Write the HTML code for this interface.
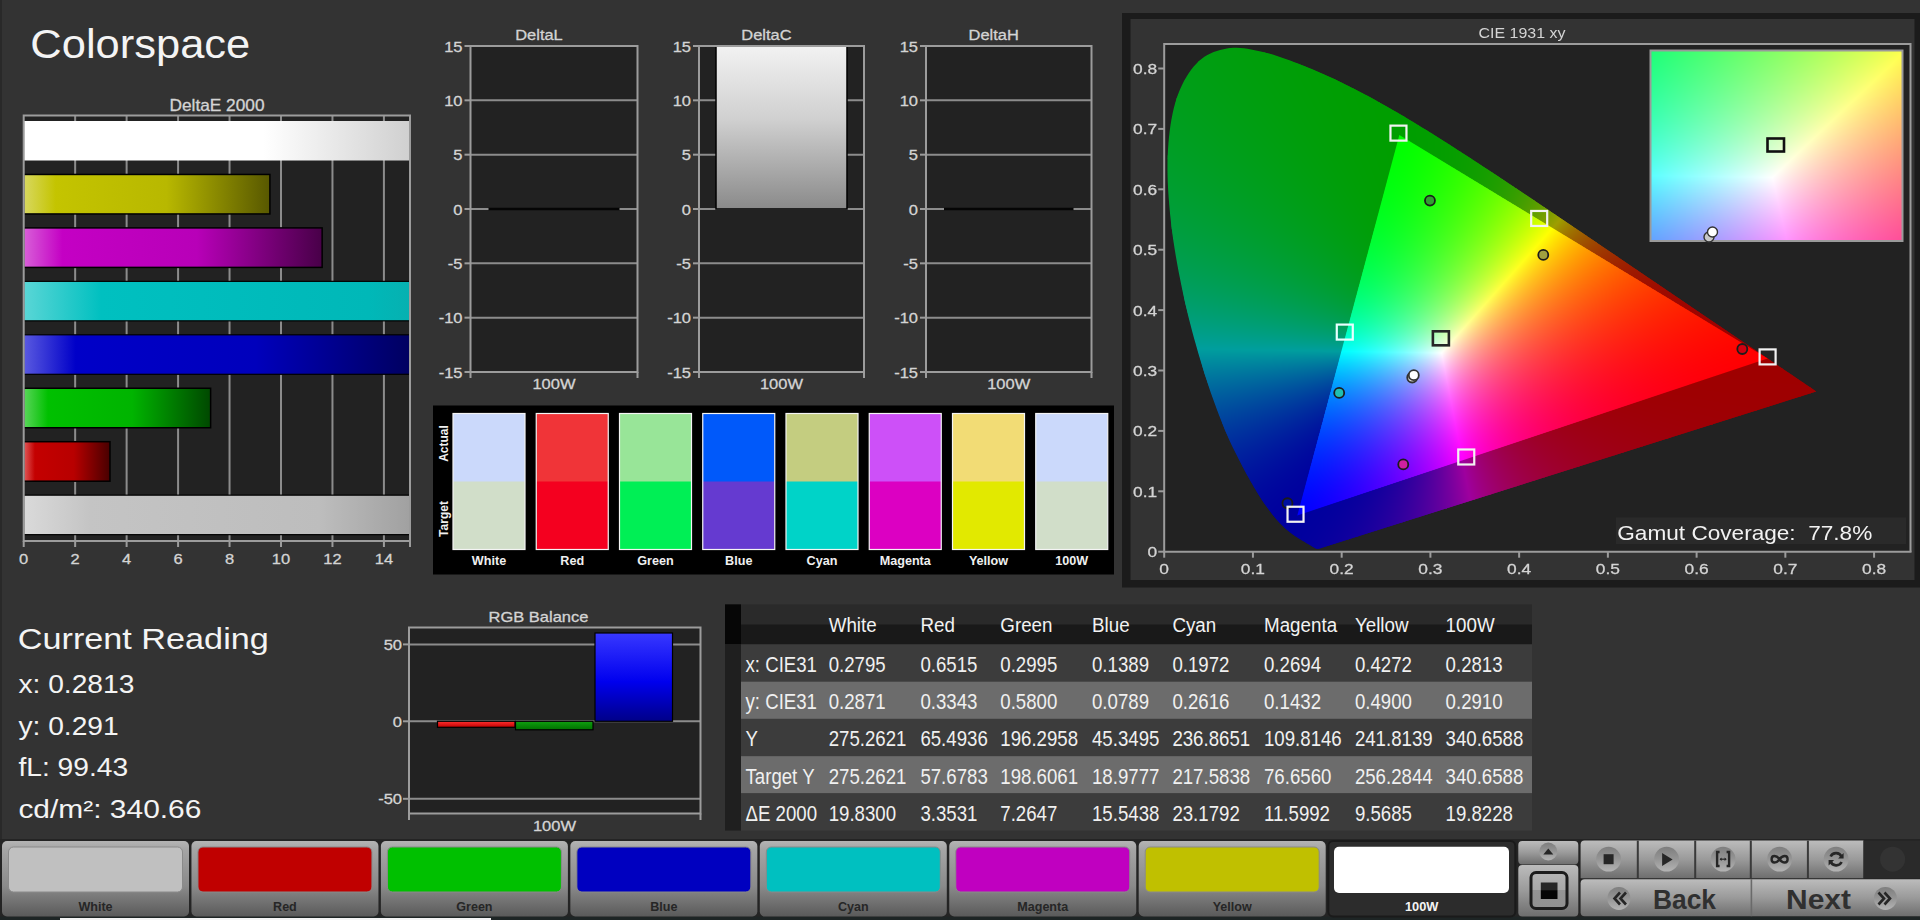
<!DOCTYPE html>
<html><head><meta charset="utf-8"><title>Colorspace</title>
<style>
html,body{margin:0;padding:0;background:#333333;width:1920px;height:920px;overflow:hidden;}
body{position:relative;font-family:"Liberation Sans", sans-serif;}
svg{position:absolute;left:0;top:0;}
svg text{font-family:"Liberation Sans", sans-serif;}
canvas{position:absolute;}
#edge{position:absolute;left:0;top:0;width:2px;height:840px;background:#292929;}
</style></head><body>
<div id="edge"></div>
<svg width="1920" height="920" viewBox="0 0 1920 920">
<defs><linearGradient id="de0" gradientUnits="userSpaceOnUse" x1="23.7" y1="0" x2="533.93" y2="0"><stop offset="0" stop-color="#ffffff"/><stop offset="0.13" stop-color="#ffffff"/><stop offset="0.47" stop-color="#ffffff"/><stop offset="1" stop-color="#a8a8a8"/></linearGradient><linearGradient id="de1" gradientUnits="userSpaceOnUse" x1="23.7" y1="0" x2="269.9" y2="0"><stop offset="0" stop-color="#d8d860"/><stop offset="0.13" stop-color="#c4c400"/><stop offset="0.58" stop-color="#b8b800"/><stop offset="1" stop-color="#585800"/></linearGradient><linearGradient id="de2" gradientUnits="userSpaceOnUse" x1="23.7" y1="0" x2="322.15" y2="0"><stop offset="0" stop-color="#d860d8"/><stop offset="0.13" stop-color="#c400c4"/><stop offset="0.58" stop-color="#b800b8"/><stop offset="1" stop-color="#480048"/></linearGradient><linearGradient id="de3" gradientUnits="userSpaceOnUse" x1="23.7" y1="0" x2="620.1" y2="0"><stop offset="0" stop-color="#5ad6d6"/><stop offset="0.13" stop-color="#00c0c0"/><stop offset="0.58" stop-color="#00b8b8"/><stop offset="1" stop-color="#2a8a8a"/></linearGradient><linearGradient id="de4" gradientUnits="userSpaceOnUse" x1="23.7" y1="0" x2="423.64" y2="0"><stop offset="0" stop-color="#5a5ae0"/><stop offset="0.13" stop-color="#0000c8"/><stop offset="0.58" stop-color="#0000bc"/><stop offset="1" stop-color="#000058"/></linearGradient><linearGradient id="de5" gradientUnits="userSpaceOnUse" x1="23.7" y1="0" x2="210.62" y2="0"><stop offset="0" stop-color="#5ad65a"/><stop offset="0.13" stop-color="#00c000"/><stop offset="0.58" stop-color="#00b400"/><stop offset="1" stop-color="#004800"/></linearGradient><linearGradient id="de6" gradientUnits="userSpaceOnUse" x1="23.7" y1="0" x2="109.98" y2="0"><stop offset="0" stop-color="#e05a5a"/><stop offset="0.13" stop-color="#c40000"/><stop offset="0.58" stop-color="#b80000"/><stop offset="1" stop-color="#480000"/></linearGradient><linearGradient id="de7" gradientUnits="userSpaceOnUse" x1="23.7" y1="0" x2="533.74" y2="0"><stop offset="0" stop-color="#dadada"/><stop offset="0.13" stop-color="#c4c4c4"/><stop offset="0.58" stop-color="#bdbdbd"/><stop offset="1" stop-color="#7a7a7a"/></linearGradient><linearGradient id="dc" x1="0" y1="0" x2="0" y2="1"><stop offset="0" stop-color="#f2f2f2"/><stop offset="0.45" stop-color="#d0d0d0"/><stop offset="1" stop-color="#8a8a8a"/></linearGradient><linearGradient id="rbR" x1="0" y1="0" x2="0" y2="1"><stop offset="0" stop-color="#ff3030"/><stop offset="1" stop-color="#c00000"/></linearGradient><linearGradient id="rbG" x1="0" y1="0" x2="0" y2="1"><stop offset="0" stop-color="#10a010"/><stop offset="1" stop-color="#007000"/></linearGradient><linearGradient id="rbB" x1="0" y1="0" x2="0" y2="1"><stop offset="0" stop-color="#3838ff"/><stop offset="0.55" stop-color="#0000ee"/><stop offset="1" stop-color="#000088"/></linearGradient><linearGradient id="btn" x1="0" y1="0" x2="0" y2="1"><stop offset="0" stop-color="#b4b4b4"/><stop offset="0.12" stop-color="#a4a4a4"/><stop offset="0.6" stop-color="#8a8a8a"/><stop offset="1" stop-color="#5a5a5a"/></linearGradient><linearGradient id="btn2" x1="0" y1="0" x2="0" y2="1"><stop offset="0" stop-color="#bcbcbc"/><stop offset="0.5" stop-color="#9a9a9a"/><stop offset="1" stop-color="#6e6e6e"/></linearGradient><linearGradient id="knob" x1="0" y1="0" x2="0" y2="1"><stop offset="0" stop-color="#7e7e7e"/><stop offset="0.5" stop-color="#959595"/><stop offset="1" stop-color="#b4b4b4"/></linearGradient><linearGradient id="stp" x1="0" y1="0" x2="0" y2="1"><stop offset="0" stop-color="#b4b4b4"/><stop offset="0.5" stop-color="#a8a8a8"/><stop offset="0.5" stop-color="#949494"/><stop offset="1" stop-color="#909090"/></linearGradient><linearGradient id="stp2" x1="0" y1="0" x2="0" y2="1"><stop offset="0" stop-color="#262626"/><stop offset="0.45" stop-color="#262626"/><stop offset="0.5" stop-color="#050505"/><stop offset="1" stop-color="#050505"/></linearGradient><clipPath id="clLoc"><path d="M1318.7 548.7 L1318.6 548.7 L1318.4 548.7 L1318.2 548.7 L1318.0 548.8 L1317.7 548.8 L1317.4 548.8 L1316.9 548.8 L1316.3 548.6 L1315.3 548.2 L1314.1 547.5 L1312.3 546.5 L1310.1 545.1 L1307.2 543.4 L1303.2 541.0 L1298.2 538.0 L1292.0 533.8 L1284.4 527.6 L1274.3 516.8 L1261.5 499.3 L1245.2 471.5 L1225.2 430.5 L1204.5 373.5 L1185.1 302.4 L1171.5 226.5 L1167.7 156.2 L1176.5 98.6 L1198.7 61.3 L1230.1 48.1 L1265.5 52.7 L1301.5 64.9 L1335.4 79.6 L1367.9 96.1 L1400.1 114.2 L1431.8 133.6 L1463.5 153.7 L1495.3 174.5 L1526.9 195.6 L1558.3 216.7 L1589.1 237.5 L1619.0 257.8 L1647.6 277.2 L1674.6 295.5 L1699.2 312.2 L1720.6 326.7 L1739.4 339.5 L1755.0 350.0 L1767.7 358.6 L1777.8 365.5 L1785.9 370.9 L1792.4 375.3 L1797.8 379.0 L1802.2 382.0 L1805.8 384.4 L1808.4 386.2 L1810.5 387.6 L1812.0 388.6 L1812.9 389.3 L1813.7 389.8 L1814.4 390.3 L1815.0 390.7 L1815.5 391.0 L1815.9 391.3 L1816.0 391.4 L1816.1 391.5 Z"/></clipPath><clipPath id="clTri"><path d="M1767.6 358.4 L1399.3 134.9 L1297.3 515.5 Z"/></clipPath></defs>
<rect x="1122" y="13" width="798" height="574.5" fill="#1b1b1b"/><rect x="1130.5" y="19" width="784" height="561" fill="#333333"/><rect x="1164.2" y="44" width="746.3" height="507.7" fill="#222222"/>
<g clip-path="url(#clLoc)"><path d="M1194 46h15v15h-15z" fill="#009e11"/><path d="M1208 46h15v15h-15z" fill="#009e0f"/><path d="M1222 46h15v15h-15z" fill="#009e0e"/><path d="M1236 46h15v15h-15z" fill="#009e0c"/><path d="M1250 46h15v15h-15z" fill="#009e0a"/><path d="M1264 46h15v15h-15z" fill="#009e08"/><path d="M1278 46h15v15h-15z" fill="#009e07"/><path d="M1180 60h15v15h-15z" fill="#009e15"/><path d="M1194 60h15v15h-15z" fill="#009e13"/><path d="M1208 60h15v15h-15z" fill="#009e11"/><path d="M1222 60h15v15h-15z" fill="#009e0f"/><path d="M1236 60h15v15h-15z" fill="#009e0d"/><path d="M1250 60h15v15h-15z" fill="#009e0b"/><path d="M1264 60h15v15h-15z" fill="#009e09"/><path d="M1278 60h15v15h-15z" fill="#009e08"/><path d="M1292 60h15v15h-15z" fill="#009e06"/><path d="M1306 60h15v15h-15z" fill="#009e04"/><path d="M1320 60h15v15h-15z" fill="#009e03"/><path d="M1180 74h15v15h-15z" fill="#009e17"/><path d="M1194 74h15v15h-15z" fill="#009e15"/><path d="M1208 74h15v15h-15z" fill="#009e13"/><path d="M1222 74h15v15h-15z" fill="#009e11"/><path d="M1236 74h15v15h-15z" fill="#009e0e"/><path d="M1250 74h15v15h-15z" fill="#009e0c"/><path d="M1264 74h15v15h-15z" fill="#009e0a"/><path d="M1278 74h15v15h-15z" fill="#009e09"/><path d="M1292 74h15v15h-15z" fill="#009e07"/><path d="M1306 74h15v15h-15z" fill="#009e05"/><path d="M1320 74h15v15h-15z" fill="#009e03"/><path d="M1334 74h15v15h-15z" fill="#009e02"/><path d="M1348 74h15v15h-15z" fill="#009e01"/><path d="M1166 88h15v15h-15z" fill="#009e1b"/><path d="M1180 88h15v15h-15z" fill="#009e19"/><path d="M1194 88h15v15h-15z" fill="#009e17"/><path d="M1208 88h15v15h-15z" fill="#009e14"/><path d="M1222 88h15v15h-15z" fill="#009e12"/><path d="M1236 88h15v15h-15z" fill="#009e10"/><path d="M1250 88h15v15h-15z" fill="#009e0e"/><path d="M1264 88h15v15h-15z" fill="#009e0c"/><path d="M1278 88h15v15h-15z" fill="#009e0a"/><path d="M1292 88h15v15h-15z" fill="#009e08"/><path d="M1306 88h15v15h-15z" fill="#009e06"/><path d="M1320 88h15v15h-15z" fill="#009e04"/><path d="M1334 88h15v15h-15z" fill="#009e03"/><path d="M1348 88h15v15h-15z" fill="#009e01"/><path d="M1362 88h15v15h-15z" fill="#009e01"/><path d="M1376 88h15v15h-15z" fill="#009e00"/><path d="M1166 102h15v15h-15z" fill="#009e1d"/><path d="M1180 102h15v15h-15z" fill="#009e1b"/><path d="M1194 102h15v15h-15z" fill="#009e19"/><path d="M1208 102h15v15h-15z" fill="#009e16"/><path d="M1222 102h15v15h-15z" fill="#009e14"/><path d="M1236 102h15v15h-15z" fill="#009e12"/><path d="M1250 102h15v15h-15z" fill="#009e10"/><path d="M1264 102h15v15h-15z" fill="#009e0d"/><path d="M1278 102h15v15h-15z" fill="#009e0b"/><path d="M1292 102h15v15h-15z" fill="#009e09"/><path d="M1306 102h15v15h-15z" fill="#009e07"/><path d="M1320 102h15v15h-15z" fill="#009e05"/><path d="M1334 102h15v15h-15z" fill="#009e03"/><path d="M1348 102h15v15h-15z" fill="#009e02"/><path d="M1362 102h15v15h-15z" fill="#009e01"/><path d="M1376 102h15v15h-15z" fill="#009e00"/><path d="M1390 102h15v15h-15z" fill="#009e00"/><path d="M1166 116h15v15h-15z" fill="#009e20"/><path d="M1180 116h15v15h-15z" fill="#009e1d"/><path d="M1194 116h15v15h-15z" fill="#009e1b"/><path d="M1208 116h15v15h-15z" fill="#009e19"/><path d="M1222 116h15v15h-15z" fill="#009e16"/><path d="M1236 116h15v15h-15z" fill="#009e14"/><path d="M1250 116h15v15h-15z" fill="#009e11"/><path d="M1264 116h15v15h-15z" fill="#009e0f"/><path d="M1278 116h15v15h-15z" fill="#009e0d"/><path d="M1292 116h15v15h-15z" fill="#009e0a"/><path d="M1306 116h15v15h-15z" fill="#009e08"/><path d="M1320 116h15v15h-15z" fill="#009e06"/><path d="M1334 116h15v15h-15z" fill="#009e04"/><path d="M1348 116h15v15h-15z" fill="#009e02"/><path d="M1362 116h15v15h-15z" fill="#009e01"/><path d="M1376 116h15v15h-15z" fill="#009e00"/><path d="M1390 116h15v15h-15z" fill="#009e00"/><path d="M1404 116h15v15h-15z" fill="#009e00"/><path d="M1418 116h15v15h-15z" fill="#019e00"/><path d="M1166 130h15v15h-15z" fill="#009e23"/><path d="M1180 130h15v15h-15z" fill="#009e20"/><path d="M1194 130h15v15h-15z" fill="#009e1e"/><path d="M1208 130h15v15h-15z" fill="#009e1b"/><path d="M1222 130h15v15h-15z" fill="#009e19"/><path d="M1236 130h15v15h-15z" fill="#009e16"/><path d="M1250 130h15v15h-15z" fill="#009e13"/><path d="M1264 130h15v15h-15z" fill="#009e11"/><path d="M1278 130h15v15h-15z" fill="#009e0e"/><path d="M1292 130h15v15h-15z" fill="#009e0c"/><path d="M1306 130h15v15h-15z" fill="#009e09"/><path d="M1320 130h15v15h-15z" fill="#009e07"/><path d="M1334 130h15v15h-15z" fill="#009e05"/><path d="M1348 130h15v15h-15z" fill="#009e03"/><path d="M1362 130h15v15h-15z" fill="#009e01"/><path d="M1376 130h15v15h-15z" fill="#009e00"/><path d="M1390 130h15v15h-15z" fill="#009e00"/><path d="M1404 130h15v15h-15z" fill="#009e00"/><path d="M1418 130h15v15h-15z" fill="#019e00"/><path d="M1432 130h15v15h-15z" fill="#039e00"/><path d="M1446 130h15v15h-15z" fill="#069e00"/><path d="M1166 144h15v15h-15z" fill="#009e26"/><path d="M1180 144h15v15h-15z" fill="#009e23"/><path d="M1194 144h15v15h-15z" fill="#009e21"/><path d="M1208 144h15v15h-15z" fill="#009e1e"/><path d="M1222 144h15v15h-15z" fill="#009e1b"/><path d="M1236 144h15v15h-15z" fill="#009e19"/><path d="M1250 144h15v15h-15z" fill="#009e16"/><path d="M1264 144h15v15h-15z" fill="#009e13"/><path d="M1278 144h15v15h-15z" fill="#009e10"/><path d="M1292 144h15v15h-15z" fill="#009e0e"/><path d="M1306 144h15v15h-15z" fill="#009e0b"/><path d="M1320 144h15v15h-15z" fill="#009e08"/><path d="M1334 144h15v15h-15z" fill="#009e06"/><path d="M1348 144h15v15h-15z" fill="#009e04"/><path d="M1362 144h15v15h-15z" fill="#009e02"/><path d="M1376 144h15v15h-15z" fill="#009e01"/><path d="M1390 144h15v15h-15z" fill="#009e02"/><path d="M1404 144h15v15h-15z" fill="#049e01"/><path d="M1418 144h15v15h-15z" fill="#089e00"/><path d="M1432 144h15v15h-15z" fill="#039e00"/><path d="M1446 144h15v15h-15z" fill="#069e00"/><path d="M1460 144h15v15h-15z" fill="#0b9e00"/><path d="M1166 158h15v15h-15z" fill="#009e29"/><path d="M1180 158h15v15h-15z" fill="#009e27"/><path d="M1194 158h15v15h-15z" fill="#009e24"/><path d="M1208 158h15v15h-15z" fill="#009e21"/><path d="M1222 158h15v15h-15z" fill="#009e1e"/><path d="M1236 158h15v15h-15z" fill="#009e1b"/><path d="M1250 158h15v15h-15z" fill="#009e19"/><path d="M1264 158h15v15h-15z" fill="#009e16"/><path d="M1278 158h15v15h-15z" fill="#009e13"/><path d="M1292 158h15v15h-15z" fill="#009e10"/><path d="M1306 158h15v15h-15z" fill="#009e0d"/><path d="M1320 158h15v15h-15z" fill="#009e0a"/><path d="M1334 158h15v15h-15z" fill="#009e07"/><path d="M1348 158h15v15h-15z" fill="#009e05"/><path d="M1362 158h15v15h-15z" fill="#009e03"/><path d="M1376 158h15v15h-15z" fill="#009e01"/><path d="M1390 158h15v15h-15z" fill="#019e04"/><path d="M1404 158h15v15h-15z" fill="#059e03"/><path d="M1418 158h15v15h-15z" fill="#0a9e02"/><path d="M1432 158h15v15h-15z" fill="#119e00"/><path d="M1446 158h15v15h-15z" fill="#079e00"/><path d="M1460 158h15v15h-15z" fill="#0c9e00"/><path d="M1474 158h15v15h-15z" fill="#129e00"/><path d="M1488 158h15v15h-15z" fill="#1b9e00"/><path d="M1166 172h15v15h-15z" fill="#009e2d"/><path d="M1180 172h15v15h-15z" fill="#009e2a"/><path d="M1194 172h15v15h-15z" fill="#009e28"/><path d="M1208 172h15v15h-15z" fill="#009e25"/><path d="M1222 172h15v15h-15z" fill="#009e22"/><path d="M1236 172h15v15h-15z" fill="#009e1f"/><path d="M1250 172h15v15h-15z" fill="#009e1c"/><path d="M1264 172h15v15h-15z" fill="#009e19"/><path d="M1278 172h15v15h-15z" fill="#009e15"/><path d="M1292 172h15v15h-15z" fill="#009e12"/><path d="M1306 172h15v15h-15z" fill="#009e0f"/><path d="M1320 172h15v15h-15z" fill="#009e0c"/><path d="M1334 172h15v15h-15z" fill="#009e09"/><path d="M1348 172h15v15h-15z" fill="#009e06"/><path d="M1362 172h15v15h-15z" fill="#009e03"/><path d="M1376 172h15v15h-15z" fill="#009e01"/><path d="M1390 172h15v15h-15z" fill="#029e07"/><path d="M1404 172h15v15h-15z" fill="#079e05"/><path d="M1418 172h15v15h-15z" fill="#0d9e04"/><path d="M1432 172h15v15h-15z" fill="#149e02"/><path d="M1446 172h15v15h-15z" fill="#1c9e01"/><path d="M1460 172h15v15h-15z" fill="#249e00"/><path d="M1474 172h15v15h-15z" fill="#149e00"/><path d="M1488 172h15v15h-15z" fill="#1e9e00"/><path d="M1502 172h15v15h-15z" fill="#299e00"/><path d="M1166 186h15v15h-15z" fill="#009e31"/><path d="M1180 186h15v15h-15z" fill="#009e2f"/><path d="M1194 186h15v15h-15z" fill="#009e2c"/><path d="M1208 186h15v15h-15z" fill="#009e29"/><path d="M1222 186h15v15h-15z" fill="#009e26"/><path d="M1236 186h15v15h-15z" fill="#009e23"/><path d="M1250 186h15v15h-15z" fill="#009e1f"/><path d="M1264 186h15v15h-15z" fill="#009e1c"/><path d="M1278 186h15v15h-15z" fill="#009e18"/><path d="M1292 186h15v15h-15z" fill="#009e15"/><path d="M1306 186h15v15h-15z" fill="#009e11"/><path d="M1320 186h15v15h-15z" fill="#009e0e"/><path d="M1334 186h15v15h-15z" fill="#009e0b"/><path d="M1348 186h15v15h-15z" fill="#009e07"/><path d="M1362 186h15v15h-15z" fill="#009e04"/><path d="M1376 186h15v15h-15z" fill="#009e02"/><path d="M1390 186h15v15h-15z" fill="#039e0a"/><path d="M1404 186h15v15h-15z" fill="#099e09"/><path d="M1418 186h15v15h-15z" fill="#0f9e07"/><path d="M1432 186h15v15h-15z" fill="#179e05"/><path d="M1446 186h15v15h-15z" fill="#209e04"/><path d="M1460 186h15v15h-15z" fill="#299e02"/><path d="M1474 186h15v15h-15z" fill="#349e01"/><path d="M1488 186h15v15h-15z" fill="#3f9e00"/><path d="M1502 186h15v15h-15z" fill="#2e9e00"/><path d="M1516 186h15v15h-15z" fill="#3e9e00"/><path d="M1530 186h15v15h-15z" fill="#509e00"/><path d="M1166 200h15v15h-15z" fill="#009e36"/><path d="M1180 200h15v15h-15z" fill="#009e33"/><path d="M1194 200h15v15h-15z" fill="#009e30"/><path d="M1208 200h15v15h-15z" fill="#009e2d"/><path d="M1222 200h15v15h-15z" fill="#009e2a"/><path d="M1236 200h15v15h-15z" fill="#009e27"/><path d="M1250 200h15v15h-15z" fill="#009e23"/><path d="M1264 200h15v15h-15z" fill="#009e20"/><path d="M1278 200h15v15h-15z" fill="#009e1c"/><path d="M1292 200h15v15h-15z" fill="#009e18"/><path d="M1306 200h15v15h-15z" fill="#009e15"/><path d="M1320 200h15v15h-15z" fill="#009e11"/><path d="M1334 200h15v15h-15z" fill="#009e0d"/><path d="M1348 200h15v15h-15z" fill="#009e09"/><path d="M1362 200h15v15h-15z" fill="#009e06"/><path d="M1376 200h15v15h-15z" fill="#019e10"/><path d="M1390 200h15v15h-15z" fill="#059e0e"/><path d="M1404 200h15v15h-15z" fill="#0b9e0d"/><path d="M1418 200h15v15h-15z" fill="#129e0b"/><path d="M1432 200h15v15h-15z" fill="#1b9e09"/><path d="M1446 200h15v15h-15z" fill="#249e07"/><path d="M1460 200h15v15h-15z" fill="#2f9e05"/><path d="M1474 200h15v15h-15z" fill="#3a9e04"/><path d="M1488 200h15v15h-15z" fill="#479e02"/><path d="M1502 200h15v15h-15z" fill="#549e01"/><path d="M1516 200h15v15h-15z" fill="#489e00"/><path d="M1530 200h15v15h-15z" fill="#5d9e00"/><path d="M1544 200h15v15h-15z" fill="#759e00"/><path d="M1166 214h15v15h-15z" fill="#009e3b"/><path d="M1180 214h15v15h-15z" fill="#009e39"/><path d="M1194 214h15v15h-15z" fill="#009e36"/><path d="M1208 214h15v15h-15z" fill="#009e32"/><path d="M1222 214h15v15h-15z" fill="#009e2f"/><path d="M1236 214h15v15h-15z" fill="#009e2c"/><path d="M1250 214h15v15h-15z" fill="#009e28"/><path d="M1264 214h15v15h-15z" fill="#009e24"/><path d="M1278 214h15v15h-15z" fill="#009e20"/><path d="M1292 214h15v15h-15z" fill="#009e1c"/><path d="M1306 214h15v15h-15z" fill="#009e18"/><path d="M1320 214h15v15h-15z" fill="#009e14"/><path d="M1334 214h15v15h-15z" fill="#009e10"/><path d="M1348 214h15v15h-15z" fill="#009e0c"/><path d="M1362 214h15v15h-15z" fill="#009e08"/><path d="M1376 214h15v15h-15z" fill="#029e15"/><path d="M1390 214h15v15h-15z" fill="#079e13"/><path d="M1404 214h15v15h-15z" fill="#0e9e11"/><path d="M1418 214h15v15h-15z" fill="#169e0f"/><path d="M1432 214h15v15h-15z" fill="#1f9e0d"/><path d="M1446 214h15v15h-15z" fill="#2a9e0b"/><path d="M1460 214h15v15h-15z" fill="#359e09"/><path d="M1474 214h15v15h-15z" fill="#429e07"/><path d="M1488 214h15v15h-15z" fill="#4f9e05"/><path d="M1502 214h15v15h-15z" fill="#5e9e03"/><path d="M1516 214h15v15h-15z" fill="#6f9e02"/><path d="M1530 214h15v15h-15z" fill="#809e00"/><path d="M1544 214h15v15h-15z" fill="#8c9e00"/><path d="M1558 214h15v15h-15z" fill="#9e9100"/><path d="M1572 214h15v15h-15z" fill="#9e7700"/><path d="M1166 228h15v15h-15z" fill="#009e41"/><path d="M1180 228h15v15h-15z" fill="#009e3f"/><path d="M1194 228h15v15h-15z" fill="#009e3c"/><path d="M1208 228h15v15h-15z" fill="#009e38"/><path d="M1222 228h15v15h-15z" fill="#009e35"/><path d="M1236 228h15v15h-15z" fill="#009e31"/><path d="M1250 228h15v15h-15z" fill="#009e2e"/><path d="M1264 228h15v15h-15z" fill="#009e2a"/><path d="M1278 228h15v15h-15z" fill="#009e26"/><path d="M1292 228h15v15h-15z" fill="#009e21"/><path d="M1306 228h15v15h-15z" fill="#009e1d"/><path d="M1320 228h15v15h-15z" fill="#009e18"/><path d="M1334 228h15v15h-15z" fill="#009e13"/><path d="M1348 228h15v15h-15z" fill="#009e0f"/><path d="M1362 228h15v15h-15z" fill="#009e0a"/><path d="M1376 228h15v15h-15z" fill="#039e1b"/><path d="M1390 228h15v15h-15z" fill="#099e19"/><path d="M1404 228h15v15h-15z" fill="#119e17"/><path d="M1418 228h15v15h-15z" fill="#1a9e15"/><path d="M1432 228h15v15h-15z" fill="#249e13"/><path d="M1446 228h15v15h-15z" fill="#309e10"/><path d="M1460 228h15v15h-15z" fill="#3d9e0e"/><path d="M1474 228h15v15h-15z" fill="#4b9e0c"/><path d="M1488 228h15v15h-15z" fill="#5a9e0a"/><path d="M1502 228h15v15h-15z" fill="#6a9e07"/><path d="M1516 228h15v15h-15z" fill="#7c9e05"/><path d="M1530 228h15v15h-15z" fill="#909e03"/><path d="M1544 228h15v15h-15z" fill="#9e9701"/><path d="M1558 228h15v15h-15z" fill="#9e7600"/><path d="M1572 228h15v15h-15z" fill="#9e6100"/><path d="M1586 228h15v15h-15z" fill="#9e5100"/><path d="M1166 242h15v15h-15z" fill="#009e48"/><path d="M1180 242h15v15h-15z" fill="#009e45"/><path d="M1194 242h15v15h-15z" fill="#009e42"/><path d="M1208 242h15v15h-15z" fill="#009e3f"/><path d="M1222 242h15v15h-15z" fill="#009e3c"/><path d="M1236 242h15v15h-15z" fill="#009e38"/><path d="M1250 242h15v15h-15z" fill="#009e34"/><path d="M1264 242h15v15h-15z" fill="#009e30"/><path d="M1278 242h15v15h-15z" fill="#009e2c"/><path d="M1292 242h15v15h-15z" fill="#009e27"/><path d="M1306 242h15v15h-15z" fill="#009e22"/><path d="M1320 242h15v15h-15z" fill="#009e1d"/><path d="M1334 242h15v15h-15z" fill="#009e18"/><path d="M1348 242h15v15h-15z" fill="#009e13"/><path d="M1362 242h15v15h-15z" fill="#009e25"/><path d="M1376 242h15v15h-15z" fill="#059e22"/><path d="M1390 242h15v15h-15z" fill="#0c9e20"/><path d="M1404 242h15v15h-15z" fill="#159e1e"/><path d="M1418 242h15v15h-15z" fill="#1f9e1c"/><path d="M1432 242h15v15h-15z" fill="#2a9e19"/><path d="M1446 242h15v15h-15z" fill="#379e17"/><path d="M1460 242h15v15h-15z" fill="#459e14"/><path d="M1474 242h15v15h-15z" fill="#559e12"/><path d="M1488 242h15v15h-15z" fill="#669e0f"/><path d="M1502 242h15v15h-15z" fill="#799e0d"/><path d="M1516 242h15v15h-15z" fill="#8d9e0a"/><path d="M1530 242h15v15h-15z" fill="#9e9907"/><path d="M1544 242h15v15h-15z" fill="#9e8604"/><path d="M1558 242h15v15h-15z" fill="#9e7602"/><path d="M1572 242h15v15h-15z" fill="#9e6801"/><path d="M1586 242h15v15h-15z" fill="#9e4000"/><path d="M1600 242h15v15h-15z" fill="#9e3600"/><path d="M1614 242h15v15h-15z" fill="#9e2e00"/><path d="M1166 256h15v15h-15z" fill="#009e50"/><path d="M1180 256h15v15h-15z" fill="#009e4d"/><path d="M1194 256h15v15h-15z" fill="#009e4a"/><path d="M1208 256h15v15h-15z" fill="#009e47"/><path d="M1222 256h15v15h-15z" fill="#009e43"/><path d="M1236 256h15v15h-15z" fill="#009e40"/><path d="M1250 256h15v15h-15z" fill="#009e3c"/><path d="M1264 256h15v15h-15z" fill="#009e38"/><path d="M1278 256h15v15h-15z" fill="#009e33"/><path d="M1292 256h15v15h-15z" fill="#009e2e"/><path d="M1306 256h15v15h-15z" fill="#009e29"/><path d="M1320 256h15v15h-15z" fill="#009e24"/><path d="M1334 256h15v15h-15z" fill="#009e1e"/><path d="M1348 256h15v15h-15z" fill="#009e18"/><path d="M1362 256h15v15h-15z" fill="#019e2d"/><path d="M1376 256h15v15h-15z" fill="#079e2b"/><path d="M1390 256h15v15h-15z" fill="#0f9e29"/><path d="M1404 256h15v15h-15z" fill="#199e26"/><path d="M1418 256h15v15h-15z" fill="#259e24"/><path d="M1432 256h15v15h-15z" fill="#319e21"/><path d="M1446 256h15v15h-15z" fill="#409e1f"/><path d="M1460 256h15v15h-15z" fill="#509e1c"/><path d="M1474 256h15v15h-15z" fill="#619e19"/><path d="M1488 256h15v15h-15z" fill="#749e16"/><path d="M1502 256h15v15h-15z" fill="#899e14"/><path d="M1516 256h15v15h-15z" fill="#9e9c11"/><path d="M1530 256h15v15h-15z" fill="#9e870c"/><path d="M1544 256h15v15h-15z" fill="#9e7508"/><path d="M1558 256h15v15h-15z" fill="#9e6705"/><path d="M1572 256h15v15h-15z" fill="#9e5b03"/><path d="M1586 256h15v15h-15z" fill="#9e5001"/><path d="M1600 256h15v15h-15z" fill="#9e4800"/><path d="M1614 256h15v15h-15z" fill="#9e2300"/><path d="M1628 256h15v15h-15z" fill="#9e1e00"/><path d="M1166 270h15v15h-15z" fill="#009e59"/><path d="M1180 270h15v15h-15z" fill="#009e56"/><path d="M1194 270h15v15h-15z" fill="#009e53"/><path d="M1208 270h15v15h-15z" fill="#009e50"/><path d="M1222 270h15v15h-15z" fill="#009e4d"/><path d="M1236 270h15v15h-15z" fill="#009e49"/><path d="M1250 270h15v15h-15z" fill="#009e45"/><path d="M1264 270h15v15h-15z" fill="#009e41"/><path d="M1278 270h15v15h-15z" fill="#009e3c"/><path d="M1292 270h15v15h-15z" fill="#009e37"/><path d="M1306 270h15v15h-15z" fill="#009e32"/><path d="M1320 270h15v15h-15z" fill="#009e2c"/><path d="M1334 270h15v15h-15z" fill="#009e26"/><path d="M1348 270h15v15h-15z" fill="#009e1f"/><path d="M1362 270h15v15h-15z" fill="#029e37"/><path d="M1376 270h15v15h-15z" fill="#0a9e35"/><path d="M1390 270h15v15h-15z" fill="#139e32"/><path d="M1404 270h15v15h-15z" fill="#1e9e30"/><path d="M1418 270h15v15h-15z" fill="#2b9e2e"/><path d="M1432 270h15v15h-15z" fill="#3a9e2b"/><path d="M1446 270h15v15h-15z" fill="#4a9e28"/><path d="M1460 270h15v15h-15z" fill="#5c9e25"/><path d="M1474 270h15v15h-15z" fill="#709e23"/><path d="M1488 270h15v15h-15z" fill="#869e20"/><path d="M1502 270h15v15h-15z" fill="#9e9e1c"/><path d="M1516 270h15v15h-15z" fill="#9e8816"/><path d="M1530 270h15v15h-15z" fill="#9e7510"/><path d="M1544 270h15v15h-15z" fill="#9e660c"/><path d="M1558 270h15v15h-15z" fill="#9e5909"/><path d="M1572 270h15v15h-15z" fill="#9e4f06"/><path d="M1586 270h15v15h-15z" fill="#9e4604"/><path d="M1600 270h15v15h-15z" fill="#9e3e02"/><path d="M1614 270h15v15h-15z" fill="#9e3701"/><path d="M1628 270h15v15h-15z" fill="#9e1600"/><path d="M1642 270h15v15h-15z" fill="#9e1300"/><path d="M1656 270h15v15h-15z" fill="#9e1100"/><path d="M1180 284h15v15h-15z" fill="#009e60"/><path d="M1194 284h15v15h-15z" fill="#009e5d"/><path d="M1208 284h15v15h-15z" fill="#009e5a"/><path d="M1222 284h15v15h-15z" fill="#009e57"/><path d="M1236 284h15v15h-15z" fill="#009e54"/><path d="M1250 284h15v15h-15z" fill="#009e50"/><path d="M1264 284h15v15h-15z" fill="#009e4c"/><path d="M1278 284h15v15h-15z" fill="#009e47"/><path d="M1292 284h15v15h-15z" fill="#009e42"/><path d="M1306 284h15v15h-15z" fill="#009e3d"/><path d="M1320 284h15v15h-15z" fill="#009e36"/><path d="M1334 284h15v15h-15z" fill="#009e30"/><path d="M1348 284h15v15h-15z" fill="#009e28"/><path d="M1362 284h15v15h-15z" fill="#059e43"/><path d="M1376 284h15v15h-15z" fill="#0d9e41"/><path d="M1390 284h15v15h-15z" fill="#189e3e"/><path d="M1404 284h15v15h-15z" fill="#259e3c"/><path d="M1418 284h15v15h-15z" fill="#339e39"/><path d="M1432 284h15v15h-15z" fill="#449e37"/><path d="M1446 284h15v15h-15z" fill="#569e34"/><path d="M1460 284h15v15h-15z" fill="#6b9e31"/><path d="M1474 284h15v15h-15z" fill="#829e2e"/><path d="M1488 284h15v15h-15z" fill="#9b9e2b"/><path d="M1502 284h15v15h-15z" fill="#9e8922"/><path d="M1516 284h15v15h-15z" fill="#9e751b"/><path d="M1530 284h15v15h-15z" fill="#9e6515"/><path d="M1544 284h15v15h-15z" fill="#9e5810"/><path d="M1558 284h15v15h-15z" fill="#9e4d0c"/><path d="M1572 284h15v15h-15z" fill="#9e4309"/><path d="M1586 284h15v15h-15z" fill="#9e3b06"/><path d="M1600 284h15v15h-15z" fill="#9e3404"/><path d="M1614 284h15v15h-15z" fill="#9e2e03"/><path d="M1628 284h15v15h-15z" fill="#9e2901"/><path d="M1642 284h15v15h-15z" fill="#9e2500"/><path d="M1656 284h15v15h-15z" fill="#9e0b00"/><path d="M1670 284h15v15h-15z" fill="#9e0a00"/><path d="M1180 298h15v15h-15z" fill="#009e6c"/><path d="M1194 298h15v15h-15z" fill="#009e69"/><path d="M1208 298h15v15h-15z" fill="#009e67"/><path d="M1222 298h15v15h-15z" fill="#009e64"/><path d="M1236 298h15v15h-15z" fill="#009e60"/><path d="M1250 298h15v15h-15z" fill="#009e5d"/><path d="M1264 298h15v15h-15z" fill="#009e59"/><path d="M1278 298h15v15h-15z" fill="#009e55"/><path d="M1292 298h15v15h-15z" fill="#009e50"/><path d="M1306 298h15v15h-15z" fill="#009e4a"/><path d="M1320 298h15v15h-15z" fill="#009e44"/><path d="M1334 298h15v15h-15z" fill="#009e3d"/><path d="M1348 298h15v15h-15z" fill="#009e54"/><path d="M1362 298h15v15h-15z" fill="#079e51"/><path d="M1376 298h15v15h-15z" fill="#119e4f"/><path d="M1390 298h15v15h-15z" fill="#1e9e4d"/><path d="M1404 298h15v15h-15z" fill="#2c9e4b"/><path d="M1418 298h15v15h-15z" fill="#3d9e48"/><path d="M1432 298h15v15h-15z" fill="#509e46"/><path d="M1446 298h15v15h-15z" fill="#659e43"/><path d="M1460 298h15v15h-15z" fill="#7d9e40"/><path d="M1474 298h15v15h-15z" fill="#979e3d"/><path d="M1488 298h15v15h-15z" fill="#9e8a32"/><path d="M1502 298h15v15h-15z" fill="#9e7528"/><path d="M1516 298h15v15h-15z" fill="#9e6420"/><path d="M1530 298h15v15h-15z" fill="#9e561a"/><path d="M1544 298h15v15h-15z" fill="#9e4b14"/><path d="M1558 298h15v15h-15z" fill="#9e4110"/><path d="M1572 298h15v15h-15z" fill="#9e390c"/><path d="M1586 298h15v15h-15z" fill="#9e320a"/><path d="M1600 298h15v15h-15z" fill="#9e2c07"/><path d="M1614 298h15v15h-15z" fill="#9e2705"/><path d="M1628 298h15v15h-15z" fill="#9e2203"/><path d="M1642 298h15v15h-15z" fill="#9e1e02"/><path d="M1656 298h15v15h-15z" fill="#9e1a01"/><path d="M1670 298h15v15h-15z" fill="#9e1700"/><path d="M1684 298h15v15h-15z" fill="#9e0500"/><path d="M1698 298h15v15h-15z" fill="#9e0500"/><path d="M1180 312h15v15h-15z" fill="#009e79"/><path d="M1194 312h15v15h-15z" fill="#009e77"/><path d="M1208 312h15v15h-15z" fill="#009e75"/><path d="M1222 312h15v15h-15z" fill="#009e73"/><path d="M1236 312h15v15h-15z" fill="#009e70"/><path d="M1250 312h15v15h-15z" fill="#009e6d"/><path d="M1264 312h15v15h-15z" fill="#009e69"/><path d="M1278 312h15v15h-15z" fill="#009e66"/><path d="M1292 312h15v15h-15z" fill="#009e61"/><path d="M1306 312h15v15h-15z" fill="#009e5c"/><path d="M1320 312h15v15h-15z" fill="#009e56"/><path d="M1334 312h15v15h-15z" fill="#009e50"/><path d="M1348 312h15v15h-15z" fill="#029e65"/><path d="M1362 312h15v15h-15z" fill="#0b9e63"/><path d="M1376 312h15v15h-15z" fill="#169e61"/><path d="M1390 312h15v15h-15z" fill="#259e5f"/><path d="M1404 312h15v15h-15z" fill="#369e5d"/><path d="M1418 312h15v15h-15z" fill="#499e5a"/><path d="M1432 312h15v15h-15z" fill="#5f9e58"/><path d="M1446 312h15v15h-15z" fill="#789e55"/><path d="M1460 312h15v15h-15z" fill="#949e53"/><path d="M1474 312h15v15h-15z" fill="#9e8c47"/><path d="M1488 312h15v15h-15z" fill="#9e7539"/><path d="M1502 312h15v15h-15z" fill="#9e632e"/><path d="M1516 312h15v15h-15z" fill="#9e5425"/><path d="M1530 312h15v15h-15z" fill="#9e491e"/><path d="M1544 312h15v15h-15z" fill="#9e3f19"/><path d="M1558 312h15v15h-15z" fill="#9e3614"/><path d="M1572 312h15v15h-15z" fill="#9e2f10"/><path d="M1586 312h15v15h-15z" fill="#9e290d"/><path d="M1600 312h15v15h-15z" fill="#9e240a"/><path d="M1614 312h15v15h-15z" fill="#9e1f07"/><path d="M1628 312h15v15h-15z" fill="#9e1b05"/><path d="M1642 312h15v15h-15z" fill="#9e1804"/><path d="M1656 312h15v15h-15z" fill="#9e1502"/><path d="M1670 312h15v15h-15z" fill="#9e1201"/><path d="M1684 312h15v15h-15z" fill="#9e1000"/><path d="M1698 312h15v15h-15z" fill="#9e0200"/><path d="M1712 312h15v15h-15z" fill="#9e0200"/><path d="M1180 326h15v15h-15z" fill="#009e89"/><path d="M1194 326h15v15h-15z" fill="#009e88"/><path d="M1208 326h15v15h-15z" fill="#009e86"/><path d="M1222 326h15v15h-15z" fill="#009e84"/><path d="M1236 326h15v15h-15z" fill="#009e82"/><path d="M1250 326h15v15h-15z" fill="#009e80"/><path d="M1264 326h15v15h-15z" fill="#009e7e"/><path d="M1278 326h15v15h-15z" fill="#009e7b"/><path d="M1292 326h15v15h-15z" fill="#009e78"/><path d="M1306 326h15v15h-15z" fill="#009e74"/><path d="M1320 326h15v15h-15z" fill="#009e6f"/><path d="M1334 326h15v15h-15z" fill="#009e6a"/><path d="M1348 326h15v15h-15z" fill="#049e7a"/><path d="M1362 326h15v15h-15z" fill="#0f9e78"/><path d="M1376 326h15v15h-15z" fill="#1d9e77"/><path d="M1390 326h15v15h-15z" fill="#2e9e75"/><path d="M1404 326h15v15h-15z" fill="#429e73"/><path d="M1418 326h15v15h-15z" fill="#589e72"/><path d="M1432 326h15v15h-15z" fill="#729e70"/><path d="M1446 326h15v15h-15z" fill="#8f9e6d"/><path d="M1460 326h15v15h-15z" fill="#9e8e60"/><path d="M1474 326h15v15h-15z" fill="#9e754d"/><path d="M1488 326h15v15h-15z" fill="#9e623f"/><path d="M1502 326h15v15h-15z" fill="#9e5234"/><path d="M1516 326h15v15h-15z" fill="#9e462b"/><path d="M1530 326h15v15h-15z" fill="#9e3c23"/><path d="M1544 326h15v15h-15z" fill="#9e331d"/><path d="M1558 326h15v15h-15z" fill="#9e2c18"/><path d="M1572 326h15v15h-15z" fill="#9e2614"/><path d="M1586 326h15v15h-15z" fill="#9e2110"/><path d="M1600 326h15v15h-15z" fill="#9e1c0d"/><path d="M1614 326h15v15h-15z" fill="#9e190a"/><path d="M1628 326h15v15h-15z" fill="#9e1508"/><path d="M1642 326h15v15h-15z" fill="#9e1206"/><path d="M1656 326h15v15h-15z" fill="#9e1004"/><path d="M1670 326h15v15h-15z" fill="#9e0d03"/><path d="M1684 326h15v15h-15z" fill="#9e0b02"/><path d="M1698 326h15v15h-15z" fill="#9e0901"/><path d="M1712 326h15v15h-15z" fill="#9e0800"/><path d="M1726 326h15v15h-15z" fill="#9e0100"/><path d="M1740 326h15v15h-15z" fill="#9e0100"/><path d="M1194 340h15v15h-15z" fill="#009e9b"/><path d="M1208 340h15v15h-15z" fill="#009e9b"/><path d="M1222 340h15v15h-15z" fill="#009e9a"/><path d="M1236 340h15v15h-15z" fill="#009e99"/><path d="M1250 340h15v15h-15z" fill="#009e98"/><path d="M1264 340h15v15h-15z" fill="#009e97"/><path d="M1278 340h15v15h-15z" fill="#009e96"/><path d="M1292 340h15v15h-15z" fill="#009e95"/><path d="M1306 340h15v15h-15z" fill="#009e93"/><path d="M1320 340h15v15h-15z" fill="#009e92"/><path d="M1334 340h15v15h-15z" fill="#009e8f"/><path d="M1348 340h15v15h-15z" fill="#079e94"/><path d="M1362 340h15v15h-15z" fill="#159e93"/><path d="M1376 340h15v15h-15z" fill="#259e92"/><path d="M1390 340h15v15h-15z" fill="#399e92"/><path d="M1404 340h15v15h-15z" fill="#519e91"/><path d="M1418 340h15v15h-15z" fill="#6c9e8f"/><path d="M1432 340h15v15h-15z" fill="#8a9e8e"/><path d="M1446 340h15v15h-15z" fill="#9e9080"/><path d="M1460 340h15v15h-15z" fill="#9e7567"/><path d="M1474 340h15v15h-15z" fill="#9e6054"/><path d="M1488 340h15v15h-15z" fill="#9e5045"/><path d="M1502 340h15v15h-15z" fill="#9e4339"/><path d="M1516 340h15v15h-15z" fill="#9e3930"/><path d="M1530 340h15v15h-15z" fill="#9e3028"/><path d="M1544 340h15v15h-15z" fill="#9e2921"/><path d="M1558 340h15v15h-15z" fill="#9e231c"/><path d="M1572 340h15v15h-15z" fill="#9e1e17"/><path d="M1586 340h15v15h-15z" fill="#9e1913"/><path d="M1600 340h15v15h-15z" fill="#9e1610"/><path d="M1614 340h15v15h-15z" fill="#9e120d"/><path d="M1628 340h15v15h-15z" fill="#9e100a"/><path d="M1642 340h15v15h-15z" fill="#9e0d08"/><path d="M1656 340h15v15h-15z" fill="#9e0b06"/><path d="M1670 340h15v15h-15z" fill="#9e0905"/><path d="M1684 340h15v15h-15z" fill="#9e0703"/><path d="M1698 340h15v15h-15z" fill="#9e0602"/><path d="M1712 340h15v15h-15z" fill="#9e0501"/><path d="M1726 340h15v15h-15z" fill="#9e0301"/><path d="M1740 340h15v15h-15z" fill="#9e0200"/><path d="M1754 340h15v15h-15z" fill="#9e0000"/><path d="M1194 354h15v15h-15z" fill="#008c9e"/><path d="M1208 354h15v15h-15z" fill="#008c9e"/><path d="M1222 354h15v15h-15z" fill="#008b9e"/><path d="M1236 354h15v15h-15z" fill="#008a9e"/><path d="M1250 354h15v15h-15z" fill="#00899e"/><path d="M1264 354h15v15h-15z" fill="#00889e"/><path d="M1278 354h15v15h-15z" fill="#00869e"/><path d="M1292 354h15v15h-15z" fill="#00859e"/><path d="M1306 354h15v15h-15z" fill="#00839e"/><path d="M1320 354h15v15h-15z" fill="#00809e"/><path d="M1334 354h15v15h-15z" fill="#018a9e"/><path d="M1348 354h15v15h-15z" fill="#0a8a9e"/><path d="M1362 354h15v15h-15z" fill="#188a9e"/><path d="M1376 354h15v15h-15z" fill="#2a899e"/><path d="M1390 354h15v15h-15z" fill="#3e899e"/><path d="M1404 354h15v15h-15z" fill="#57899e"/><path d="M1418 354h15v15h-15z" fill="#73899e"/><path d="M1432 354h15v15h-15z" fill="#93889e"/><path d="M1446 354h15v15h-15z" fill="#9e7587"/><path d="M1460 354h15v15h-15z" fill="#9e5e6e"/><path d="M1474 354h15v15h-15z" fill="#9e4d5a"/><path d="M1488 354h15v15h-15z" fill="#9e404b"/><path d="M1502 354h15v15h-15z" fill="#9e353f"/><path d="M1516 354h15v15h-15z" fill="#9e2d35"/><path d="M1530 354h15v15h-15z" fill="#9e262c"/><path d="M1544 354h15v15h-15z" fill="#9e2026"/><path d="M1558 354h15v15h-15z" fill="#9e1b20"/><path d="M1572 354h15v15h-15z" fill="#9e161b"/><path d="M1586 354h15v15h-15z" fill="#9e1317"/><path d="M1600 354h15v15h-15z" fill="#9e1013"/><path d="M1614 354h15v15h-15z" fill="#9e0d10"/><path d="M1628 354h15v15h-15z" fill="#9e0a0d"/><path d="M1642 354h15v15h-15z" fill="#9e080b"/><path d="M1656 354h15v15h-15z" fill="#9e0709"/><path d="M1670 354h15v15h-15z" fill="#9e0507"/><path d="M1684 354h15v15h-15z" fill="#9e0405"/><path d="M1698 354h15v15h-15z" fill="#9e0304"/><path d="M1712 354h15v15h-15z" fill="#9e0203"/><path d="M1726 354h15v15h-15z" fill="#9e0102"/><path d="M1740 354h15v15h-15z" fill="#9e0001"/><path d="M1754 354h15v15h-15z" fill="#9e0000"/><path d="M1768 354h15v15h-15z" fill="#9e0000"/><path d="M1194 368h15v15h-15z" fill="#00799e"/><path d="M1208 368h15v15h-15z" fill="#00789e"/><path d="M1222 368h15v15h-15z" fill="#00769e"/><path d="M1236 368h15v15h-15z" fill="#00739e"/><path d="M1250 368h15v15h-15z" fill="#00719e"/><path d="M1264 368h15v15h-15z" fill="#006e9e"/><path d="M1278 368h15v15h-15z" fill="#006b9e"/><path d="M1292 368h15v15h-15z" fill="#00679e"/><path d="M1306 368h15v15h-15z" fill="#00629e"/><path d="M1320 368h15v15h-15z" fill="#005d9e"/><path d="M1334 368h15v15h-15z" fill="#03709e"/><path d="M1348 368h15v15h-15z" fill="#0d6f9e"/><path d="M1362 368h15v15h-15z" fill="#1a6e9e"/><path d="M1376 368h15v15h-15z" fill="#2b6d9e"/><path d="M1390 368h15v15h-15z" fill="#3f6c9e"/><path d="M1404 368h15v15h-15z" fill="#556b9e"/><path d="M1418 368h15v15h-15z" fill="#706a9e"/><path d="M1432 368h15v15h-15z" fill="#8e689e"/><path d="M1446 368h15v15h-15z" fill="#9e5c8e"/><path d="M1460 368h15v15h-15z" fill="#9e4a74"/><path d="M1474 368h15v15h-15z" fill="#9e3d60"/><path d="M1488 368h15v15h-15z" fill="#9e3251"/><path d="M1502 368h15v15h-15z" fill="#9e2944"/><path d="M1516 368h15v15h-15z" fill="#9e223a"/><path d="M1530 368h15v15h-15z" fill="#9e1c31"/><path d="M1544 368h15v15h-15z" fill="#9e172a"/><path d="M1558 368h15v15h-15z" fill="#9e1324"/><path d="M1572 368h15v15h-15z" fill="#9e101e"/><path d="M1586 368h15v15h-15z" fill="#9e0d1a"/><path d="M1600 368h15v15h-15z" fill="#9e0a16"/><path d="M1614 368h15v15h-15z" fill="#9e0813"/><path d="M1628 368h15v15h-15z" fill="#9e0610"/><path d="M1642 368h15v15h-15z" fill="#9e040d"/><path d="M1656 368h15v15h-15z" fill="#9e030b"/><path d="M1670 368h15v15h-15z" fill="#9e0209"/><path d="M1684 368h15v15h-15z" fill="#9e0107"/><path d="M1698 368h15v15h-15z" fill="#9e0006"/><path d="M1712 368h15v15h-15z" fill="#9e0000"/><path d="M1726 368h15v15h-15z" fill="#9e0000"/><path d="M1740 368h15v15h-15z" fill="#9e0000"/><path d="M1754 368h15v15h-15z" fill="#9e0000"/><path d="M1768 368h15v15h-15z" fill="#9e0000"/><path d="M1782 368h15v15h-15z" fill="#9e0000"/><path d="M1796 368h15v15h-15z" fill="#9e0000"/><path d="M1194 382h15v15h-15z" fill="#00689e"/><path d="M1208 382h15v15h-15z" fill="#00669e"/><path d="M1222 382h15v15h-15z" fill="#00639e"/><path d="M1236 382h15v15h-15z" fill="#00609e"/><path d="M1250 382h15v15h-15z" fill="#005c9e"/><path d="M1264 382h15v15h-15z" fill="#00589e"/><path d="M1278 382h15v15h-15z" fill="#00549e"/><path d="M1292 382h15v15h-15z" fill="#004e9e"/><path d="M1306 382h15v15h-15z" fill="#00489e"/><path d="M1320 382h15v15h-15z" fill="#00419e"/><path d="M1334 382h15v15h-15z" fill="#045a9e"/><path d="M1348 382h15v15h-15z" fill="#0f599e"/><path d="M1362 382h15v15h-15z" fill="#1c579e"/><path d="M1376 382h15v15h-15z" fill="#2c569e"/><path d="M1390 382h15v15h-15z" fill="#3f549e"/><path d="M1404 382h15v15h-15z" fill="#54529e"/><path d="M1418 382h15v15h-15z" fill="#6d509e"/><path d="M1432 382h15v15h-15z" fill="#894e9e"/><path d="M1446 382h15v15h-15z" fill="#9e4795"/><path d="M1460 382h15v15h-15z" fill="#9e397b"/><path d="M1474 382h15v15h-15z" fill="#9e2d66"/><path d="M1488 382h15v15h-15z" fill="#9e2556"/><path d="M1502 382h15v15h-15z" fill="#9e1e49"/><path d="M1516 382h15v15h-15z" fill="#9e183e"/><path d="M1530 382h15v15h-15z" fill="#9e1335"/><path d="M1544 382h15v15h-15z" fill="#9e102e"/><path d="M1558 382h15v15h-15z" fill="#9e0c28"/><path d="M1572 382h15v15h-15z" fill="#9e0a22"/><path d="M1586 382h15v15h-15z" fill="#9e071d"/><path d="M1600 382h15v15h-15z" fill="#9e0519"/><path d="M1614 382h15v15h-15z" fill="#9e0416"/><path d="M1628 382h15v15h-15z" fill="#9e0212"/><path d="M1642 382h15v15h-15z" fill="#9e0110"/><path d="M1656 382h15v15h-15z" fill="#9e000d"/><path d="M1670 382h15v15h-15z" fill="#9e0002"/><path d="M1684 382h15v15h-15z" fill="#9e0002"/><path d="M1698 382h15v15h-15z" fill="#9e0001"/><path d="M1712 382h15v15h-15z" fill="#9e0001"/><path d="M1726 382h15v15h-15z" fill="#9e0001"/><path d="M1740 382h15v15h-15z" fill="#9e0001"/><path d="M1754 382h15v15h-15z" fill="#9e0001"/><path d="M1768 382h15v15h-15z" fill="#9e0001"/><path d="M1782 382h15v15h-15z" fill="#9e0001"/><path d="M1796 382h15v15h-15z" fill="#9e0001"/><path d="M1810 382h15v15h-15z" fill="#9e0001"/><path d="M1208 396h15v15h-15z" fill="#00569e"/><path d="M1222 396h15v15h-15z" fill="#00529e"/><path d="M1236 396h15v15h-15z" fill="#004e9e"/><path d="M1250 396h15v15h-15z" fill="#004a9e"/><path d="M1264 396h15v15h-15z" fill="#00459e"/><path d="M1278 396h15v15h-15z" fill="#00409e"/><path d="M1292 396h15v15h-15z" fill="#003a9e"/><path d="M1306 396h15v15h-15z" fill="#00339e"/><path d="M1320 396h15v15h-15z" fill="#002b9e"/><path d="M1334 396h15v15h-15z" fill="#06479e"/><path d="M1348 396h15v15h-15z" fill="#11469e"/><path d="M1362 396h15v15h-15z" fill="#1e449e"/><path d="M1376 396h15v15h-15z" fill="#2d429e"/><path d="M1390 396h15v15h-15z" fill="#3f3f9e"/><path d="M1404 396h15v15h-15z" fill="#533d9e"/><path d="M1418 396h15v15h-15z" fill="#6a3b9e"/><path d="M1432 396h15v15h-15z" fill="#84389e"/><path d="M1446 396h15v15h-15z" fill="#9e349b"/><path d="M1460 396h15v15h-15z" fill="#9e2980"/><path d="M1474 396h15v15h-15z" fill="#9e206c"/><path d="M1488 396h15v15h-15z" fill="#9e195c"/><path d="M1502 396h15v15h-15z" fill="#9e144e"/><path d="M1516 396h15v15h-15z" fill="#9e0f43"/><path d="M1530 396h15v15h-15z" fill="#9e0c3a"/><path d="M1544 396h15v15h-15z" fill="#9e0932"/><path d="M1558 396h15v15h-15z" fill="#9e062b"/><path d="M1572 396h15v15h-15z" fill="#9e0426"/><path d="M1586 396h15v15h-15z" fill="#9e0321"/><path d="M1600 396h15v15h-15z" fill="#9e021c"/><path d="M1614 396h15v15h-15z" fill="#9e0119"/><path d="M1628 396h15v15h-15z" fill="#9e0005"/><path d="M1642 396h15v15h-15z" fill="#9e0005"/><path d="M1656 396h15v15h-15z" fill="#9e0004"/><path d="M1670 396h15v15h-15z" fill="#9e0004"/><path d="M1684 396h15v15h-15z" fill="#9e0003"/><path d="M1698 396h15v15h-15z" fill="#9e0003"/><path d="M1712 396h15v15h-15z" fill="#9e0003"/><path d="M1726 396h15v15h-15z" fill="#9e0002"/><path d="M1740 396h15v15h-15z" fill="#9e0002"/><path d="M1754 396h15v15h-15z" fill="#9e0002"/><path d="M1768 396h15v15h-15z" fill="#9e0002"/><path d="M1782 396h15v15h-15z" fill="#9e0002"/><path d="M1796 396h15v15h-15z" fill="#9e0001"/><path d="M1208 410h15v15h-15z" fill="#00489e"/><path d="M1222 410h15v15h-15z" fill="#00449e"/><path d="M1236 410h15v15h-15z" fill="#003f9e"/><path d="M1250 410h15v15h-15z" fill="#003b9e"/><path d="M1264 410h15v15h-15z" fill="#00359e"/><path d="M1278 410h15v15h-15z" fill="#00309e"/><path d="M1292 410h15v15h-15z" fill="#00299e"/><path d="M1306 410h15v15h-15z" fill="#00229e"/><path d="M1320 410h15v15h-15z" fill="#01399e"/><path d="M1334 410h15v15h-15z" fill="#08379e"/><path d="M1348 410h15v15h-15z" fill="#13359e"/><path d="M1362 410h15v15h-15z" fill="#1f339e"/><path d="M1376 410h15v15h-15z" fill="#2e309e"/><path d="M1390 410h15v15h-15z" fill="#3f2e9e"/><path d="M1404 410h15v15h-15z" fill="#522b9e"/><path d="M1418 410h15v15h-15z" fill="#68299e"/><path d="M1432 410h15v15h-15z" fill="#81269e"/><path d="M1446 410h15v15h-15z" fill="#9c239e"/><path d="M1460 410h15v15h-15z" fill="#9e1b86"/><path d="M1474 410h15v15h-15z" fill="#9e1571"/><path d="M1488 410h15v15h-15z" fill="#9e0f61"/><path d="M1502 410h15v15h-15z" fill="#9e0b53"/><path d="M1516 410h15v15h-15z" fill="#9e0848"/><path d="M1530 410h15v15h-15z" fill="#9e063e"/><path d="M1544 410h15v15h-15z" fill="#9e0436"/><path d="M1558 410h15v15h-15z" fill="#9e022f"/><path d="M1572 410h15v15h-15z" fill="#9e0129"/><path d="M1586 410h15v15h-15z" fill="#9e000d"/><path d="M1600 410h15v15h-15z" fill="#9e000b"/><path d="M1614 410h15v15h-15z" fill="#9e000a"/><path d="M1628 410h15v15h-15z" fill="#9e0008"/><path d="M1642 410h15v15h-15z" fill="#9e0007"/><path d="M1656 410h15v15h-15z" fill="#9e0007"/><path d="M1670 410h15v15h-15z" fill="#9e0006"/><path d="M1684 410h15v15h-15z" fill="#9e0005"/><path d="M1698 410h15v15h-15z" fill="#9e0005"/><path d="M1712 410h15v15h-15z" fill="#9e0004"/><path d="M1726 410h15v15h-15z" fill="#9e0004"/><path d="M1740 410h15v15h-15z" fill="#9e0003"/><path d="M1754 410h15v15h-15z" fill="#9e0003"/><path d="M1222 424h15v15h-15z" fill="#00379e"/><path d="M1236 424h15v15h-15z" fill="#00329e"/><path d="M1250 424h15v15h-15z" fill="#002d9e"/><path d="M1264 424h15v15h-15z" fill="#00289e"/><path d="M1278 424h15v15h-15z" fill="#00229e"/><path d="M1292 424h15v15h-15z" fill="#001c9e"/><path d="M1306 424h15v15h-15z" fill="#00169e"/><path d="M1320 424h15v15h-15z" fill="#022b9e"/><path d="M1334 424h15v15h-15z" fill="#0a299e"/><path d="M1348 424h15v15h-15z" fill="#14279e"/><path d="M1362 424h15v15h-15z" fill="#21259e"/><path d="M1376 424h15v15h-15z" fill="#2f229e"/><path d="M1390 424h15v15h-15z" fill="#3f209e"/><path d="M1404 424h15v15h-15z" fill="#521d9e"/><path d="M1418 424h15v15h-15z" fill="#661a9e"/><path d="M1432 424h15v15h-15z" fill="#7d179e"/><path d="M1446 424h15v15h-15z" fill="#97149e"/><path d="M1460 424h15v15h-15z" fill="#9e0f8c"/><path d="M1474 424h15v15h-15z" fill="#9e0b77"/><path d="M1488 424h15v15h-15z" fill="#9e0766"/><path d="M1502 424h15v15h-15z" fill="#9e0458"/><path d="M1516 424h15v15h-15z" fill="#9e024c"/><path d="M1530 424h15v15h-15z" fill="#9e0142"/><path d="M1544 424h15v15h-15z" fill="#9e001d"/><path d="M1558 424h15v15h-15z" fill="#9e0018"/><path d="M1572 424h15v15h-15z" fill="#9e0015"/><path d="M1586 424h15v15h-15z" fill="#9e0012"/><path d="M1600 424h15v15h-15z" fill="#9e0010"/><path d="M1614 424h15v15h-15z" fill="#9e000e"/><path d="M1628 424h15v15h-15z" fill="#9e000c"/><path d="M1642 424h15v15h-15z" fill="#9e000b"/><path d="M1656 424h15v15h-15z" fill="#9e0009"/><path d="M1670 424h15v15h-15z" fill="#9e0008"/><path d="M1684 424h15v15h-15z" fill="#9e0008"/><path d="M1698 424h15v15h-15z" fill="#9e0007"/><path d="M1712 424h15v15h-15z" fill="#9e0006"/><path d="M1222 438h15v15h-15z" fill="#002c9e"/><path d="M1236 438h15v15h-15z" fill="#00279e"/><path d="M1250 438h15v15h-15z" fill="#00229e"/><path d="M1264 438h15v15h-15z" fill="#001d9e"/><path d="M1278 438h15v15h-15z" fill="#00189e"/><path d="M1292 438h15v15h-15z" fill="#00129e"/><path d="M1306 438h15v15h-15z" fill="#000c9e"/><path d="M1320 438h15v15h-15z" fill="#041f9e"/><path d="M1334 438h15v15h-15z" fill="#0c1d9e"/><path d="M1348 438h15v15h-15z" fill="#161b9e"/><path d="M1362 438h15v15h-15z" fill="#22199e"/><path d="M1376 438h15v15h-15z" fill="#30169e"/><path d="M1390 438h15v15h-15z" fill="#3f149e"/><path d="M1404 438h15v15h-15z" fill="#51119e"/><path d="M1418 438h15v15h-15z" fill="#640e9e"/><path d="M1432 438h15v15h-15z" fill="#7a0c9e"/><path d="M1446 438h15v15h-15z" fill="#92099e"/><path d="M1460 438h15v15h-15z" fill="#9e0691"/><path d="M1474 438h15v15h-15z" fill="#9e037c"/><path d="M1488 438h15v15h-15z" fill="#9e016b"/><path d="M1502 438h15v15h-15z" fill="#9e0040"/><path d="M1516 438h15v15h-15z" fill="#9e0034"/><path d="M1530 438h15v15h-15z" fill="#9e002b"/><path d="M1544 438h15v15h-15z" fill="#9e0024"/><path d="M1558 438h15v15h-15z" fill="#9e001f"/><path d="M1572 438h15v15h-15z" fill="#9e001b"/><path d="M1586 438h15v15h-15z" fill="#9e0017"/><path d="M1600 438h15v15h-15z" fill="#9e0014"/><path d="M1614 438h15v15h-15z" fill="#9e0012"/><path d="M1628 438h15v15h-15z" fill="#9e0010"/><path d="M1642 438h15v15h-15z" fill="#9e000e"/><path d="M1656 438h15v15h-15z" fill="#9e000d"/><path d="M1222 452h15v15h-15z" fill="#00229e"/><path d="M1236 452h15v15h-15z" fill="#001e9e"/><path d="M1250 452h15v15h-15z" fill="#00199e"/><path d="M1264 452h15v15h-15z" fill="#00149e"/><path d="M1278 452h15v15h-15z" fill="#000f9e"/><path d="M1292 452h15v15h-15z" fill="#000b9e"/><path d="M1306 452h15v15h-15z" fill="#00179e"/><path d="M1320 452h15v15h-15z" fill="#05159e"/><path d="M1334 452h15v15h-15z" fill="#0e139e"/><path d="M1348 452h15v15h-15z" fill="#18119e"/><path d="M1362 452h15v15h-15z" fill="#230f9e"/><path d="M1376 452h15v15h-15z" fill="#310c9e"/><path d="M1390 452h15v15h-15z" fill="#400a9e"/><path d="M1404 452h15v15h-15z" fill="#50089e"/><path d="M1418 452h15v15h-15z" fill="#63059e"/><path d="M1432 452h15v15h-15z" fill="#77039e"/><path d="M1446 452h15v15h-15z" fill="#8e019e"/><path d="M1460 452h15v15h-15z" fill="#9e0090"/><path d="M1474 452h15v15h-15z" fill="#9e0071"/><path d="M1488 452h15v15h-15z" fill="#9e005a"/><path d="M1502 452h15v15h-15z" fill="#9e0049"/><path d="M1516 452h15v15h-15z" fill="#9e003d"/><path d="M1530 452h15v15h-15z" fill="#9e0033"/><path d="M1544 452h15v15h-15z" fill="#9e002b"/><path d="M1558 452h15v15h-15z" fill="#9e0025"/><path d="M1572 452h15v15h-15z" fill="#9e0020"/><path d="M1586 452h15v15h-15z" fill="#9e001c"/><path d="M1600 452h15v15h-15z" fill="#9e0019"/><path d="M1614 452h15v15h-15z" fill="#9e0016"/><path d="M1236 466h15v15h-15z" fill="#00169e"/><path d="M1250 466h15v15h-15z" fill="#00129e"/><path d="M1264 466h15v15h-15z" fill="#000d9e"/><path d="M1278 466h15v15h-15z" fill="#00099e"/><path d="M1292 466h15v15h-15z" fill="#00059e"/><path d="M1306 466h15v15h-15z" fill="#010f9e"/><path d="M1320 466h15v15h-15z" fill="#070d9e"/><path d="M1334 466h15v15h-15z" fill="#0f0b9e"/><path d="M1348 466h15v15h-15z" fill="#19099e"/><path d="M1362 466h15v15h-15z" fill="#24079e"/><path d="M1376 466h15v15h-15z" fill="#31059e"/><path d="M1390 466h15v15h-15z" fill="#40039e"/><path d="M1404 466h15v15h-15z" fill="#50019e"/><path d="M1418 466h15v15h-15z" fill="#46009e"/><path d="M1432 466h15v15h-15z" fill="#60009e"/><path d="M1446 466h15v15h-15z" fill="#7f009e"/><path d="M1460 466h15v15h-15z" fill="#9e0099"/><path d="M1474 466h15v15h-15z" fill="#9e007a"/><path d="M1488 466h15v15h-15z" fill="#9e0063"/><path d="M1502 466h15v15h-15z" fill="#9e0052"/><path d="M1516 466h15v15h-15z" fill="#9e0045"/><path d="M1530 466h15v15h-15z" fill="#9e003b"/><path d="M1544 466h15v15h-15z" fill="#9e0032"/><path d="M1558 466h15v15h-15z" fill="#9e002c"/><path d="M1572 466h15v15h-15z" fill="#9e0026"/><path d="M1250 480h15v15h-15z" fill="#000c9e"/><path d="M1264 480h15v15h-15z" fill="#00089e"/><path d="M1278 480h15v15h-15z" fill="#00059e"/><path d="M1292 480h15v15h-15z" fill="#00029e"/><path d="M1306 480h15v15h-15z" fill="#02089e"/><path d="M1320 480h15v15h-15z" fill="#09069e"/><path d="M1334 480h15v15h-15z" fill="#11049e"/><path d="M1348 480h15v15h-15z" fill="#1a029e"/><path d="M1362 480h15v15h-15z" fill="#25019e"/><path d="M1376 480h15v15h-15z" fill="#16009e"/><path d="M1390 480h15v15h-15z" fill="#24009e"/><path d="M1404 480h15v15h-15z" fill="#34009e"/><path d="M1418 480h15v15h-15z" fill="#49009e"/><path d="M1432 480h15v15h-15z" fill="#61009e"/><path d="M1446 480h15v15h-15z" fill="#7d009e"/><path d="M1460 480h15v15h-15z" fill="#9c009e"/><path d="M1474 480h15v15h-15z" fill="#9e0082"/><path d="M1488 480h15v15h-15z" fill="#9e006b"/><path d="M1502 480h15v15h-15z" fill="#9e005a"/><path d="M1516 480h15v15h-15z" fill="#9e004d"/><path d="M1530 480h15v15h-15z" fill="#9e0042"/><path d="M1250 494h15v15h-15z" fill="#00079e"/><path d="M1264 494h15v15h-15z" fill="#00049e"/><path d="M1278 494h15v15h-15z" fill="#00029e"/><path d="M1292 494h15v15h-15z" fill="#00009e"/><path d="M1306 494h15v15h-15z" fill="#04029e"/><path d="M1320 494h15v15h-15z" fill="#0a019e"/><path d="M1334 494h15v15h-15z" fill="#04009e"/><path d="M1348 494h15v15h-15z" fill="#09009e"/><path d="M1362 494h15v15h-15z" fill="#11009e"/><path d="M1376 494h15v15h-15z" fill="#1b009e"/><path d="M1390 494h15v15h-15z" fill="#28009e"/><path d="M1404 494h15v15h-15z" fill="#38009e"/><path d="M1418 494h15v15h-15z" fill="#4b009e"/><path d="M1432 494h15v15h-15z" fill="#61009e"/><path d="M1446 494h15v15h-15z" fill="#7a009e"/><path d="M1460 494h15v15h-15z" fill="#97009e"/><path d="M1474 494h15v15h-15z" fill="#9e0089"/><path d="M1488 494h15v15h-15z" fill="#9e0073"/><path d="M1264 508h15v15h-15z" fill="#00029e"/><path d="M1278 508h15v15h-15z" fill="#00009e"/><path d="M1292 508h15v15h-15z" fill="#00009e"/><path d="M1306 508h15v15h-15z" fill="#01009e"/><path d="M1320 508h15v15h-15z" fill="#03009e"/><path d="M1334 508h15v15h-15z" fill="#07009e"/><path d="M1348 508h15v15h-15z" fill="#0d009e"/><path d="M1362 508h15v15h-15z" fill="#15009e"/><path d="M1376 508h15v15h-15z" fill="#20009e"/><path d="M1390 508h15v15h-15z" fill="#2c009e"/><path d="M1404 508h15v15h-15z" fill="#3c009e"/><path d="M1418 508h15v15h-15z" fill="#4d009e"/><path d="M1432 508h15v15h-15z" fill="#61009e"/><path d="M1446 508h15v15h-15z" fill="#78009e"/><path d="M1278 522h15v15h-15z" fill="#00009e"/><path d="M1292 522h15v15h-15z" fill="#00009e"/><path d="M1306 522h15v15h-15z" fill="#02009e"/><path d="M1320 522h15v15h-15z" fill="#05009e"/><path d="M1334 522h15v15h-15z" fill="#0a009e"/><path d="M1348 522h15v15h-15z" fill="#11009e"/><path d="M1362 522h15v15h-15z" fill="#19009e"/><path d="M1376 522h15v15h-15z" fill="#24009e"/><path d="M1390 522h15v15h-15z" fill="#30009e"/><path d="M1292 536h15v15h-15z" fill="#02009e"/><path d="M1306 536h15v15h-15z" fill="#04009e"/><path d="M1320 536h15v15h-15z" fill="#08009e"/><path d="M1334 536h15v15h-15z" fill="#0e009e"/><path d="M1348 536h15v15h-15z" fill="#14009e"/></g><g clip-path="url(#clTri)"><path d="M1394 132h11v11h-11z" fill="#00ff00"/><path d="M1404 132h11v11h-11z" fill="#00ff00"/><path d="M1394 142h11v11h-11z" fill="#01ff02"/><path d="M1404 142h11v11h-11z" fill="#04ff01"/><path d="M1414 142h11v11h-11z" fill="#09ff00"/><path d="M1424 142h11v11h-11z" fill="#03ff00"/><path d="M1384 152h11v11h-11z" fill="#00ff01"/><path d="M1394 152h11v11h-11z" fill="#02ff04"/><path d="M1404 152h11v11h-11z" fill="#06ff03"/><path d="M1414 152h11v11h-11z" fill="#0bff01"/><path d="M1424 152h11v11h-11z" fill="#12ff00"/><path d="M1434 152h11v11h-11z" fill="#05ff00"/><path d="M1384 162h11v11h-11z" fill="#00ff01"/><path d="M1394 162h11v11h-11z" fill="#03ff07"/><path d="M1404 162h11v11h-11z" fill="#08ff05"/><path d="M1414 162h11v11h-11z" fill="#0dff04"/><path d="M1424 162h11v11h-11z" fill="#14ff02"/><path d="M1434 162h11v11h-11z" fill="#1cff01"/><path d="M1444 162h11v11h-11z" fill="#24ff00"/><path d="M1454 162h11v11h-11z" fill="#0eff00"/><path d="M1384 172h11v11h-11z" fill="#00ff0c"/><path d="M1394 172h11v11h-11z" fill="#04ff0a"/><path d="M1404 172h11v11h-11z" fill="#09ff08"/><path d="M1414 172h11v11h-11z" fill="#10ff07"/><path d="M1424 172h11v11h-11z" fill="#17ff05"/><path d="M1434 172h11v11h-11z" fill="#1fff03"/><path d="M1444 172h11v11h-11z" fill="#28ff02"/><path d="M1454 172h11v11h-11z" fill="#31ff01"/><path d="M1464 172h11v11h-11z" fill="#16ff00"/><path d="M1474 172h11v11h-11z" fill="#1eff00"/><path d="M1384 182h11v11h-11z" fill="#01ff10"/><path d="M1394 182h11v11h-11z" fill="#06ff0e"/><path d="M1404 182h11v11h-11z" fill="#0bff0c"/><path d="M1414 182h11v11h-11z" fill="#12ff0a"/><path d="M1424 182h11v11h-11z" fill="#1aff08"/><path d="M1434 182h11v11h-11z" fill="#23ff06"/><path d="M1444 182h11v11h-11z" fill="#2cff05"/><path d="M1454 182h11v11h-11z" fill="#36ff03"/><path d="M1464 182h11v11h-11z" fill="#41ff02"/><path d="M1474 182h11v11h-11z" fill="#4dff00"/><path d="M1484 182h11v11h-11z" fill="#2bff00"/><path d="M1374 192h11v11h-11z" fill="#00ff05"/><path d="M1384 192h11v11h-11z" fill="#02ff14"/><path d="M1394 192h11v11h-11z" fill="#07ff12"/><path d="M1404 192h11v11h-11z" fill="#0eff10"/><path d="M1414 192h11v11h-11z" fill="#15ff0e"/><path d="M1424 192h11v11h-11z" fill="#1eff0c"/><path d="M1434 192h11v11h-11z" fill="#27ff0a"/><path d="M1444 192h11v11h-11z" fill="#31ff08"/><path d="M1454 192h11v11h-11z" fill="#3cff06"/><path d="M1464 192h11v11h-11z" fill="#47ff05"/><path d="M1474 192h11v11h-11z" fill="#53ff03"/><path d="M1484 192h11v11h-11z" fill="#61ff01"/><path d="M1494 192h11v11h-11z" fill="#6eff00"/><path d="M1504 192h11v11h-11z" fill="#4eff00"/><path d="M1374 202h11v11h-11z" fill="#00ff06"/><path d="M1384 202h11v11h-11z" fill="#03ff19"/><path d="M1394 202h11v11h-11z" fill="#09ff17"/><path d="M1404 202h11v11h-11z" fill="#10ff15"/><path d="M1414 202h11v11h-11z" fill="#19ff13"/><path d="M1424 202h11v11h-11z" fill="#22ff10"/><path d="M1434 202h11v11h-11z" fill="#2bff0e"/><path d="M1444 202h11v11h-11z" fill="#36ff0c"/><path d="M1454 202h11v11h-11z" fill="#42ff0a"/><path d="M1464 202h11v11h-11z" fill="#4eff08"/><path d="M1474 202h11v11h-11z" fill="#5bff06"/><path d="M1484 202h11v11h-11z" fill="#69ff04"/><path d="M1494 202h11v11h-11z" fill="#78ff03"/><path d="M1504 202h11v11h-11z" fill="#88ff01"/><path d="M1514 202h11v11h-11z" fill="#6bff00"/><path d="M1524 202h11v11h-11z" fill="#82ff00"/><path d="M1374 212h11v11h-11z" fill="#00ff21"/><path d="M1384 212h11v11h-11z" fill="#05ff1f"/><path d="M1394 212h11v11h-11z" fill="#0cff1c"/><path d="M1404 212h11v11h-11z" fill="#13ff1a"/><path d="M1414 212h11v11h-11z" fill="#1cff18"/><path d="M1424 212h11v11h-11z" fill="#26ff16"/><path d="M1434 212h11v11h-11z" fill="#30ff13"/><path d="M1444 212h11v11h-11z" fill="#3cff11"/><path d="M1454 212h11v11h-11z" fill="#48ff0f"/><path d="M1464 212h11v11h-11z" fill="#55ff0c"/><path d="M1474 212h11v11h-11z" fill="#63ff0a"/><path d="M1484 212h11v11h-11z" fill="#72ff08"/><path d="M1494 212h11v11h-11z" fill="#82ff06"/><path d="M1504 212h11v11h-11z" fill="#93ff04"/><path d="M1514 212h11v11h-11z" fill="#a5ff02"/><path d="M1524 212h11v11h-11z" fill="#b8ff01"/><path d="M1534 212h11v11h-11z" fill="#afff00"/><path d="M1364 222h11v11h-11z" fill="#00ff0e"/><path d="M1374 222h11v11h-11z" fill="#01ff27"/><path d="M1384 222h11v11h-11z" fill="#07ff25"/><path d="M1394 222h11v11h-11z" fill="#0eff23"/><path d="M1404 222h11v11h-11z" fill="#17ff20"/><path d="M1414 222h11v11h-11z" fill="#20ff1e"/><path d="M1424 222h11v11h-11z" fill="#2aff1b"/><path d="M1434 222h11v11h-11z" fill="#36ff19"/><path d="M1444 222h11v11h-11z" fill="#42ff17"/><path d="M1454 222h11v11h-11z" fill="#4fff14"/><path d="M1464 222h11v11h-11z" fill="#5eff12"/><path d="M1474 222h11v11h-11z" fill="#6dff0f"/><path d="M1484 222h11v11h-11z" fill="#7dff0d"/><path d="M1494 222h11v11h-11z" fill="#8eff0a"/><path d="M1504 222h11v11h-11z" fill="#a0ff08"/><path d="M1514 222h11v11h-11z" fill="#b3ff06"/><path d="M1524 222h11v11h-11z" fill="#c8ff04"/><path d="M1534 222h11v11h-11z" fill="#ddff02"/><path d="M1544 222h11v11h-11z" fill="#f4ff00"/><path d="M1554 222h11v11h-11z" fill="#ffeb00"/><path d="M1364 232h11v11h-11z" fill="#00ff11"/><path d="M1374 232h11v11h-11z" fill="#03ff2f"/><path d="M1384 232h11v11h-11z" fill="#09ff2c"/><path d="M1394 232h11v11h-11z" fill="#11ff2a"/><path d="M1404 232h11v11h-11z" fill="#1aff27"/><path d="M1414 232h11v11h-11z" fill="#24ff25"/><path d="M1424 232h11v11h-11z" fill="#30ff22"/><path d="M1434 232h11v11h-11z" fill="#3cff20"/><path d="M1444 232h11v11h-11z" fill="#49ff1d"/><path d="M1454 232h11v11h-11z" fill="#58ff1a"/><path d="M1464 232h11v11h-11z" fill="#67ff18"/><path d="M1474 232h11v11h-11z" fill="#77ff15"/><path d="M1484 232h11v11h-11z" fill="#89ff12"/><path d="M1494 232h11v11h-11z" fill="#9bff10"/><path d="M1504 232h11v11h-11z" fill="#afff0d"/><path d="M1514 232h11v11h-11z" fill="#c4ff0a"/><path d="M1524 232h11v11h-11z" fill="#daff08"/><path d="M1534 232h11v11h-11z" fill="#f1ff05"/><path d="M1544 232h11v11h-11z" fill="#fff503"/><path d="M1554 232h11v11h-11z" fill="#ffdf01"/><path d="M1564 232h11v11h-11z" fill="#ffae00"/><path d="M1574 232h11v11h-11z" fill="#ff9800"/><path d="M1364 242h11v11h-11z" fill="#00ff14"/><path d="M1374 242h11v11h-11z" fill="#05ff37"/><path d="M1384 242h11v11h-11z" fill="#0cff34"/><path d="M1394 242h11v11h-11z" fill="#14ff32"/><path d="M1404 242h11v11h-11z" fill="#1eff2f"/><path d="M1414 242h11v11h-11z" fill="#29ff2d"/><path d="M1424 242h11v11h-11z" fill="#36ff2a"/><path d="M1434 242h11v11h-11z" fill="#43ff27"/><path d="M1444 242h11v11h-11z" fill="#51ff24"/><path d="M1454 242h11v11h-11z" fill="#61ff22"/><path d="M1464 242h11v11h-11z" fill="#71ff1f"/><path d="M1474 242h11v11h-11z" fill="#83ff1c"/><path d="M1484 242h11v11h-11z" fill="#96ff19"/><path d="M1494 242h11v11h-11z" fill="#aaff16"/><path d="M1504 242h11v11h-11z" fill="#bfff13"/><path d="M1514 242h11v11h-11z" fill="#d6ff10"/><path d="M1524 242h11v11h-11z" fill="#eeff0d"/><path d="M1534 242h11v11h-11z" fill="#fff70a"/><path d="M1544 242h11v11h-11z" fill="#ffe007"/><path d="M1554 242h11v11h-11z" fill="#ffcc04"/><path d="M1564 242h11v11h-11z" fill="#ffba02"/><path d="M1574 242h11v11h-11z" fill="#ffaa00"/><path d="M1584 242h11v11h-11z" fill="#ff7000"/><path d="M1364 252h11v11h-11z" fill="#01ff43"/><path d="M1374 252h11v11h-11z" fill="#07ff40"/><path d="M1384 252h11v11h-11z" fill="#0fff3d"/><path d="M1394 252h11v11h-11z" fill="#18ff3b"/><path d="M1404 252h11v11h-11z" fill="#23ff38"/><path d="M1414 252h11v11h-11z" fill="#2fff35"/><path d="M1424 252h11v11h-11z" fill="#3cff33"/><path d="M1434 252h11v11h-11z" fill="#4bff30"/><path d="M1444 252h11v11h-11z" fill="#5aff2d"/><path d="M1454 252h11v11h-11z" fill="#6bff2a"/><path d="M1464 252h11v11h-11z" fill="#7dff27"/><path d="M1474 252h11v11h-11z" fill="#90ff24"/><path d="M1484 252h11v11h-11z" fill="#a4ff21"/><path d="M1494 252h11v11h-11z" fill="#baff1e"/><path d="M1504 252h11v11h-11z" fill="#d1ff1b"/><path d="M1514 252h11v11h-11z" fill="#eaff17"/><path d="M1524 252h11v11h-11z" fill="#fffa14"/><path d="M1534 252h11v11h-11z" fill="#ffe10f"/><path d="M1544 252h11v11h-11z" fill="#ffcc0b"/><path d="M1554 252h11v11h-11z" fill="#ffba08"/><path d="M1564 252h11v11h-11z" fill="#ffaa05"/><path d="M1574 252h11v11h-11z" fill="#ff9b03"/><path d="M1584 252h11v11h-11z" fill="#ff8e01"/><path d="M1594 252h11v11h-11z" fill="#ff8300"/><path d="M1604 252h11v11h-11z" fill="#ff4900"/><path d="M1354 262h11v11h-11z" fill="#00ff26"/><path d="M1364 262h11v11h-11z" fill="#02ff4d"/><path d="M1374 262h11v11h-11z" fill="#09ff4a"/><path d="M1384 262h11v11h-11z" fill="#12ff48"/><path d="M1394 262h11v11h-11z" fill="#1dff45"/><path d="M1404 262h11v11h-11z" fill="#28ff42"/><path d="M1414 262h11v11h-11z" fill="#35ff40"/><path d="M1424 262h11v11h-11z" fill="#44ff3d"/><path d="M1434 262h11v11h-11z" fill="#53ff3a"/><path d="M1444 262h11v11h-11z" fill="#64ff37"/><path d="M1454 262h11v11h-11z" fill="#76ff34"/><path d="M1464 262h11v11h-11z" fill="#8aff31"/><path d="M1474 262h11v11h-11z" fill="#9fff2d"/><path d="M1484 262h11v11h-11z" fill="#b5ff2a"/><path d="M1494 262h11v11h-11z" fill="#cdff27"/><path d="M1504 262h11v11h-11z" fill="#e6ff23"/><path d="M1514 262h11v11h-11z" fill="#fffc20"/><path d="M1524 262h11v11h-11z" fill="#ffe319"/><path d="M1534 262h11v11h-11z" fill="#ffcd14"/><path d="M1544 262h11v11h-11z" fill="#ffba10"/><path d="M1554 262h11v11h-11z" fill="#ffa90c"/><path d="M1564 262h11v11h-11z" fill="#ff9a09"/><path d="M1574 262h11v11h-11z" fill="#ff8d06"/><path d="M1584 262h11v11h-11z" fill="#ff8104"/><path d="M1594 262h11v11h-11z" fill="#ff7602"/><path d="M1604 262h11v11h-11z" fill="#ff6d01"/><path d="M1614 262h11v11h-11z" fill="#ff3500"/><path d="M1624 262h11v11h-11z" fill="#ff3000"/><path d="M1354 272h11v11h-11z" fill="#00ff2e"/><path d="M1364 272h11v11h-11z" fill="#04ff59"/><path d="M1374 272h11v11h-11z" fill="#0cff56"/><path d="M1384 272h11v11h-11z" fill="#16ff54"/><path d="M1394 272h11v11h-11z" fill="#21ff51"/><path d="M1404 272h11v11h-11z" fill="#2eff4e"/><path d="M1414 272h11v11h-11z" fill="#3dff4b"/><path d="M1424 272h11v11h-11z" fill="#4cff48"/><path d="M1434 272h11v11h-11z" fill="#5dff45"/><path d="M1444 272h11v11h-11z" fill="#70ff42"/><path d="M1454 272h11v11h-11z" fill="#83ff3f"/><path d="M1464 272h11v11h-11z" fill="#99ff3c"/><path d="M1474 272h11v11h-11z" fill="#b0ff38"/><path d="M1484 272h11v11h-11z" fill="#c8ff35"/><path d="M1494 272h11v11h-11z" fill="#e2ff31"/><path d="M1504 272h11v11h-11z" fill="#feff2e"/><path d="M1514 272h11v11h-11z" fill="#ffe526"/><path d="M1524 272h11v11h-11z" fill="#ffce1f"/><path d="M1534 272h11v11h-11z" fill="#ffba19"/><path d="M1544 272h11v11h-11z" fill="#ffa814"/><path d="M1554 272h11v11h-11z" fill="#ff9910"/><path d="M1564 272h11v11h-11z" fill="#ff8b0d"/><path d="M1574 272h11v11h-11z" fill="#ff7f09"/><path d="M1584 272h11v11h-11z" fill="#ff7407"/><path d="M1594 272h11v11h-11z" fill="#ff6b05"/><path d="M1604 272h11v11h-11z" fill="#ff6203"/><path d="M1614 272h11v11h-11z" fill="#ff5a01"/><path d="M1624 272h11v11h-11z" fill="#ff5300"/><path d="M1634 272h11v11h-11z" fill="#ff2200"/><path d="M1354 282h11v11h-11z" fill="#00ff69"/><path d="M1364 282h11v11h-11z" fill="#06ff66"/><path d="M1374 282h11v11h-11z" fill="#0fff64"/><path d="M1384 282h11v11h-11z" fill="#1aff61"/><path d="M1394 282h11v11h-11z" fill="#27ff5e"/><path d="M1404 282h11v11h-11z" fill="#35ff5b"/><path d="M1414 282h11v11h-11z" fill="#45ff59"/><path d="M1424 282h11v11h-11z" fill="#56ff56"/><path d="M1434 282h11v11h-11z" fill="#68ff52"/><path d="M1444 282h11v11h-11z" fill="#7dff4f"/><path d="M1454 282h11v11h-11z" fill="#92ff4c"/><path d="M1464 282h11v11h-11z" fill="#aaff49"/><path d="M1474 282h11v11h-11z" fill="#c3ff45"/><path d="M1484 282h11v11h-11z" fill="#deff42"/><path d="M1494 282h11v11h-11z" fill="#fbff3e"/><path d="M1504 282h11v11h-11z" fill="#ffe635"/><path d="M1514 282h11v11h-11z" fill="#ffce2c"/><path d="M1524 282h11v11h-11z" fill="#ffb925"/><path d="M1534 282h11v11h-11z" fill="#ffa71f"/><path d="M1544 282h11v11h-11z" fill="#ff9719"/><path d="M1554 282h11v11h-11z" fill="#ff8915"/><path d="M1564 282h11v11h-11z" fill="#ff7d11"/><path d="M1574 282h11v11h-11z" fill="#ff720d"/><path d="M1584 282h11v11h-11z" fill="#ff680a"/><path d="M1594 282h11v11h-11z" fill="#ff5f08"/><path d="M1604 282h11v11h-11z" fill="#ff5705"/><path d="M1614 282h11v11h-11z" fill="#ff5004"/><path d="M1624 282h11v11h-11z" fill="#ff4902"/><path d="M1634 282h11v11h-11z" fill="#ff4401"/><path d="M1644 282h11v11h-11z" fill="#ff3e00"/><path d="M1654 282h11v11h-11z" fill="#ff1500"/><path d="M1354 292h11v11h-11z" fill="#01ff78"/><path d="M1364 292h11v11h-11z" fill="#09ff76"/><path d="M1374 292h11v11h-11z" fill="#13ff73"/><path d="M1384 292h11v11h-11z" fill="#1fff70"/><path d="M1394 292h11v11h-11z" fill="#2dff6e"/><path d="M1404 292h11v11h-11z" fill="#3dff6b"/><path d="M1414 292h11v11h-11z" fill="#4eff68"/><path d="M1424 292h11v11h-11z" fill="#61ff65"/><path d="M1434 292h11v11h-11z" fill="#75ff62"/><path d="M1444 292h11v11h-11z" fill="#8cff5f"/><path d="M1454 292h11v11h-11z" fill="#a4ff5c"/><path d="M1464 292h11v11h-11z" fill="#bdff58"/><path d="M1474 292h11v11h-11z" fill="#d9ff55"/><path d="M1484 292h11v11h-11z" fill="#f7ff51"/><path d="M1494 292h11v11h-11z" fill="#ffe947"/><path d="M1504 292h11v11h-11z" fill="#ffcf3c"/><path d="M1514 292h11v11h-11z" fill="#ffb932"/><path d="M1524 292h11v11h-11z" fill="#ffa62b"/><path d="M1534 292h11v11h-11z" fill="#ff9624"/><path d="M1544 292h11v11h-11z" fill="#ff871e"/><path d="M1554 292h11v11h-11z" fill="#ff7b19"/><path d="M1564 292h11v11h-11z" fill="#ff6f15"/><path d="M1574 292h11v11h-11z" fill="#ff6511"/><path d="M1584 292h11v11h-11z" fill="#ff5c0e"/><path d="M1594 292h11v11h-11z" fill="#ff540b"/><path d="M1604 292h11v11h-11z" fill="#ff4d08"/><path d="M1614 292h11v11h-11z" fill="#ff4706"/><path d="M1624 292h11v11h-11z" fill="#ff4104"/><path d="M1634 292h11v11h-11z" fill="#ff3b03"/><path d="M1644 292h11v11h-11z" fill="#ff3601"/><path d="M1654 292h11v11h-11z" fill="#ff3200"/><path d="M1664 292h11v11h-11z" fill="#ff0e00"/><path d="M1674 292h11v11h-11z" fill="#ff0d00"/><path d="M1344 302h11v11h-11z" fill="#00ff5f"/><path d="M1354 302h11v11h-11z" fill="#03ff89"/><path d="M1364 302h11v11h-11z" fill="#0cff87"/><path d="M1374 302h11v11h-11z" fill="#18ff85"/><path d="M1384 302h11v11h-11z" fill="#25ff82"/><path d="M1394 302h11v11h-11z" fill="#35ff7f"/><path d="M1404 302h11v11h-11z" fill="#46ff7d"/><path d="M1414 302h11v11h-11z" fill="#59ff7a"/><path d="M1424 302h11v11h-11z" fill="#6eff77"/><path d="M1434 302h11v11h-11z" fill="#84ff74"/><path d="M1444 302h11v11h-11z" fill="#9dff71"/><path d="M1454 302h11v11h-11z" fill="#b8ff6e"/><path d="M1464 302h11v11h-11z" fill="#d4ff6a"/><path d="M1474 302h11v11h-11z" fill="#f3ff67"/><path d="M1484 302h11v11h-11z" fill="#ffeb5b"/><path d="M1494 302h11v11h-11z" fill="#ffd04e"/><path d="M1504 302h11v11h-11z" fill="#ffb942"/><path d="M1514 302h11v11h-11z" fill="#ffa539"/><path d="M1524 302h11v11h-11z" fill="#ff9430"/><path d="M1534 302h11v11h-11z" fill="#ff8529"/><path d="M1544 302h11v11h-11z" fill="#ff7823"/><path d="M1554 302h11v11h-11z" fill="#ff6d1e"/><path d="M1564 302h11v11h-11z" fill="#ff6319"/><path d="M1574 302h11v11h-11z" fill="#ff5a15"/><path d="M1584 302h11v11h-11z" fill="#ff5111"/><path d="M1594 302h11v11h-11z" fill="#ff4a0e"/><path d="M1604 302h11v11h-11z" fill="#ff440b"/><path d="M1614 302h11v11h-11z" fill="#ff3e09"/><path d="M1624 302h11v11h-11z" fill="#ff3807"/><path d="M1634 302h11v11h-11z" fill="#ff3305"/><path d="M1644 302h11v11h-11z" fill="#ff2f03"/><path d="M1654 302h11v11h-11z" fill="#ff2b02"/><path d="M1664 302h11v11h-11z" fill="#ff2701"/><path d="M1674 302h11v11h-11z" fill="#ff2300"/><path d="M1684 302h11v11h-11z" fill="#ff0800"/><path d="M1344 312h11v11h-11z" fill="#00ff74"/><path d="M1354 312h11v11h-11z" fill="#06ff9d"/><path d="M1364 312h11v11h-11z" fill="#10ff9b"/><path d="M1374 312h11v11h-11z" fill="#1dff99"/><path d="M1384 312h11v11h-11z" fill="#2cff97"/><path d="M1394 312h11v11h-11z" fill="#3dff94"/><path d="M1404 312h11v11h-11z" fill="#50ff92"/><path d="M1414 312h11v11h-11z" fill="#65ff8f"/><path d="M1424 312h11v11h-11z" fill="#7cff8c"/><path d="M1434 312h11v11h-11z" fill="#96ff89"/><path d="M1444 312h11v11h-11z" fill="#b1ff86"/><path d="M1454 312h11v11h-11z" fill="#cfff83"/><path d="M1464 312h11v11h-11z" fill="#efff80"/><path d="M1474 312h11v11h-11z" fill="#ffed74"/><path d="M1484 312h11v11h-11z" fill="#ffd063"/><path d="M1494 312h11v11h-11z" fill="#ffb855"/><path d="M1504 312h11v11h-11z" fill="#ffa449"/><path d="M1514 312h11v11h-11z" fill="#ff923f"/><path d="M1524 312h11v11h-11z" fill="#ff8336"/><path d="M1534 312h11v11h-11z" fill="#ff762f"/><path d="M1544 312h11v11h-11z" fill="#ff6a28"/><path d="M1554 312h11v11h-11z" fill="#ff6022"/><path d="M1564 312h11v11h-11z" fill="#ff561d"/><path d="M1574 312h11v11h-11z" fill="#ff4e19"/><path d="M1584 312h11v11h-11z" fill="#ff4715"/><path d="M1594 312h11v11h-11z" fill="#ff4012"/><path d="M1604 312h11v11h-11z" fill="#ff3a0f"/><path d="M1614 312h11v11h-11z" fill="#ff350c"/><path d="M1624 312h11v11h-11z" fill="#ff300a"/><path d="M1634 312h11v11h-11z" fill="#ff2c08"/><path d="M1644 312h11v11h-11z" fill="#ff2806"/><path d="M1654 312h11v11h-11z" fill="#ff2404"/><path d="M1664 312h11v11h-11z" fill="#ff2103"/><path d="M1674 312h11v11h-11z" fill="#ff1e02"/><path d="M1684 312h11v11h-11z" fill="#ff1b01"/><path d="M1694 312h11v11h-11z" fill="#ff1800"/><path d="M1704 312h11v11h-11z" fill="#ff0400"/><path d="M1344 322h11v11h-11z" fill="#00ffb6"/><path d="M1354 322h11v11h-11z" fill="#09ffb4"/><path d="M1364 322h11v11h-11z" fill="#15ffb2"/><path d="M1374 322h11v11h-11z" fill="#23ffb0"/><path d="M1384 322h11v11h-11z" fill="#34ffae"/><path d="M1394 322h11v11h-11z" fill="#47ffac"/><path d="M1404 322h11v11h-11z" fill="#5dffaa"/><path d="M1414 322h11v11h-11z" fill="#74ffa8"/><path d="M1424 322h11v11h-11z" fill="#8effa5"/><path d="M1434 322h11v11h-11z" fill="#aaffa2"/><path d="M1444 322h11v11h-11z" fill="#c9ffa0"/><path d="M1454 322h11v11h-11z" fill="#eaff9d"/><path d="M1464 322h11v11h-11z" fill="#fff091"/><path d="M1474 322h11v11h-11z" fill="#ffd17c"/><path d="M1484 322h11v11h-11z" fill="#ffb86b"/><path d="M1494 322h11v11h-11z" fill="#ffa25c"/><path d="M1504 322h11v11h-11z" fill="#ff9050"/><path d="M1514 322h11v11h-11z" fill="#ff8045"/><path d="M1524 322h11v11h-11z" fill="#ff733c"/><path d="M1534 322h11v11h-11z" fill="#ff6734"/><path d="M1544 322h11v11h-11z" fill="#ff5c2d"/><path d="M1554 322h11v11h-11z" fill="#ff5327"/><path d="M1564 322h11v11h-11z" fill="#ff4b22"/><path d="M1574 322h11v11h-11z" fill="#ff441d"/><path d="M1584 322h11v11h-11z" fill="#ff3d19"/><path d="M1594 322h11v11h-11z" fill="#ff3715"/><path d="M1604 322h11v11h-11z" fill="#ff3212"/><path d="M1614 322h11v11h-11z" fill="#ff2d0f"/><path d="M1624 322h11v11h-11z" fill="#ff290c"/><path d="M1634 322h11v11h-11z" fill="#ff250a"/><path d="M1644 322h11v11h-11z" fill="#ff2108"/><path d="M1654 322h11v11h-11z" fill="#ff1e06"/><path d="M1664 322h11v11h-11z" fill="#ff1b05"/><path d="M1674 322h11v11h-11z" fill="#ff1803"/><path d="M1684 322h11v11h-11z" fill="#ff1502"/><path d="M1694 322h11v11h-11z" fill="#ff1301"/><path d="M1704 322h11v11h-11z" fill="#ff1100"/><path d="M1714 322h11v11h-11z" fill="#ff0200"/><path d="M1724 322h11v11h-11z" fill="#ff0200"/><path d="M1334 332h11v11h-11z" fill="#00ffba"/><path d="M1344 332h11v11h-11z" fill="#02ffd1"/><path d="M1354 332h11v11h-11z" fill="#0dffcf"/><path d="M1364 332h11v11h-11z" fill="#1affce"/><path d="M1374 332h11v11h-11z" fill="#2bffcc"/><path d="M1384 332h11v11h-11z" fill="#3effca"/><path d="M1394 332h11v11h-11z" fill="#53ffc9"/><path d="M1404 332h11v11h-11z" fill="#6bffc7"/><path d="M1414 332h11v11h-11z" fill="#85ffc5"/><path d="M1424 332h11v11h-11z" fill="#a2ffc3"/><path d="M1434 332h11v11h-11z" fill="#c2ffc1"/><path d="M1444 332h11v11h-11z" fill="#e5ffbf"/><path d="M1454 332h11v11h-11z" fill="#fff3b4"/><path d="M1464 332h11v11h-11z" fill="#ffd299"/><path d="M1474 332h11v11h-11z" fill="#ffb784"/><path d="M1484 332h11v11h-11z" fill="#ffa172"/><path d="M1494 332h11v11h-11z" fill="#ff8e63"/><path d="M1504 332h11v11h-11z" fill="#ff7e56"/><path d="M1514 332h11v11h-11z" fill="#ff704b"/><path d="M1524 332h11v11h-11z" fill="#ff6442"/><path d="M1534 332h11v11h-11z" fill="#ff5939"/><path d="M1544 332h11v11h-11z" fill="#ff5032"/><path d="M1554 332h11v11h-11z" fill="#ff472c"/><path d="M1564 332h11v11h-11z" fill="#ff4026"/><path d="M1574 332h11v11h-11z" fill="#ff3a21"/><path d="M1584 332h11v11h-11z" fill="#ff341d"/><path d="M1594 332h11v11h-11z" fill="#ff2f19"/><path d="M1604 332h11v11h-11z" fill="#ff2a15"/><path d="M1614 332h11v11h-11z" fill="#ff2512"/><path d="M1624 332h11v11h-11z" fill="#ff220f"/><path d="M1634 332h11v11h-11z" fill="#ff1e0d"/><path d="M1644 332h11v11h-11z" fill="#ff1b0b"/><path d="M1654 332h11v11h-11z" fill="#ff1809"/><path d="M1664 332h11v11h-11z" fill="#ff1507"/><path d="M1674 332h11v11h-11z" fill="#ff1305"/><path d="M1684 332h11v11h-11z" fill="#ff1104"/><path d="M1694 332h11v11h-11z" fill="#ff0f03"/><path d="M1704 332h11v11h-11z" fill="#ff0d02"/><path d="M1714 332h11v11h-11z" fill="#ff0b01"/><path d="M1724 332h11v11h-11z" fill="#ff0900"/><path d="M1734 332h11v11h-11z" fill="#ff0100"/><path d="M1334 342h11v11h-11z" fill="#00ffe8"/><path d="M1344 342h11v11h-11z" fill="#05fff0"/><path d="M1354 342h11v11h-11z" fill="#11ffef"/><path d="M1364 342h11v11h-11z" fill="#21ffee"/><path d="M1374 342h11v11h-11z" fill="#34ffed"/><path d="M1384 342h11v11h-11z" fill="#49ffec"/><path d="M1394 342h11v11h-11z" fill="#61ffea"/><path d="M1404 342h11v11h-11z" fill="#7cffe9"/><path d="M1414 342h11v11h-11z" fill="#9affe8"/><path d="M1424 342h11v11h-11z" fill="#bbffe7"/><path d="M1434 342h11v11h-11z" fill="#dfffe5"/><path d="M1444 342h11v11h-11z" fill="#fff7dd"/><path d="M1454 342h11v11h-11z" fill="#ffd4bc"/><path d="M1464 342h11v11h-11z" fill="#ffb7a1"/><path d="M1474 342h11v11h-11z" fill="#ff9f8b"/><path d="M1484 342h11v11h-11z" fill="#ff8c79"/><path d="M1494 342h11v11h-11z" fill="#ff7b6a"/><path d="M1504 342h11v11h-11z" fill="#ff6c5c"/><path d="M1514 342h11v11h-11z" fill="#ff6051"/><path d="M1524 342h11v11h-11z" fill="#ff5547"/><path d="M1534 342h11v11h-11z" fill="#ff4c3f"/><path d="M1544 342h11v11h-11z" fill="#ff4437"/><path d="M1554 342h11v11h-11z" fill="#ff3c30"/><path d="M1564 342h11v11h-11z" fill="#ff362b"/><path d="M1574 342h11v11h-11z" fill="#ff3025"/><path d="M1584 342h11v11h-11z" fill="#ff2b21"/><path d="M1594 342h11v11h-11z" fill="#ff261d"/><path d="M1604 342h11v11h-11z" fill="#ff2219"/><path d="M1614 342h11v11h-11z" fill="#ff1e16"/><path d="M1624 342h11v11h-11z" fill="#ff1b13"/><path d="M1634 342h11v11h-11z" fill="#ff1810"/><path d="M1644 342h11v11h-11z" fill="#ff150d"/><path d="M1654 342h11v11h-11z" fill="#ff120b"/><path d="M1664 342h11v11h-11z" fill="#ff1009"/><path d="M1674 342h11v11h-11z" fill="#ff0e07"/><path d="M1684 342h11v11h-11z" fill="#ff0c06"/><path d="M1694 342h11v11h-11z" fill="#ff0a04"/><path d="M1704 342h11v11h-11z" fill="#ff0903"/><path d="M1714 342h11v11h-11z" fill="#ff0702"/><path d="M1724 342h11v11h-11z" fill="#ff0601"/><path d="M1734 342h11v11h-11z" fill="#ff0500"/><path d="M1744 342h11v11h-11z" fill="#ff0000"/><path d="M1754 342h11v11h-11z" fill="#ff0000"/><path d="M1334 352h11v11h-11z" fill="#00dfff"/><path d="M1344 352h11v11h-11z" fill="#08ecff"/><path d="M1354 352h11v11h-11z" fill="#15ecff"/><path d="M1364 352h11v11h-11z" fill="#26ecff"/><path d="M1374 352h11v11h-11z" fill="#3aecff"/><path d="M1384 352h11v11h-11z" fill="#50ecff"/><path d="M1394 352h11v11h-11z" fill="#6aecff"/><path d="M1404 352h11v11h-11z" fill="#86ecff"/><path d="M1414 352h11v11h-11z" fill="#a6edff"/><path d="M1424 352h11v11h-11z" fill="#c9edff"/><path d="M1434 352h11v11h-11z" fill="#f1edff"/><path d="M1444 352h11v11h-11z" fill="#ffd5e5"/><path d="M1454 352h11v11h-11z" fill="#ffb6c4"/><path d="M1464 352h11v11h-11z" fill="#ff9ea9"/><path d="M1474 352h11v11h-11z" fill="#ff8993"/><path d="M1484 352h11v11h-11z" fill="#ff7880"/><path d="M1494 352h11v11h-11z" fill="#ff6970"/><path d="M1504 352h11v11h-11z" fill="#ff5c63"/><path d="M1514 352h11v11h-11z" fill="#ff5157"/><path d="M1524 352h11v11h-11z" fill="#ff484d"/><path d="M1534 352h11v11h-11z" fill="#ff4044"/><path d="M1544 352h11v11h-11z" fill="#ff393c"/><path d="M1554 352h11v11h-11z" fill="#ff3235"/><path d="M1564 352h11v11h-11z" fill="#ff2c2f"/><path d="M1574 352h11v11h-11z" fill="#ff272a"/><path d="M1584 352h11v11h-11z" fill="#ff2325"/><path d="M1594 352h11v11h-11z" fill="#ff1f20"/><path d="M1604 352h11v11h-11z" fill="#ff1b1c"/><path d="M1614 352h11v11h-11z" fill="#ff1819"/><path d="M1624 352h11v11h-11z" fill="#ff1516"/><path d="M1634 352h11v11h-11z" fill="#ff1213"/><path d="M1644 352h11v11h-11z" fill="#ff1010"/><path d="M1654 352h11v11h-11z" fill="#ff0d0e"/><path d="M1664 352h11v11h-11z" fill="#ff0b0c"/><path d="M1674 352h11v11h-11z" fill="#ff0a0a"/><path d="M1684 352h11v11h-11z" fill="#ff0808"/><path d="M1694 352h11v11h-11z" fill="#ff0706"/><path d="M1704 352h11v11h-11z" fill="#ff0505"/><path d="M1714 352h11v11h-11z" fill="#ff0404"/><path d="M1724 352h11v11h-11z" fill="#ff0303"/><path d="M1734 352h11v11h-11z" fill="#ff0202"/><path d="M1744 352h11v11h-11z" fill="#ff0101"/><path d="M1754 352h11v11h-11z" fill="#ff0100"/><path d="M1764 352h11v11h-11z" fill="#ff0000"/><path d="M1334 362h11v11h-11z" fill="#01ccff"/><path d="M1344 362h11v11h-11z" fill="#0bccff"/><path d="M1354 362h11v11h-11z" fill="#18cbff"/><path d="M1364 362h11v11h-11z" fill="#29caff"/><path d="M1374 362h11v11h-11z" fill="#3ccaff"/><path d="M1384 362h11v11h-11z" fill="#51c9ff"/><path d="M1394 362h11v11h-11z" fill="#6ac8ff"/><path d="M1404 362h11v11h-11z" fill="#85c7ff"/><path d="M1414 362h11v11h-11z" fill="#a3c6ff"/><path d="M1424 362h11v11h-11z" fill="#c5c6ff"/><path d="M1434 362h11v11h-11z" fill="#eac5ff"/><path d="M1444 362h11v11h-11z" fill="#ffb6ed"/><path d="M1454 362h11v11h-11z" fill="#ff9ccc"/><path d="M1464 362h11v11h-11z" fill="#ff86b1"/><path d="M1474 362h11v11h-11z" fill="#ff749a"/><path d="M1484 362h11v11h-11z" fill="#ff6587"/><path d="M1494 362h11v11h-11z" fill="#ff5877"/><path d="M1504 362h11v11h-11z" fill="#ff4d69"/><path d="M1514 362h11v11h-11z" fill="#ff445d"/><path d="M1524 362h11v11h-11z" fill="#ff3c52"/><path d="M1534 362h11v11h-11z" fill="#ff3449"/><path d="M1544 362h11v11h-11z" fill="#ff2e41"/><path d="M1554 362h11v11h-11z" fill="#ff283a"/><path d="M1564 362h11v11h-11z" fill="#ff2433"/><path d="M1574 362h11v11h-11z" fill="#ff1f2e"/><path d="M1584 362h11v11h-11z" fill="#ff1b29"/><path d="M1594 362h11v11h-11z" fill="#ff1824"/><path d="M1604 362h11v11h-11z" fill="#ff1520"/><path d="M1614 362h11v11h-11z" fill="#ff121c"/><path d="M1624 362h11v11h-11z" fill="#ff0f19"/><path d="M1634 362h11v11h-11z" fill="#ff0d16"/><path d="M1644 362h11v11h-11z" fill="#ff0b13"/><path d="M1654 362h11v11h-11z" fill="#ff0910"/><path d="M1664 362h11v11h-11z" fill="#ff070e"/><path d="M1674 362h11v11h-11z" fill="#ff060c"/><path d="M1684 362h11v11h-11z" fill="#ff040a"/><path d="M1694 362h11v11h-11z" fill="#ff0308"/><path d="M1704 362h11v11h-11z" fill="#ff0207"/><path d="M1714 362h11v11h-11z" fill="#ff0105"/><path d="M1724 362h11v11h-11z" fill="#ff0104"/><path d="M1734 362h11v11h-11z" fill="#ff0003"/><path d="M1744 362h11v11h-11z" fill="#ff0000"/><path d="M1754 362h11v11h-11z" fill="#ff0000"/><path d="M1324 372h11v11h-11z" fill="#008dff"/><path d="M1334 372h11v11h-11z" fill="#03b0ff"/><path d="M1344 372h11v11h-11z" fill="#0dafff"/><path d="M1354 372h11v11h-11z" fill="#1baeff"/><path d="M1364 372h11v11h-11z" fill="#2bacff"/><path d="M1374 372h11v11h-11z" fill="#3dabff"/><path d="M1384 372h11v11h-11z" fill="#52aaff"/><path d="M1394 372h11v11h-11z" fill="#6aa8ff"/><path d="M1404 372h11v11h-11z" fill="#84a7ff"/><path d="M1414 372h11v11h-11z" fill="#a1a5ff"/><path d="M1424 372h11v11h-11z" fill="#c0a3ff"/><path d="M1434 372h11v11h-11z" fill="#e3a2ff"/><path d="M1444 372h11v11h-11z" fill="#ff99f5"/><path d="M1454 372h11v11h-11z" fill="#ff83d4"/><path d="M1464 372h11v11h-11z" fill="#ff70b8"/><path d="M1474 372h11v11h-11z" fill="#ff61a1"/><path d="M1484 372h11v11h-11z" fill="#ff548e"/><path d="M1494 372h11v11h-11z" fill="#ff497d"/><path d="M1504 372h11v11h-11z" fill="#ff3f6f"/><path d="M1514 372h11v11h-11z" fill="#ff3763"/><path d="M1524 372h11v11h-11z" fill="#ff3058"/><path d="M1534 372h11v11h-11z" fill="#ff2a4e"/><path d="M1544 372h11v11h-11z" fill="#ff2446"/><path d="M1554 372h11v11h-11z" fill="#ff203e"/><path d="M1564 372h11v11h-11z" fill="#ff1b38"/><path d="M1574 372h11v11h-11z" fill="#ff1832"/><path d="M1584 372h11v11h-11z" fill="#ff142d"/><path d="M1594 372h11v11h-11z" fill="#ff1128"/><path d="M1604 372h11v11h-11z" fill="#ff0f23"/><path d="M1614 372h11v11h-11z" fill="#ff0c20"/><path d="M1624 372h11v11h-11z" fill="#ff0a1c"/><path d="M1634 372h11v11h-11z" fill="#ff0819"/><path d="M1644 372h11v11h-11z" fill="#ff0616"/><path d="M1654 372h11v11h-11z" fill="#ff0513"/><path d="M1664 372h11v11h-11z" fill="#ff0411"/><path d="M1674 372h11v11h-11z" fill="#ff020e"/><path d="M1684 372h11v11h-11z" fill="#ff010c"/><path d="M1694 372h11v11h-11z" fill="#ff010b"/><path d="M1704 372h11v11h-11z" fill="#ff0009"/><path d="M1714 372h11v11h-11z" fill="#ff0001"/><path d="M1724 372h11v11h-11z" fill="#ff0001"/><path d="M1324 382h11v11h-11z" fill="#006dff"/><path d="M1334 382h11v11h-11z" fill="#0597ff"/><path d="M1344 382h11v11h-11z" fill="#1095ff"/><path d="M1354 382h11v11h-11z" fill="#1d94ff"/><path d="M1364 382h11v11h-11z" fill="#2d92ff"/><path d="M1374 382h11v11h-11z" fill="#3f90ff"/><path d="M1384 382h11v11h-11z" fill="#538eff"/><path d="M1394 382h11v11h-11z" fill="#6a8cff"/><path d="M1404 382h11v11h-11z" fill="#838aff"/><path d="M1414 382h11v11h-11z" fill="#9e88ff"/><path d="M1424 382h11v11h-11z" fill="#bd85ff"/><path d="M1434 382h11v11h-11z" fill="#de83ff"/><path d="M1444 382h11v11h-11z" fill="#ff7ffc"/><path d="M1454 382h11v11h-11z" fill="#ff6cdb"/><path d="M1464 382h11v11h-11z" fill="#ff5cbf"/><path d="M1474 382h11v11h-11z" fill="#ff4fa8"/><path d="M1484 382h11v11h-11z" fill="#ff4494"/><path d="M1494 382h11v11h-11z" fill="#ff3b83"/><path d="M1504 382h11v11h-11z" fill="#ff3275"/><path d="M1514 382h11v11h-11z" fill="#ff2b68"/><path d="M1524 382h11v11h-11z" fill="#ff255d"/><path d="M1534 382h11v11h-11z" fill="#ff2053"/><path d="M1544 382h11v11h-11z" fill="#ff1c4b"/><path d="M1554 382h11v11h-11z" fill="#ff1743"/><path d="M1564 382h11v11h-11z" fill="#ff143c"/><path d="M1574 382h11v11h-11z" fill="#ff1136"/><path d="M1584 382h11v11h-11z" fill="#ff0e31"/><path d="M1594 382h11v11h-11z" fill="#ff0b2c"/><path d="M1604 382h11v11h-11z" fill="#ff0927"/><path d="M1614 382h11v11h-11z" fill="#ff0723"/><path d="M1624 382h11v11h-11z" fill="#ff061f"/><path d="M1634 382h11v11h-11z" fill="#ff041c"/><path d="M1644 382h11v11h-11z" fill="#ff0319"/><path d="M1654 382h11v11h-11z" fill="#ff0216"/><path d="M1664 382h11v11h-11z" fill="#ff0113"/><path d="M1674 382h11v11h-11z" fill="#ff0011"/><path d="M1684 382h11v11h-11z" fill="#ff0002"/><path d="M1694 382h11v11h-11z" fill="#ff0002"/><path d="M1324 392h11v11h-11z" fill="#0052ff"/><path d="M1334 392h11v11h-11z" fill="#0780ff"/><path d="M1344 392h11v11h-11z" fill="#127eff"/><path d="M1354 392h11v11h-11z" fill="#1f7cff"/><path d="M1364 392h11v11h-11z" fill="#2f7aff"/><path d="M1374 392h11v11h-11z" fill="#4078ff"/><path d="M1384 392h11v11h-11z" fill="#5476ff"/><path d="M1394 392h11v11h-11z" fill="#6a73ff"/><path d="M1404 392h11v11h-11z" fill="#8271ff"/><path d="M1414 392h11v11h-11z" fill="#9c6eff"/><path d="M1424 392h11v11h-11z" fill="#b96bff"/><path d="M1434 392h11v11h-11z" fill="#d868ff"/><path d="M1444 392h11v11h-11z" fill="#fb65ff"/><path d="M1454 392h11v11h-11z" fill="#ff57e2"/><path d="M1464 392h11v11h-11z" fill="#ff4ac6"/><path d="M1474 392h11v11h-11z" fill="#ff3faf"/><path d="M1484 392h11v11h-11z" fill="#ff359b"/><path d="M1494 392h11v11h-11z" fill="#ff2d89"/><path d="M1504 392h11v11h-11z" fill="#ff277b"/><path d="M1514 392h11v11h-11z" fill="#ff216e"/><path d="M1524 392h11v11h-11z" fill="#ff1c62"/><path d="M1534 392h11v11h-11z" fill="#ff1758"/><path d="M1544 392h11v11h-11z" fill="#ff1350"/><path d="M1554 392h11v11h-11z" fill="#ff1048"/><path d="M1564 392h11v11h-11z" fill="#ff0d41"/><path d="M1574 392h11v11h-11z" fill="#ff0b3a"/><path d="M1584 392h11v11h-11z" fill="#ff0834"/><path d="M1594 392h11v11h-11z" fill="#ff062f"/><path d="M1604 392h11v11h-11z" fill="#ff052b"/><path d="M1614 392h11v11h-11z" fill="#ff0326"/><path d="M1624 392h11v11h-11z" fill="#ff0222"/><path d="M1634 392h11v11h-11z" fill="#ff011f"/><path d="M1644 392h11v11h-11z" fill="#ff001c"/><path d="M1654 392h11v11h-11z" fill="#ff0005"/><path d="M1664 392h11v11h-11z" fill="#ff0005"/><path d="M1324 402h11v11h-11z" fill="#016eff"/><path d="M1334 402h11v11h-11z" fill="#096cff"/><path d="M1344 402h11v11h-11z" fill="#146aff"/><path d="M1354 402h11v11h-11z" fill="#2167ff"/><path d="M1364 402h11v11h-11z" fill="#3165ff"/><path d="M1374 402h11v11h-11z" fill="#4262ff"/><path d="M1384 402h11v11h-11z" fill="#5560ff"/><path d="M1394 402h11v11h-11z" fill="#6a5dff"/><path d="M1404 402h11v11h-11z" fill="#815aff"/><path d="M1414 402h11v11h-11z" fill="#9a57ff"/><path d="M1424 402h11v11h-11z" fill="#b654ff"/><path d="M1434 402h11v11h-11z" fill="#d451ff"/><path d="M1444 402h11v11h-11z" fill="#f44eff"/><path d="M1454 402h11v11h-11z" fill="#ff44e9"/><path d="M1464 402h11v11h-11z" fill="#ff39cd"/><path d="M1474 402h11v11h-11z" fill="#ff30b5"/><path d="M1484 402h11v11h-11z" fill="#ff28a1"/><path d="M1494 402h11v11h-11z" fill="#ff228f"/><path d="M1504 402h11v11h-11z" fill="#ff1c80"/><path d="M1514 402h11v11h-11z" fill="#ff1773"/><path d="M1524 402h11v11h-11z" fill="#ff1368"/><path d="M1534 402h11v11h-11z" fill="#ff0f5d"/><path d="M1544 402h11v11h-11z" fill="#ff0c54"/><path d="M1554 402h11v11h-11z" fill="#ff0a4c"/><path d="M1564 402h11v11h-11z" fill="#ff0745"/><path d="M1574 402h11v11h-11z" fill="#ff053e"/><path d="M1584 402h11v11h-11z" fill="#ff0438"/><path d="M1594 402h11v11h-11z" fill="#ff0233"/><path d="M1604 402h11v11h-11z" fill="#ff012e"/><path d="M1614 402h11v11h-11z" fill="#ff002a"/><path d="M1624 402h11v11h-11z" fill="#ff000b"/><path d="M1634 402h11v11h-11z" fill="#ff000a"/><path d="M1314 412h11v11h-11z" fill="#0032ff"/><path d="M1324 412h11v11h-11z" fill="#035cff"/><path d="M1334 412h11v11h-11z" fill="#0b59ff"/><path d="M1344 412h11v11h-11z" fill="#1657ff"/><path d="M1354 412h11v11h-11z" fill="#2454ff"/><path d="M1364 412h11v11h-11z" fill="#3252ff"/><path d="M1374 412h11v11h-11z" fill="#434fff"/><path d="M1384 412h11v11h-11z" fill="#564cff"/><path d="M1394 412h11v11h-11z" fill="#6a4aff"/><path d="M1404 412h11v11h-11z" fill="#8047ff"/><path d="M1414 412h11v11h-11z" fill="#9844ff"/><path d="M1424 412h11v11h-11z" fill="#b340ff"/><path d="M1434 412h11v11h-11z" fill="#cf3dff"/><path d="M1444 412h11v11h-11z" fill="#ee3aff"/><path d="M1454 412h11v11h-11z" fill="#ff33ef"/><path d="M1464 412h11v11h-11z" fill="#ff2ad3"/><path d="M1474 412h11v11h-11z" fill="#ff22bb"/><path d="M1484 412h11v11h-11z" fill="#ff1ca7"/><path d="M1494 412h11v11h-11z" fill="#ff1795"/><path d="M1504 412h11v11h-11z" fill="#ff1286"/><path d="M1514 412h11v11h-11z" fill="#ff0f79"/><path d="M1524 412h11v11h-11z" fill="#ff0b6d"/><path d="M1534 412h11v11h-11z" fill="#ff0862"/><path d="M1544 412h11v11h-11z" fill="#ff0659"/><path d="M1554 412h11v11h-11z" fill="#ff0451"/><path d="M1564 412h11v11h-11z" fill="#ff0249"/><path d="M1574 412h11v11h-11z" fill="#ff0142"/><path d="M1584 412h11v11h-11z" fill="#ff003c"/><path d="M1594 412h11v11h-11z" fill="#ff0014"/><path d="M1604 412h11v11h-11z" fill="#ff0012"/><path d="M1314 422h11v11h-11z" fill="#0023ff"/><path d="M1324 422h11v11h-11z" fill="#054bff"/><path d="M1334 422h11v11h-11z" fill="#0e49ff"/><path d="M1344 422h11v11h-11z" fill="#1946ff"/><path d="M1354 422h11v11h-11z" fill="#2644ff"/><path d="M1364 422h11v11h-11z" fill="#3441ff"/><path d="M1374 422h11v11h-11z" fill="#443eff"/><path d="M1384 422h11v11h-11z" fill="#563bff"/><path d="M1394 422h11v11h-11z" fill="#6a39ff"/><path d="M1404 422h11v11h-11z" fill="#7f36ff"/><path d="M1414 422h11v11h-11z" fill="#9732ff"/><path d="M1424 422h11v11h-11z" fill="#b02fff"/><path d="M1434 422h11v11h-11z" fill="#cb2cff"/><path d="M1444 422h11v11h-11z" fill="#e929ff"/><path d="M1454 422h11v11h-11z" fill="#ff24f6"/><path d="M1464 422h11v11h-11z" fill="#ff1dd9"/><path d="M1474 422h11v11h-11z" fill="#ff17c1"/><path d="M1484 422h11v11h-11z" fill="#ff12ad"/><path d="M1494 422h11v11h-11z" fill="#ff0e9b"/><path d="M1504 422h11v11h-11z" fill="#ff0a8b"/><path d="M1514 422h11v11h-11z" fill="#ff077e"/><path d="M1524 422h11v11h-11z" fill="#ff0572"/><path d="M1534 422h11v11h-11z" fill="#ff0367"/><path d="M1544 422h11v11h-11z" fill="#ff015e"/><path d="M1554 422h11v11h-11z" fill="#ff0055"/><path d="M1564 422h11v11h-11z" fill="#ff0023"/><path d="M1574 422h11v11h-11z" fill="#ff001f"/><path d="M1314 432h11v11h-11z" fill="#003fff"/><path d="M1324 432h11v11h-11z" fill="#063dff"/><path d="M1334 432h11v11h-11z" fill="#103aff"/><path d="M1344 432h11v11h-11z" fill="#1b38ff"/><path d="M1354 432h11v11h-11z" fill="#2735ff"/><path d="M1364 432h11v11h-11z" fill="#3632ff"/><path d="M1374 432h11v11h-11z" fill="#462fff"/><path d="M1384 432h11v11h-11z" fill="#572dff"/><path d="M1394 432h11v11h-11z" fill="#6a2aff"/><path d="M1404 432h11v11h-11z" fill="#7f27ff"/><path d="M1414 432h11v11h-11z" fill="#9524ff"/><path d="M1424 432h11v11h-11z" fill="#ad20ff"/><path d="M1434 432h11v11h-11z" fill="#c81dff"/><path d="M1444 432h11v11h-11z" fill="#e41aff"/><path d="M1454 432h11v11h-11z" fill="#ff16fc"/><path d="M1464 432h11v11h-11z" fill="#ff11e0"/><path d="M1474 432h11v11h-11z" fill="#ff0cc7"/><path d="M1484 432h11v11h-11z" fill="#ff09b3"/><path d="M1494 432h11v11h-11z" fill="#ff06a1"/><path d="M1504 432h11v11h-11z" fill="#ff0391"/><path d="M1514 432h11v11h-11z" fill="#ff0283"/><path d="M1524 432h11v11h-11z" fill="#ff0077"/><path d="M1534 432h11v11h-11z" fill="#ff003d"/><path d="M1544 432h11v11h-11z" fill="#ff0035"/><path d="M1314 442h11v11h-11z" fill="#0132ff"/><path d="M1324 442h11v11h-11z" fill="#0830ff"/><path d="M1334 442h11v11h-11z" fill="#122dff"/><path d="M1344 442h11v11h-11z" fill="#1d2aff"/><path d="M1354 442h11v11h-11z" fill="#2928ff"/><path d="M1364 442h11v11h-11z" fill="#3725ff"/><path d="M1374 442h11v11h-11z" fill="#4722ff"/><path d="M1384 442h11v11h-11z" fill="#581fff"/><path d="M1394 442h11v11h-11z" fill="#6a1dff"/><path d="M1404 442h11v11h-11z" fill="#7e1aff"/><path d="M1414 442h11v11h-11z" fill="#9417ff"/><path d="M1424 442h11v11h-11z" fill="#ab14ff"/><path d="M1434 442h11v11h-11z" fill="#c411ff"/><path d="M1444 442h11v11h-11z" fill="#df0eff"/><path d="M1454 442h11v11h-11z" fill="#fc0bff"/><path d="M1464 442h11v11h-11z" fill="#ff07e5"/><path d="M1474 442h11v11h-11z" fill="#ff04cd"/><path d="M1484 442h11v11h-11z" fill="#ff02b8"/><path d="M1494 442h11v11h-11z" fill="#ff00a6"/><path d="M1504 442h11v11h-11z" fill="#ff0069"/><path d="M1514 442h11v11h-11z" fill="#ff005b"/><path d="M1304 452h11v11h-11z" fill="#000dff"/><path d="M1314 452h11v11h-11z" fill="#0326ff"/><path d="M1324 452h11v11h-11z" fill="#0a24ff"/><path d="M1334 452h11v11h-11z" fill="#1421ff"/><path d="M1344 452h11v11h-11z" fill="#1e1fff"/><path d="M1354 452h11v11h-11z" fill="#2b1cff"/><path d="M1364 452h11v11h-11z" fill="#391aff"/><path d="M1374 452h11v11h-11z" fill="#4817ff"/><path d="M1384 452h11v11h-11z" fill="#5814ff"/><path d="M1394 452h11v11h-11z" fill="#6a12ff"/><path d="M1404 452h11v11h-11z" fill="#7d0fff"/><path d="M1414 452h11v11h-11z" fill="#920cff"/><path d="M1424 452h11v11h-11z" fill="#a90aff"/><path d="M1434 452h11v11h-11z" fill="#c107ff"/><path d="M1444 452h11v11h-11z" fill="#db05ff"/><path d="M1454 452h11v11h-11z" fill="#f702ff"/><path d="M1464 452h11v11h-11z" fill="#ff00eb"/><path d="M1474 452h11v11h-11z" fill="#ff00ba"/><path d="M1484 452h11v11h-11z" fill="#ff009d"/><path d="M1304 462h11v11h-11z" fill="#0007ff"/><path d="M1314 462h11v11h-11z" fill="#041cff"/><path d="M1324 462h11v11h-11z" fill="#0c1aff"/><path d="M1334 462h11v11h-11z" fill="#1517ff"/><path d="M1344 462h11v11h-11z" fill="#2015ff"/><path d="M1354 462h11v11h-11z" fill="#2c12ff"/><path d="M1364 462h11v11h-11z" fill="#3a10ff"/><path d="M1374 462h11v11h-11z" fill="#490dff"/><path d="M1384 462h11v11h-11z" fill="#590bff"/><path d="M1394 462h11v11h-11z" fill="#6a09ff"/><path d="M1404 462h11v11h-11z" fill="#7d06ff"/><path d="M1414 462h11v11h-11z" fill="#9104ff"/><path d="M1424 462h11v11h-11z" fill="#a702ff"/><path d="M1434 462h11v11h-11z" fill="#be00ff"/><path d="M1444 462h11v11h-11z" fill="#c000ff"/><path d="M1454 462h11v11h-11z" fill="#e900ff"/><path d="M1304 472h11v11h-11z" fill="#0015ff"/><path d="M1314 472h11v11h-11z" fill="#0613ff"/><path d="M1324 472h11v11h-11z" fill="#0e11ff"/><path d="M1334 472h11v11h-11z" fill="#170eff"/><path d="M1344 472h11v11h-11z" fill="#220cff"/><path d="M1354 472h11v11h-11z" fill="#2e0aff"/><path d="M1364 472h11v11h-11z" fill="#3b08ff"/><path d="M1374 472h11v11h-11z" fill="#4a06ff"/><path d="M1384 472h11v11h-11z" fill="#5904ff"/><path d="M1394 472h11v11h-11z" fill="#6a02ff"/><path d="M1404 472h11v11h-11z" fill="#7c00ff"/><path d="M1414 472h11v11h-11z" fill="#6200ff"/><path d="M1424 472h11v11h-11z" fill="#7d00ff"/><path d="M1294 482h11v11h-11z" fill="#0003ff"/><path d="M1304 482h11v11h-11z" fill="#010dff"/><path d="M1314 482h11v11h-11z" fill="#080bff"/><path d="M1324 482h11v11h-11z" fill="#1009ff"/><path d="M1334 482h11v11h-11z" fill="#1907ff"/><path d="M1344 482h11v11h-11z" fill="#2405ff"/><path d="M1354 482h11v11h-11z" fill="#2f03ff"/><path d="M1364 482h11v11h-11z" fill="#3c02ff"/><path d="M1374 482h11v11h-11z" fill="#4a00ff"/><path d="M1384 482h11v11h-11z" fill="#2d00ff"/><path d="M1394 482h11v11h-11z" fill="#3d00ff"/><path d="M1294 492h11v11h-11z" fill="#0001ff"/><path d="M1304 492h11v11h-11z" fill="#0306ff"/><path d="M1314 492h11v11h-11z" fill="#0905ff"/><path d="M1324 492h11v11h-11z" fill="#1103ff"/><path d="M1334 492h11v11h-11z" fill="#1b01ff"/><path d="M1344 492h11v11h-11z" fill="#2500ff"/><path d="M1354 492h11v11h-11z" fill="#1000ff"/><path d="M1364 492h11v11h-11z" fill="#1900ff"/><path d="M1294 502h11v11h-11z" fill="#0000ff"/><path d="M1304 502h11v11h-11z" fill="#0401ff"/><path d="M1314 502h11v11h-11z" fill="#0b00ff"/><path d="M1324 502h11v11h-11z" fill="#0400ff"/><path d="M1334 502h11v11h-11z" fill="#0800ff"/><path d="M1294 512h11v11h-11z" fill="#0000ff"/><path d="M1304 512h11v11h-11z" fill="#0100ff"/></g><path d="M1651 51h13v13h-13z" fill="#26ff7b"/><path d="M1663 51h13v13h-13z" fill="#30ff79"/><path d="M1675 51h13v13h-13z" fill="#3aff78"/><path d="M1687 51h13v13h-13z" fill="#43ff76"/><path d="M1699 51h13v13h-13z" fill="#4dff74"/><path d="M1711 51h13v13h-13z" fill="#57ff73"/><path d="M1723 51h13v13h-13z" fill="#61ff71"/><path d="M1735 51h13v13h-13z" fill="#6bff6f"/><path d="M1747 51h13v13h-13z" fill="#76ff6d"/><path d="M1759 51h13v13h-13z" fill="#80ff6b"/><path d="M1771 51h13v13h-13z" fill="#8aff6a"/><path d="M1783 51h13v13h-13z" fill="#95ff68"/><path d="M1795 51h13v13h-13z" fill="#a0ff65"/><path d="M1807 51h13v13h-13z" fill="#abff63"/><path d="M1819 51h13v13h-13z" fill="#b6ff61"/><path d="M1831 51h13v13h-13z" fill="#c1ff5f"/><path d="M1843 51h13v13h-13z" fill="#cdff5d"/><path d="M1855 51h13v13h-13z" fill="#d8ff5a"/><path d="M1867 51h13v13h-13z" fill="#e4ff58"/><path d="M1879 51h13v13h-13z" fill="#f0ff56"/><path d="M1891 51h11v13h-11z" fill="#fdff53"/><path d="M1651 63h13v13h-13z" fill="#2aff84"/><path d="M1663 63h13v13h-13z" fill="#34ff83"/><path d="M1675 63h13v13h-13z" fill="#3fff81"/><path d="M1687 63h13v13h-13z" fill="#49ff80"/><path d="M1699 63h13v13h-13z" fill="#53ff7e"/><path d="M1711 63h13v13h-13z" fill="#5dff7c"/><path d="M1723 63h13v13h-13z" fill="#68ff7b"/><path d="M1735 63h13v13h-13z" fill="#72ff79"/><path d="M1747 63h13v13h-13z" fill="#7dff77"/><path d="M1759 63h13v13h-13z" fill="#88ff75"/><path d="M1771 63h13v13h-13z" fill="#92ff73"/><path d="M1783 63h13v13h-13z" fill="#9eff71"/><path d="M1795 63h13v13h-13z" fill="#a9ff70"/><path d="M1807 63h13v13h-13z" fill="#b4ff6d"/><path d="M1819 63h13v13h-13z" fill="#c0ff6b"/><path d="M1831 63h13v13h-13z" fill="#ccff69"/><path d="M1843 63h13v13h-13z" fill="#d8ff67"/><path d="M1855 63h13v13h-13z" fill="#e4ff65"/><path d="M1867 63h13v13h-13z" fill="#f0ff62"/><path d="M1879 63h13v13h-13z" fill="#fdff60"/><path d="M1891 63h11v13h-11z" fill="#fff45a"/><path d="M1651 75h13v13h-13z" fill="#2fff8e"/><path d="M1663 75h13v13h-13z" fill="#39ff8d"/><path d="M1675 75h13v13h-13z" fill="#44ff8b"/><path d="M1687 75h13v13h-13z" fill="#4eff8a"/><path d="M1699 75h13v13h-13z" fill="#59ff88"/><path d="M1711 75h13v13h-13z" fill="#64ff87"/><path d="M1723 75h13v13h-13z" fill="#6eff85"/><path d="M1735 75h13v13h-13z" fill="#79ff83"/><path d="M1747 75h13v13h-13z" fill="#85ff82"/><path d="M1759 75h13v13h-13z" fill="#90ff80"/><path d="M1771 75h13v13h-13z" fill="#9bff7e"/><path d="M1783 75h13v13h-13z" fill="#a7ff7c"/><path d="M1795 75h13v13h-13z" fill="#b3ff7a"/><path d="M1807 75h13v13h-13z" fill="#bfff78"/><path d="M1819 75h13v13h-13z" fill="#cbff76"/><path d="M1831 75h13v13h-13z" fill="#d7ff74"/><path d="M1843 75h13v13h-13z" fill="#e4ff72"/><path d="M1855 75h13v13h-13z" fill="#f1ff70"/><path d="M1867 75h13v13h-13z" fill="#feff6e"/><path d="M1879 75h13v13h-13z" fill="#fff366"/><path d="M1891 75h11v13h-11z" fill="#ffe75f"/><path d="M1651 87h13v13h-13z" fill="#34ff99"/><path d="M1663 87h13v13h-13z" fill="#3fff98"/><path d="M1675 87h13v13h-13z" fill="#4aff96"/><path d="M1687 87h13v13h-13z" fill="#54ff95"/><path d="M1699 87h13v13h-13z" fill="#5fff93"/><path d="M1711 87h13v13h-13z" fill="#6bff92"/><path d="M1723 87h13v13h-13z" fill="#76ff90"/><path d="M1735 87h13v13h-13z" fill="#81ff8f"/><path d="M1747 87h13v13h-13z" fill="#8dff8d"/><path d="M1759 87h13v13h-13z" fill="#99ff8b"/><path d="M1771 87h13v13h-13z" fill="#a5ff8a"/><path d="M1783 87h13v13h-13z" fill="#b1ff88"/><path d="M1795 87h13v13h-13z" fill="#bdff86"/><path d="M1807 87h13v13h-13z" fill="#caff84"/><path d="M1819 87h13v13h-13z" fill="#d6ff82"/><path d="M1831 87h13v13h-13z" fill="#e4ff80"/><path d="M1843 87h13v13h-13z" fill="#f1ff7e"/><path d="M1855 87h13v13h-13z" fill="#ffff7c"/><path d="M1867 87h13v13h-13z" fill="#fff274"/><path d="M1879 87h13v13h-13z" fill="#ffe66c"/><path d="M1891 87h11v13h-11z" fill="#ffdb65"/><path d="M1651 99h13v13h-13z" fill="#39ffa5"/><path d="M1663 99h13v13h-13z" fill="#44ffa3"/><path d="M1675 99h13v13h-13z" fill="#50ffa2"/><path d="M1687 99h13v13h-13z" fill="#5bffa1"/><path d="M1699 99h13v13h-13z" fill="#66ff9f"/><path d="M1711 99h13v13h-13z" fill="#72ff9e"/><path d="M1723 99h13v13h-13z" fill="#7eff9c"/><path d="M1735 99h13v13h-13z" fill="#8aff9b"/><path d="M1747 99h13v13h-13z" fill="#96ff99"/><path d="M1759 99h13v13h-13z" fill="#a2ff98"/><path d="M1771 99h13v13h-13z" fill="#afff96"/><path d="M1783 99h13v13h-13z" fill="#bcff94"/><path d="M1795 99h13v13h-13z" fill="#c9ff93"/><path d="M1807 99h13v13h-13z" fill="#d6ff91"/><path d="M1819 99h13v13h-13z" fill="#e3ff8f"/><path d="M1831 99h13v13h-13z" fill="#f1ff8d"/><path d="M1843 99h13v13h-13z" fill="#ffff8b"/><path d="M1855 99h13v13h-13z" fill="#fff182"/><path d="M1867 99h13v13h-13z" fill="#ffe579"/><path d="M1879 99h13v13h-13z" fill="#ffd971"/><path d="M1891 99h11v13h-11z" fill="#ffce6a"/><path d="M1651 111h13v13h-13z" fill="#3fffb1"/><path d="M1663 111h13v13h-13z" fill="#4affb0"/><path d="M1675 111h13v13h-13z" fill="#56ffaf"/><path d="M1687 111h13v13h-13z" fill="#62ffad"/><path d="M1699 111h13v13h-13z" fill="#6effac"/><path d="M1711 111h13v13h-13z" fill="#7affab"/><path d="M1723 111h13v13h-13z" fill="#87ffa9"/><path d="M1735 111h13v13h-13z" fill="#93ffa8"/><path d="M1747 111h13v13h-13z" fill="#a0ffa6"/><path d="M1759 111h13v13h-13z" fill="#adffa5"/><path d="M1771 111h13v13h-13z" fill="#baffa3"/><path d="M1783 111h13v13h-13z" fill="#c7ffa2"/><path d="M1795 111h13v13h-13z" fill="#d5ffa0"/><path d="M1807 111h13v13h-13z" fill="#e3ff9f"/><path d="M1819 111h13v13h-13z" fill="#f1ff9d"/><path d="M1831 111h13v13h-13z" fill="#fffe9a"/><path d="M1843 111h13v13h-13z" fill="#fff090"/><path d="M1855 111h13v13h-13z" fill="#ffe387"/><path d="M1867 111h13v13h-13z" fill="#ffd77e"/><path d="M1879 111h13v13h-13z" fill="#ffcc76"/><path d="M1891 111h11v13h-11z" fill="#ffc26f"/><path d="M1651 123h13v13h-13z" fill="#45ffbe"/><path d="M1663 123h13v13h-13z" fill="#51ffbd"/><path d="M1675 123h13v13h-13z" fill="#5dffbc"/><path d="M1687 123h13v13h-13z" fill="#6affbb"/><path d="M1699 123h13v13h-13z" fill="#76ffba"/><path d="M1711 123h13v13h-13z" fill="#83ffb9"/><path d="M1723 123h13v13h-13z" fill="#90ffb7"/><path d="M1735 123h13v13h-13z" fill="#9dffb6"/><path d="M1747 123h13v13h-13z" fill="#aaffb5"/><path d="M1759 123h13v13h-13z" fill="#b8ffb4"/><path d="M1771 123h13v13h-13z" fill="#c6ffb2"/><path d="M1783 123h13v13h-13z" fill="#d4ffb1"/><path d="M1795 123h13v13h-13z" fill="#e3ffaf"/><path d="M1807 123h13v13h-13z" fill="#f2ffae"/><path d="M1819 123h13v13h-13z" fill="#fffdab"/><path d="M1831 123h13v13h-13z" fill="#ffefa0"/><path d="M1843 123h13v13h-13z" fill="#ffe195"/><path d="M1855 123h13v13h-13z" fill="#ffd58c"/><path d="M1867 123h13v13h-13z" fill="#ffca83"/><path d="M1879 123h13v13h-13z" fill="#ffc07b"/><path d="M1891 123h11v13h-11z" fill="#ffb674"/><path d="M1651 135h13v13h-13z" fill="#4cffcd"/><path d="M1663 135h13v13h-13z" fill="#58ffcc"/><path d="M1675 135h13v13h-13z" fill="#65ffcb"/><path d="M1687 135h13v13h-13z" fill="#72ffca"/><path d="M1699 135h13v13h-13z" fill="#7fffc9"/><path d="M1711 135h13v13h-13z" fill="#8dffc8"/><path d="M1723 135h13v13h-13z" fill="#9affc7"/><path d="M1735 135h13v13h-13z" fill="#a8ffc6"/><path d="M1747 135h13v13h-13z" fill="#b6ffc5"/><path d="M1759 135h13v13h-13z" fill="#c5ffc4"/><path d="M1771 135h13v13h-13z" fill="#d3ffc2"/><path d="M1783 135h13v13h-13z" fill="#e3ffc1"/><path d="M1795 135h13v13h-13z" fill="#f2ffc0"/><path d="M1807 135h13v13h-13z" fill="#fffcbc"/><path d="M1819 135h13v13h-13z" fill="#ffedb0"/><path d="M1831 135h13v13h-13z" fill="#ffe0a5"/><path d="M1843 135h13v13h-13z" fill="#ffd39a"/><path d="M1855 135h13v13h-13z" fill="#ffc891"/><path d="M1867 135h13v13h-13z" fill="#ffbd88"/><path d="M1879 135h13v13h-13z" fill="#ffb480"/><path d="M1891 135h11v13h-11z" fill="#ffab78"/><path d="M1651 147h13v13h-13z" fill="#53ffdd"/><path d="M1663 147h13v13h-13z" fill="#60ffdc"/><path d="M1675 147h13v13h-13z" fill="#6dffdb"/><path d="M1687 147h13v13h-13z" fill="#7bffda"/><path d="M1699 147h13v13h-13z" fill="#89ffda"/><path d="M1711 147h13v13h-13z" fill="#97ffd9"/><path d="M1723 147h13v13h-13z" fill="#a6ffd8"/><path d="M1735 147h13v13h-13z" fill="#b4ffd7"/><path d="M1747 147h13v13h-13z" fill="#c3ffd6"/><path d="M1759 147h13v13h-13z" fill="#d3ffd5"/><path d="M1771 147h13v13h-13z" fill="#e2ffd4"/><path d="M1783 147h13v13h-13z" fill="#f2ffd3"/><path d="M1795 147h13v13h-13z" fill="#fffbcf"/><path d="M1807 147h13v13h-13z" fill="#ffecc1"/><path d="M1819 147h13v13h-13z" fill="#ffdeb5"/><path d="M1831 147h13v13h-13z" fill="#ffd1aa"/><path d="M1843 147h13v13h-13z" fill="#ffc59f"/><path d="M1855 147h13v13h-13z" fill="#ffbb96"/><path d="M1867 147h13v13h-13z" fill="#ffb18d"/><path d="M1879 147h13v13h-13z" fill="#ffa885"/><path d="M1891 147h11v13h-11z" fill="#ff9f7d"/><path d="M1651 159h13v13h-13z" fill="#5bffee"/><path d="M1663 159h13v13h-13z" fill="#69ffed"/><path d="M1675 159h13v13h-13z" fill="#77ffed"/><path d="M1687 159h13v13h-13z" fill="#85ffec"/><path d="M1699 159h13v13h-13z" fill="#94ffec"/><path d="M1711 159h13v13h-13z" fill="#a3ffeb"/><path d="M1723 159h13v13h-13z" fill="#b2ffeb"/><path d="M1735 159h13v13h-13z" fill="#c2ffea"/><path d="M1747 159h13v13h-13z" fill="#d2ffe9"/><path d="M1759 159h13v13h-13z" fill="#e2ffe9"/><path d="M1771 159h13v13h-13z" fill="#f3ffe8"/><path d="M1783 159h13v13h-13z" fill="#fffae3"/><path d="M1795 159h13v13h-13z" fill="#ffead4"/><path d="M1807 159h13v13h-13z" fill="#ffdcc6"/><path d="M1819 159h13v13h-13z" fill="#ffcfba"/><path d="M1831 159h13v13h-13z" fill="#ffc3ae"/><path d="M1843 159h13v13h-13z" fill="#ffb8a4"/><path d="M1855 159h13v13h-13z" fill="#ffae9a"/><path d="M1867 159h13v13h-13z" fill="#ffa491"/><path d="M1879 159h13v13h-13z" fill="#ff9c89"/><path d="M1891 159h11v13h-11z" fill="#ff9481"/><path d="M1651 171h13v13h-13z" fill="#62fdff"/><path d="M1663 171h13v13h-13z" fill="#71fdff"/><path d="M1675 171h13v13h-13z" fill="#80feff"/><path d="M1687 171h13v13h-13z" fill="#8ffeff"/><path d="M1699 171h13v13h-13z" fill="#9ffeff"/><path d="M1711 171h13v13h-13z" fill="#affeff"/><path d="M1723 171h13v13h-13z" fill="#c0ffff"/><path d="M1735 171h13v13h-13z" fill="#d0ffff"/><path d="M1747 171h13v13h-13z" fill="#e2ffff"/><path d="M1759 171h13v13h-13z" fill="#f3fffe"/><path d="M1771 171h13v13h-13z" fill="#fff9f8"/><path d="M1783 171h13v13h-13z" fill="#ffe9e7"/><path d="M1795 171h13v13h-13z" fill="#ffdad8"/><path d="M1807 171h13v13h-13z" fill="#ffcccb"/><path d="M1819 171h13v13h-13z" fill="#ffc0be"/><path d="M1831 171h13v13h-13z" fill="#ffb5b3"/><path d="M1843 171h13v13h-13z" fill="#ffaba8"/><path d="M1855 171h13v13h-13z" fill="#ffa19f"/><path d="M1867 171h13v13h-13z" fill="#ff9896"/><path d="M1879 171h13v13h-13z" fill="#ff908e"/><path d="M1891 171h11v13h-11z" fill="#ff8986"/><path d="M1651 183h13v13h-13z" fill="#64eaff"/><path d="M1663 183h13v13h-13z" fill="#72eaff"/><path d="M1675 183h13v13h-13z" fill="#81eaff"/><path d="M1687 183h13v13h-13z" fill="#8feaff"/><path d="M1699 183h13v13h-13z" fill="#9eeaff"/><path d="M1711 183h13v13h-13z" fill="#aeeaff"/><path d="M1723 183h13v13h-13z" fill="#beeaff"/><path d="M1735 183h13v13h-13z" fill="#cee9ff"/><path d="M1747 183h13v13h-13z" fill="#dfe9ff"/><path d="M1759 183h13v13h-13z" fill="#f0e9ff"/><path d="M1771 183h13v13h-13z" fill="#ffe7fc"/><path d="M1783 183h13v13h-13z" fill="#ffd7ec"/><path d="M1795 183h13v13h-13z" fill="#ffcadd"/><path d="M1807 183h13v13h-13z" fill="#ffbdcf"/><path d="M1819 183h13v13h-13z" fill="#ffb2c3"/><path d="M1831 183h13v13h-13z" fill="#ffa7b7"/><path d="M1843 183h13v13h-13z" fill="#ff9dad"/><path d="M1855 183h13v13h-13z" fill="#ff95a3"/><path d="M1867 183h13v13h-13z" fill="#ff8c9a"/><path d="M1879 183h13v13h-13z" fill="#ff8592"/><path d="M1891 183h11v13h-11z" fill="#ff7e8a"/><path d="M1651 195h13v13h-13z" fill="#65d8ff"/><path d="M1663 195h13v13h-13z" fill="#73d7ff"/><path d="M1675 195h13v13h-13z" fill="#81d7ff"/><path d="M1687 195h13v13h-13z" fill="#8fd7ff"/><path d="M1699 195h13v13h-13z" fill="#9ed6ff"/><path d="M1711 195h13v13h-13z" fill="#add6ff"/><path d="M1723 195h13v13h-13z" fill="#bcd6ff"/><path d="M1735 195h13v13h-13z" fill="#ccd5ff"/><path d="M1747 195h13v13h-13z" fill="#dcd5ff"/><path d="M1759 195h13v13h-13z" fill="#edd4ff"/><path d="M1771 195h13v13h-13z" fill="#fed4ff"/><path d="M1783 195h13v13h-13z" fill="#ffc7f0"/><path d="M1795 195h13v13h-13z" fill="#ffbae1"/><path d="M1807 195h13v13h-13z" fill="#ffaed3"/><path d="M1819 195h13v13h-13z" fill="#ffa3c7"/><path d="M1831 195h13v13h-13z" fill="#ff9abb"/><path d="M1843 195h13v13h-13z" fill="#ff91b1"/><path d="M1855 195h13v13h-13z" fill="#ff88a7"/><path d="M1867 195h13v13h-13z" fill="#ff819e"/><path d="M1879 195h13v13h-13z" fill="#ff7996"/><path d="M1891 195h11v13h-11z" fill="#ff738e"/><path d="M1651 207h13v13h-13z" fill="#66c7ff"/><path d="M1663 207h13v13h-13z" fill="#74c6ff"/><path d="M1675 207h13v13h-13z" fill="#81c5ff"/><path d="M1687 207h13v13h-13z" fill="#8fc5ff"/><path d="M1699 207h13v13h-13z" fill="#9dc4ff"/><path d="M1711 207h13v13h-13z" fill="#acc3ff"/><path d="M1723 207h13v13h-13z" fill="#bbc3ff"/><path d="M1735 207h13v13h-13z" fill="#cac2ff"/><path d="M1747 207h13v13h-13z" fill="#d9c1ff"/><path d="M1759 207h13v13h-13z" fill="#e9c0ff"/><path d="M1771 207h13v13h-13z" fill="#fac0ff"/><path d="M1783 207h13v13h-13z" fill="#ffb6f4"/><path d="M1795 207h13v13h-13z" fill="#ffaae5"/><path d="M1807 207h13v13h-13z" fill="#ffa0d7"/><path d="M1819 207h13v13h-13z" fill="#ff96cb"/><path d="M1831 207h13v13h-13z" fill="#ff8dc0"/><path d="M1843 207h13v13h-13z" fill="#ff84b5"/><path d="M1855 207h13v13h-13z" fill="#ff7cab"/><path d="M1867 207h13v13h-13z" fill="#ff75a2"/><path d="M1879 207h13v13h-13z" fill="#ff6e9a"/><path d="M1891 207h11v13h-11z" fill="#ff6892"/><path d="M1651 219h13v13h-13z" fill="#67b6ff"/><path d="M1663 219h13v13h-13z" fill="#74b5ff"/><path d="M1675 219h13v13h-13z" fill="#81b5ff"/><path d="M1687 219h13v13h-13z" fill="#8fb4ff"/><path d="M1699 219h13v13h-13z" fill="#9db3ff"/><path d="M1711 219h13v13h-13z" fill="#abb2ff"/><path d="M1723 219h13v13h-13z" fill="#b9b1ff"/><path d="M1735 219h13v13h-13z" fill="#c8b0ff"/><path d="M1747 219h13v13h-13z" fill="#d7afff"/><path d="M1759 219h13v13h-13z" fill="#e6aeff"/><path d="M1771 219h13v13h-13z" fill="#f6adff"/><path d="M1783 219h13v13h-13z" fill="#ffa6f8"/><path d="M1795 219h13v13h-13z" fill="#ff9be9"/><path d="M1807 219h13v13h-13z" fill="#ff91db"/><path d="M1819 219h13v13h-13z" fill="#ff88cf"/><path d="M1831 219h13v13h-13z" fill="#ff80c4"/><path d="M1843 219h13v13h-13z" fill="#ff78b9"/><path d="M1855 219h13v13h-13z" fill="#ff70af"/><path d="M1867 219h13v13h-13z" fill="#ff6aa6"/><path d="M1879 219h13v13h-13z" fill="#ff639e"/><path d="M1891 219h11v13h-11z" fill="#ff5d96"/><path d="M1651 231h13v9h-13z" fill="#68a7ff"/><path d="M1663 231h13v9h-13z" fill="#75a6ff"/><path d="M1675 231h13v9h-13z" fill="#82a4ff"/><path d="M1687 231h13v9h-13z" fill="#8fa3ff"/><path d="M1699 231h13v9h-13z" fill="#9ca2ff"/><path d="M1711 231h13v9h-13z" fill="#aaa1ff"/><path d="M1723 231h13v9h-13z" fill="#b8a0ff"/><path d="M1735 231h13v9h-13z" fill="#c69fff"/><path d="M1747 231h13v9h-13z" fill="#d59dff"/><path d="M1759 231h13v9h-13z" fill="#e49cff"/><path d="M1771 231h13v9h-13z" fill="#f39bff"/><path d="M1783 231h13v9h-13z" fill="#ff97fb"/><path d="M1795 231h13v9h-13z" fill="#ff8ded"/><path d="M1807 231h13v9h-13z" fill="#ff83df"/><path d="M1819 231h13v9h-13z" fill="#ff7bd3"/><path d="M1831 231h13v9h-13z" fill="#ff73c7"/><path d="M1843 231h13v9h-13z" fill="#ff6cbd"/><path d="M1855 231h13v9h-13z" fill="#ff65b3"/><path d="M1867 231h13v9h-13z" fill="#ff5eaa"/><path d="M1879 231h13v9h-13z" fill="#ff59a2"/><path d="M1891 231h11v9h-11z" fill="#ff539a"/>
<text x="217" y="110.9" font-size="15.7" fill="#d4d4d4" stroke="#d4d4d4" stroke-width="0.3" text-anchor="middle" font-weight="normal" textLength="95.06" lengthAdjust="spacingAndGlyphs" >DeltaE 2000</text><rect x="23.7" y="115.5" width="386.3" height="425.5" fill="#222222" /><line x1="75.16" y1="115.5" x2="75.16" y2="541" stroke="#8c8c8c" stroke-width="2"/><line x1="126.62" y1="115.5" x2="126.62" y2="541" stroke="#8c8c8c" stroke-width="2"/><line x1="178.08" y1="115.5" x2="178.08" y2="541" stroke="#8c8c8c" stroke-width="2"/><line x1="229.54" y1="115.5" x2="229.54" y2="541" stroke="#8c8c8c" stroke-width="2"/><line x1="281" y1="115.5" x2="281" y2="541" stroke="#8c8c8c" stroke-width="2"/><line x1="332.46" y1="115.5" x2="332.46" y2="541" stroke="#8c8c8c" stroke-width="2"/><line x1="383.92" y1="115.5" x2="383.92" y2="541" stroke="#8c8c8c" stroke-width="2"/><rect x="23.7" y="121" width="386.3" height="39.5" fill="url(#de0)" /><rect x="23.7" y="174.45" width="246.2" height="39.5" fill="url(#de1)" stroke="#000" stroke-width="1.5" /><rect x="23.7" y="227.9" width="298.45" height="39.5" fill="url(#de2)" stroke="#000" stroke-width="1.5" /><rect x="23.7" y="281.35" width="386.3" height="39.5" fill="url(#de3)" stroke="#000" stroke-width="1.2" /><rect x="23.7" y="334.8" width="386.3" height="39.5" fill="url(#de4)" stroke="#000" stroke-width="1.2" /><rect x="23.7" y="388.25" width="186.92" height="39.5" fill="url(#de5)" stroke="#000" stroke-width="1.5" /><rect x="23.7" y="441.7" width="86.28" height="39.5" fill="url(#de6)" stroke="#000" stroke-width="1.5" /><rect x="23.7" y="495.15" width="386.3" height="39.5" fill="url(#de7)" stroke="#000" stroke-width="1.2" /><path d="M23.7 541 V115.5 H410 V541 Z" fill="none" stroke="#9c9c9c" stroke-width="2"/><line x1="23.7" y1="541" x2="23.7" y2="547" stroke="#9c9c9c" stroke-width="2"/><text x="23.7" y="564" font-size="15" fill="#d4d4d4" stroke="#d4d4d4" stroke-width="0.3" text-anchor="middle" font-weight="normal" textLength="9.18" lengthAdjust="spacingAndGlyphs" >0</text><line x1="75.16" y1="541" x2="75.16" y2="547" stroke="#9c9c9c" stroke-width="2"/><text x="75.16" y="564" font-size="15" fill="#d4d4d4" stroke="#d4d4d4" stroke-width="0.3" text-anchor="middle" font-weight="normal" textLength="9.18" lengthAdjust="spacingAndGlyphs" >2</text><line x1="126.62" y1="541" x2="126.62" y2="547" stroke="#9c9c9c" stroke-width="2"/><text x="126.62" y="564" font-size="15" fill="#d4d4d4" stroke="#d4d4d4" stroke-width="0.3" text-anchor="middle" font-weight="normal" textLength="9.18" lengthAdjust="spacingAndGlyphs" >4</text><line x1="178.08" y1="541" x2="178.08" y2="547" stroke="#9c9c9c" stroke-width="2"/><text x="178.08" y="564" font-size="15" fill="#d4d4d4" stroke="#d4d4d4" stroke-width="0.3" text-anchor="middle" font-weight="normal" textLength="9.18" lengthAdjust="spacingAndGlyphs" >6</text><line x1="229.54" y1="541" x2="229.54" y2="547" stroke="#9c9c9c" stroke-width="2"/><text x="229.54" y="564" font-size="15" fill="#d4d4d4" stroke="#d4d4d4" stroke-width="0.3" text-anchor="middle" font-weight="normal" textLength="9.18" lengthAdjust="spacingAndGlyphs" >8</text><line x1="281" y1="541" x2="281" y2="547" stroke="#9c9c9c" stroke-width="2"/><text x="281" y="564" font-size="15" fill="#d4d4d4" stroke="#d4d4d4" stroke-width="0.3" text-anchor="middle" font-weight="normal" textLength="18.35" lengthAdjust="spacingAndGlyphs" >10</text><line x1="332.46" y1="541" x2="332.46" y2="547" stroke="#9c9c9c" stroke-width="2"/><text x="332.46" y="564" font-size="15" fill="#d4d4d4" stroke="#d4d4d4" stroke-width="0.3" text-anchor="middle" font-weight="normal" textLength="18.35" lengthAdjust="spacingAndGlyphs" >12</text><line x1="383.92" y1="541" x2="383.92" y2="547" stroke="#9c9c9c" stroke-width="2"/><text x="383.92" y="564" font-size="15" fill="#d4d4d4" stroke="#d4d4d4" stroke-width="0.3" text-anchor="middle" font-weight="normal" textLength="18.35" lengthAdjust="spacingAndGlyphs" >14</text><line x1="410" y1="541" x2="410" y2="547" stroke="#9c9c9c" stroke-width="2"/><text x="539" y="40.4" font-size="15.5" fill="#d4d4d4" stroke="#d4d4d4" stroke-width="0.3" text-anchor="middle" font-weight="normal" textLength="47.49" lengthAdjust="spacingAndGlyphs" >DeltaL</text><rect x="470.5" y="46" width="167" height="326" fill="#222222" /><line x1="470.5" y1="100.33" x2="637.5" y2="100.33" stroke="#8c8c8c" stroke-width="2"/><line x1="470.5" y1="154.67" x2="637.5" y2="154.67" stroke="#8c8c8c" stroke-width="2"/><line x1="470.5" y1="209" x2="637.5" y2="209" stroke="#8c8c8c" stroke-width="2"/><line x1="470.5" y1="263.33" x2="637.5" y2="263.33" stroke="#8c8c8c" stroke-width="2"/><line x1="470.5" y1="317.67" x2="637.5" y2="317.67" stroke="#8c8c8c" stroke-width="2"/><line x1="488.5" y1="209" x2="619.5" y2="209" stroke="#050505" stroke-width="2.5"/><path d="M470.5 372 V46 H637.5 V372 Z" fill="none" stroke="#9c9c9c" stroke-width="2"/><line x1="464.5" y1="46" x2="470.5" y2="46" stroke="#9c9c9c" stroke-width="2"/><text x="462.5" y="51.5" font-size="15" fill="#d4d4d4" stroke="#d4d4d4" stroke-width="0.3" text-anchor="end" font-weight="normal" textLength="18.35" lengthAdjust="spacingAndGlyphs" >15</text><line x1="464.5" y1="100.33" x2="470.5" y2="100.33" stroke="#9c9c9c" stroke-width="2"/><text x="462.5" y="105.83" font-size="15" fill="#d4d4d4" stroke="#d4d4d4" stroke-width="0.3" text-anchor="end" font-weight="normal" textLength="18.35" lengthAdjust="spacingAndGlyphs" >10</text><line x1="464.5" y1="154.67" x2="470.5" y2="154.67" stroke="#9c9c9c" stroke-width="2"/><text x="462.5" y="160.17" font-size="15" fill="#d4d4d4" stroke="#d4d4d4" stroke-width="0.3" text-anchor="end" font-weight="normal" textLength="9.18" lengthAdjust="spacingAndGlyphs" >5</text><line x1="464.5" y1="209" x2="470.5" y2="209" stroke="#9c9c9c" stroke-width="2"/><text x="462.5" y="214.5" font-size="15" fill="#d4d4d4" stroke="#d4d4d4" stroke-width="0.3" text-anchor="end" font-weight="normal" textLength="9.18" lengthAdjust="spacingAndGlyphs" >0</text><line x1="464.5" y1="263.33" x2="470.5" y2="263.33" stroke="#9c9c9c" stroke-width="2"/><text x="462.5" y="268.83" font-size="15" fill="#d4d4d4" stroke="#d4d4d4" stroke-width="0.3" text-anchor="end" font-weight="normal" textLength="14.67" lengthAdjust="spacingAndGlyphs" >-5</text><line x1="464.5" y1="317.67" x2="470.5" y2="317.67" stroke="#9c9c9c" stroke-width="2"/><text x="462.5" y="323.17" font-size="15" fill="#d4d4d4" stroke="#d4d4d4" stroke-width="0.3" text-anchor="end" font-weight="normal" textLength="23.85" lengthAdjust="spacingAndGlyphs" >-10</text><line x1="464.5" y1="372" x2="470.5" y2="372" stroke="#9c9c9c" stroke-width="2"/><text x="462.5" y="377.5" font-size="15" fill="#d4d4d4" stroke="#d4d4d4" stroke-width="0.3" text-anchor="end" font-weight="normal" textLength="23.85" lengthAdjust="spacingAndGlyphs" >-15</text><line x1="470.5" y1="372" x2="470.5" y2="378" stroke="#9c9c9c" stroke-width="2"/><line x1="637.5" y1="372" x2="637.5" y2="378" stroke="#9c9c9c" stroke-width="2"/><text x="554" y="388.5" font-size="15" fill="#d4d4d4" stroke="#d4d4d4" stroke-width="0.3" text-anchor="middle" font-weight="normal" textLength="43.1" lengthAdjust="spacingAndGlyphs" >100W</text><text x="766.5" y="40.4" font-size="15.5" fill="#d4d4d4" stroke="#d4d4d4" stroke-width="0.3" text-anchor="middle" font-weight="normal" textLength="50.22" lengthAdjust="spacingAndGlyphs" >DeltaC</text><rect x="699" y="46" width="165" height="326" fill="#222222" /><line x1="699" y1="100.33" x2="864" y2="100.33" stroke="#8c8c8c" stroke-width="2"/><line x1="699" y1="154.67" x2="864" y2="154.67" stroke="#8c8c8c" stroke-width="2"/><line x1="699" y1="209" x2="864" y2="209" stroke="#8c8c8c" stroke-width="2"/><line x1="699" y1="263.33" x2="864" y2="263.33" stroke="#8c8c8c" stroke-width="2"/><line x1="699" y1="317.67" x2="864" y2="317.67" stroke="#8c8c8c" stroke-width="2"/><rect x="716" y="46" width="131" height="163" fill="url(#dc)" stroke="#000" stroke-width="1.5" /><path d="M699 372 V46 H864 V372 Z" fill="none" stroke="#9c9c9c" stroke-width="2"/><line x1="693" y1="46" x2="699" y2="46" stroke="#9c9c9c" stroke-width="2"/><text x="691" y="51.5" font-size="15" fill="#d4d4d4" stroke="#d4d4d4" stroke-width="0.3" text-anchor="end" font-weight="normal" textLength="18.35" lengthAdjust="spacingAndGlyphs" >15</text><line x1="693" y1="100.33" x2="699" y2="100.33" stroke="#9c9c9c" stroke-width="2"/><text x="691" y="105.83" font-size="15" fill="#d4d4d4" stroke="#d4d4d4" stroke-width="0.3" text-anchor="end" font-weight="normal" textLength="18.35" lengthAdjust="spacingAndGlyphs" >10</text><line x1="693" y1="154.67" x2="699" y2="154.67" stroke="#9c9c9c" stroke-width="2"/><text x="691" y="160.17" font-size="15" fill="#d4d4d4" stroke="#d4d4d4" stroke-width="0.3" text-anchor="end" font-weight="normal" textLength="9.18" lengthAdjust="spacingAndGlyphs" >5</text><line x1="693" y1="209" x2="699" y2="209" stroke="#9c9c9c" stroke-width="2"/><text x="691" y="214.5" font-size="15" fill="#d4d4d4" stroke="#d4d4d4" stroke-width="0.3" text-anchor="end" font-weight="normal" textLength="9.18" lengthAdjust="spacingAndGlyphs" >0</text><line x1="693" y1="263.33" x2="699" y2="263.33" stroke="#9c9c9c" stroke-width="2"/><text x="691" y="268.83" font-size="15" fill="#d4d4d4" stroke="#d4d4d4" stroke-width="0.3" text-anchor="end" font-weight="normal" textLength="14.67" lengthAdjust="spacingAndGlyphs" >-5</text><line x1="693" y1="317.67" x2="699" y2="317.67" stroke="#9c9c9c" stroke-width="2"/><text x="691" y="323.17" font-size="15" fill="#d4d4d4" stroke="#d4d4d4" stroke-width="0.3" text-anchor="end" font-weight="normal" textLength="23.85" lengthAdjust="spacingAndGlyphs" >-10</text><line x1="693" y1="372" x2="699" y2="372" stroke="#9c9c9c" stroke-width="2"/><text x="691" y="377.5" font-size="15" fill="#d4d4d4" stroke="#d4d4d4" stroke-width="0.3" text-anchor="end" font-weight="normal" textLength="23.85" lengthAdjust="spacingAndGlyphs" >-15</text><line x1="699" y1="372" x2="699" y2="378" stroke="#9c9c9c" stroke-width="2"/><line x1="864" y1="372" x2="864" y2="378" stroke="#9c9c9c" stroke-width="2"/><text x="781.5" y="388.5" font-size="15" fill="#d4d4d4" stroke="#d4d4d4" stroke-width="0.3" text-anchor="middle" font-weight="normal" textLength="43.1" lengthAdjust="spacingAndGlyphs" >100W</text><text x="993.75" y="40.4" font-size="15.5" fill="#d4d4d4" stroke="#d4d4d4" stroke-width="0.3" text-anchor="middle" font-weight="normal" textLength="50.22" lengthAdjust="spacingAndGlyphs" >DeltaH</text><rect x="926" y="46" width="165.5" height="326" fill="#222222" /><line x1="926" y1="100.33" x2="1091.5" y2="100.33" stroke="#8c8c8c" stroke-width="2"/><line x1="926" y1="154.67" x2="1091.5" y2="154.67" stroke="#8c8c8c" stroke-width="2"/><line x1="926" y1="209" x2="1091.5" y2="209" stroke="#8c8c8c" stroke-width="2"/><line x1="926" y1="263.33" x2="1091.5" y2="263.33" stroke="#8c8c8c" stroke-width="2"/><line x1="926" y1="317.67" x2="1091.5" y2="317.67" stroke="#8c8c8c" stroke-width="2"/><line x1="944" y1="209" x2="1073.5" y2="209" stroke="#050505" stroke-width="2.5"/><path d="M926 372 V46 H1091.5 V372 Z" fill="none" stroke="#9c9c9c" stroke-width="2"/><line x1="920" y1="46" x2="926" y2="46" stroke="#9c9c9c" stroke-width="2"/><text x="918" y="51.5" font-size="15" fill="#d4d4d4" stroke="#d4d4d4" stroke-width="0.3" text-anchor="end" font-weight="normal" textLength="18.35" lengthAdjust="spacingAndGlyphs" >15</text><line x1="920" y1="100.33" x2="926" y2="100.33" stroke="#9c9c9c" stroke-width="2"/><text x="918" y="105.83" font-size="15" fill="#d4d4d4" stroke="#d4d4d4" stroke-width="0.3" text-anchor="end" font-weight="normal" textLength="18.35" lengthAdjust="spacingAndGlyphs" >10</text><line x1="920" y1="154.67" x2="926" y2="154.67" stroke="#9c9c9c" stroke-width="2"/><text x="918" y="160.17" font-size="15" fill="#d4d4d4" stroke="#d4d4d4" stroke-width="0.3" text-anchor="end" font-weight="normal" textLength="9.18" lengthAdjust="spacingAndGlyphs" >5</text><line x1="920" y1="209" x2="926" y2="209" stroke="#9c9c9c" stroke-width="2"/><text x="918" y="214.5" font-size="15" fill="#d4d4d4" stroke="#d4d4d4" stroke-width="0.3" text-anchor="end" font-weight="normal" textLength="9.18" lengthAdjust="spacingAndGlyphs" >0</text><line x1="920" y1="263.33" x2="926" y2="263.33" stroke="#9c9c9c" stroke-width="2"/><text x="918" y="268.83" font-size="15" fill="#d4d4d4" stroke="#d4d4d4" stroke-width="0.3" text-anchor="end" font-weight="normal" textLength="14.67" lengthAdjust="spacingAndGlyphs" >-5</text><line x1="920" y1="317.67" x2="926" y2="317.67" stroke="#9c9c9c" stroke-width="2"/><text x="918" y="323.17" font-size="15" fill="#d4d4d4" stroke="#d4d4d4" stroke-width="0.3" text-anchor="end" font-weight="normal" textLength="23.85" lengthAdjust="spacingAndGlyphs" >-10</text><line x1="920" y1="372" x2="926" y2="372" stroke="#9c9c9c" stroke-width="2"/><text x="918" y="377.5" font-size="15" fill="#d4d4d4" stroke="#d4d4d4" stroke-width="0.3" text-anchor="end" font-weight="normal" textLength="23.85" lengthAdjust="spacingAndGlyphs" >-15</text><line x1="926" y1="372" x2="926" y2="378" stroke="#9c9c9c" stroke-width="2"/><line x1="1091.5" y1="372" x2="1091.5" y2="378" stroke="#9c9c9c" stroke-width="2"/><text x="1008.75" y="388.5" font-size="15" fill="#d4d4d4" stroke="#d4d4d4" stroke-width="0.3" text-anchor="middle" font-weight="normal" textLength="43.1" lengthAdjust="spacingAndGlyphs" >100W</text><rect x="433" y="405.5" width="681" height="169" fill="#000000" /><rect x="453" y="413.5" width="72" height="68.5" fill="#cbd9fb" /><rect x="453" y="481.5" width="72" height="68" fill="#d1dec9" /><rect x="453" y="413.5" width="72" height="136" fill="none" stroke="#f4f4f4" stroke-width="1.2"/><text x="489" y="565" font-size="13" fill="#f0f0f0" text-anchor="middle" font-weight="bold" textLength="34.32" lengthAdjust="spacingAndGlyphs" >White</text><rect x="536.25" y="413.5" width="72" height="68.5" fill="#f03438" /><rect x="536.25" y="481.5" width="72" height="68" fill="#f4001f" /><rect x="536.25" y="413.5" width="72" height="136" fill="none" stroke="#f4f4f4" stroke-width="1.2"/><text x="572.25" y="565" font-size="13" fill="#f0f0f0" text-anchor="middle" font-weight="bold" textLength="23.82" lengthAdjust="spacingAndGlyphs" >Red</text><rect x="619.5" y="413.5" width="72" height="68.5" fill="#98e598" /><rect x="619.5" y="481.5" width="72" height="68" fill="#00ef55" /><rect x="619.5" y="413.5" width="72" height="136" fill="none" stroke="#f4f4f4" stroke-width="1.2"/><text x="655.5" y="565" font-size="13" fill="#f0f0f0" text-anchor="middle" font-weight="bold" textLength="36.44" lengthAdjust="spacingAndGlyphs" >Green</text><rect x="702.75" y="413.5" width="72" height="68.5" fill="#0059fa" /><rect x="702.75" y="481.5" width="72" height="68" fill="#653ad0" /><rect x="702.75" y="413.5" width="72" height="136" fill="none" stroke="#f4f4f4" stroke-width="1.2"/><text x="738.75" y="565" font-size="13" fill="#f0f0f0" text-anchor="middle" font-weight="bold" textLength="27.33" lengthAdjust="spacingAndGlyphs" >Blue</text><rect x="786" y="413.5" width="72" height="68.5" fill="#c4cd80" /><rect x="786" y="481.5" width="72" height="68" fill="#00d3c8" /><rect x="786" y="413.5" width="72" height="136" fill="none" stroke="#f4f4f4" stroke-width="1.2"/><text x="822" y="565" font-size="13" fill="#f0f0f0" text-anchor="middle" font-weight="bold" textLength="30.84" lengthAdjust="spacingAndGlyphs" >Cyan</text><rect x="869.25" y="413.5" width="72" height="68.5" fill="#cd50f8" /><rect x="869.25" y="481.5" width="72" height="68" fill="#dc00c2" /><rect x="869.25" y="413.5" width="72" height="136" fill="none" stroke="#f4f4f4" stroke-width="1.2"/><text x="905.25" y="565" font-size="13" fill="#f0f0f0" text-anchor="middle" font-weight="bold" textLength="51.15" lengthAdjust="spacingAndGlyphs" >Magenta</text><rect x="952.5" y="413.5" width="72" height="68.5" fill="#f2dc75" /><rect x="952.5" y="481.5" width="72" height="68" fill="#e2e900" /><rect x="952.5" y="413.5" width="72" height="136" fill="none" stroke="#f4f4f4" stroke-width="1.2"/><text x="988.5" y="565" font-size="13" fill="#f0f0f0" text-anchor="middle" font-weight="bold" textLength="39.25" lengthAdjust="spacingAndGlyphs" >Yellow</text><rect x="1035.75" y="413.5" width="72" height="68.5" fill="#cbd9fb" /><rect x="1035.75" y="481.5" width="72" height="68" fill="#d1dec9" /><rect x="1035.75" y="413.5" width="72" height="136" fill="none" stroke="#f4f4f4" stroke-width="1.2"/><text x="1071.75" y="565" font-size="13" fill="#f0f0f0" text-anchor="middle" font-weight="bold" textLength="32.94" lengthAdjust="spacingAndGlyphs" >100W</text><text transform="translate(447.5 443.5) rotate(-90)" font-size="12" fill="#f0f0f0" font-weight="bold" text-anchor="middle">Actual</text><text transform="translate(447.5 519) rotate(-90)" font-size="12" fill="#f0f0f0" font-weight="bold" text-anchor="middle">Target</text><text x="538.5" y="622" font-size="15" fill="#d4d4d4" stroke="#d4d4d4" stroke-width="0.3" text-anchor="middle" font-weight="normal" textLength="99.97" lengthAdjust="spacingAndGlyphs" >RGB Balance</text><rect x="409" y="627.5" width="291.5" height="186" fill="#222222" /><line x1="409" y1="644.4" x2="700.5" y2="644.4" stroke="#8c8c8c" stroke-width="2"/><line x1="409" y1="721.3" x2="700.5" y2="721.3" stroke="#8c8c8c" stroke-width="2"/><line x1="409" y1="798.8" x2="700.5" y2="798.8" stroke="#8c8c8c" stroke-width="2"/><line x1="403" y1="644.4" x2="409" y2="644.4" stroke="#9c9c9c" stroke-width="2"/><text x="402" y="649.9" font-size="15" fill="#d4d4d4" stroke="#d4d4d4" stroke-width="0.3" text-anchor="end" font-weight="normal" textLength="18.35" lengthAdjust="spacingAndGlyphs" >50</text><line x1="403" y1="721.3" x2="409" y2="721.3" stroke="#9c9c9c" stroke-width="2"/><text x="402" y="726.8" font-size="15" fill="#d4d4d4" stroke="#d4d4d4" stroke-width="0.3" text-anchor="end" font-weight="normal" textLength="9.18" lengthAdjust="spacingAndGlyphs" >0</text><line x1="403" y1="798.8" x2="409" y2="798.8" stroke="#9c9c9c" stroke-width="2"/><text x="402" y="804.3" font-size="15" fill="#d4d4d4" stroke="#d4d4d4" stroke-width="0.3" text-anchor="end" font-weight="normal" textLength="23.85" lengthAdjust="spacingAndGlyphs" >-50</text><rect x="437.5" y="721.3" width="77.5" height="6" fill="url(#rbR)" stroke="#000" stroke-width="1.2" /><rect x="515.5" y="721.3" width="77.5" height="8.5" fill="url(#rbG)" stroke="#000" stroke-width="1.2" /><rect x="595" y="633" width="77.5" height="88.3" fill="url(#rbB)" stroke="#000" stroke-width="1.2" /><path d="M409 813.5 V627.5 H700.5 V813.5 Z" fill="none" stroke="#9c9c9c" stroke-width="2"/><line x1="409" y1="813.5" x2="409" y2="820" stroke="#9c9c9c" stroke-width="2"/><line x1="700.5" y1="813.5" x2="700.5" y2="820" stroke="#9c9c9c" stroke-width="2"/><text x="554.5" y="831" font-size="15" fill="#d4d4d4" stroke="#d4d4d4" stroke-width="0.3" text-anchor="middle" font-weight="normal" textLength="43.1" lengthAdjust="spacingAndGlyphs" >100W</text><text x="30.3" y="58" font-size="40" fill="#f4f4f4" text-anchor="start" font-weight="normal" textLength="220" lengthAdjust="spacingAndGlyphs">Colorspace</text><text x="17.8" y="648.5" font-size="29.5" fill="#f4f4f4" text-anchor="start" font-weight="normal" textLength="251" lengthAdjust="spacingAndGlyphs">Current Reading</text><text x="18.4" y="692.7" font-size="25" fill="#f4f4f4" text-anchor="start" font-weight="normal" textLength="116" lengthAdjust="spacingAndGlyphs">x: 0.2813</text><text x="18.4" y="734.6" font-size="25" fill="#f4f4f4" text-anchor="start" font-weight="normal" textLength="100.32" lengthAdjust="spacingAndGlyphs">y: 0.291</text><text x="18.4" y="776.4" font-size="25" fill="#f4f4f4" text-anchor="start" font-weight="normal" textLength="109.74" lengthAdjust="spacingAndGlyphs">fL: 99.43</text><text x="18.4" y="818.3" font-size="25" fill="#f4f4f4" text-anchor="start" font-weight="normal" textLength="183" lengthAdjust="spacingAndGlyphs">cd/m²: 340.66</text><rect x="725" y="604.4" width="807" height="20" fill="#2a2a2a" /><rect x="725" y="624.4" width="807" height="20" fill="#191919" /><rect x="725" y="644.4" width="807" height="37.25" fill="#3c3c3c" /><rect x="725" y="681.65" width="807" height="37.25" fill="#6c6c6c" /><rect x="725" y="718.9" width="807" height="37.25" fill="#3c3c3c" /><rect x="725" y="756.15" width="807" height="37.25" fill="#6c6c6c" /><rect x="725" y="793.4" width="807" height="37.25" fill="#3c3c3c" /><rect x="725" y="604.4" width="16" height="40" fill="#060606" /><rect x="725" y="644.4" width="16" height="186.25" fill="#1f1f1f" /><text x="828.7" y="632" font-size="20" fill="#f2f2f2" text-anchor="start" font-weight="normal" textLength="48" lengthAdjust="spacingAndGlyphs">White</text><text x="920.4" y="632" font-size="20" fill="#f2f2f2" text-anchor="start" font-weight="normal" textLength="34.45" lengthAdjust="spacingAndGlyphs">Red</text><text x="1000.3" y="632" font-size="20" fill="#f2f2f2" text-anchor="start" font-weight="normal" textLength="52.19" lengthAdjust="spacingAndGlyphs">Green</text><text x="1092" y="632" font-size="20" fill="#f2f2f2" text-anchor="start" font-weight="normal" textLength="37.59" lengthAdjust="spacingAndGlyphs">Blue</text><text x="1172.4" y="632" font-size="20" fill="#f2f2f2" text-anchor="start" font-weight="normal" textLength="43.84" lengthAdjust="spacingAndGlyphs">Cyan</text><text x="1264" y="632" font-size="20" fill="#f2f2f2" text-anchor="start" font-weight="normal" textLength="73.08" lengthAdjust="spacingAndGlyphs">Magenta</text><text x="1354.9" y="632" font-size="20" fill="#f2f2f2" text-anchor="start" font-weight="normal" textLength="53.6" lengthAdjust="spacingAndGlyphs">Yellow</text><text x="1445.6" y="632" font-size="20" fill="#f2f2f2" text-anchor="start" font-weight="normal" textLength="49.05" lengthAdjust="spacingAndGlyphs">100W</text><text x="745.5" y="671.9" font-size="22.5" fill="#f0f0f0" text-anchor="start" font-weight="normal" textLength="71.47" lengthAdjust="spacingAndGlyphs">x: CIE31</text><text x="828.7" y="671.9" font-size="22.5" fill="#f0f0f0" text-anchor="start" font-weight="normal" textLength="57" lengthAdjust="spacingAndGlyphs">0.2795</text><text x="920.4" y="671.9" font-size="22.5" fill="#f0f0f0" text-anchor="start" font-weight="normal" textLength="57" lengthAdjust="spacingAndGlyphs">0.6515</text><text x="1000.3" y="671.9" font-size="22.5" fill="#f0f0f0" text-anchor="start" font-weight="normal" textLength="57" lengthAdjust="spacingAndGlyphs">0.2995</text><text x="1092" y="671.9" font-size="22.5" fill="#f0f0f0" text-anchor="start" font-weight="normal" textLength="57" lengthAdjust="spacingAndGlyphs">0.1389</text><text x="1172.4" y="671.9" font-size="22.5" fill="#f0f0f0" text-anchor="start" font-weight="normal" textLength="57" lengthAdjust="spacingAndGlyphs">0.1972</text><text x="1264" y="671.9" font-size="22.5" fill="#f0f0f0" text-anchor="start" font-weight="normal" textLength="57" lengthAdjust="spacingAndGlyphs">0.2694</text><text x="1354.9" y="671.9" font-size="22.5" fill="#f0f0f0" text-anchor="start" font-weight="normal" textLength="57" lengthAdjust="spacingAndGlyphs">0.4272</text><text x="1445.6" y="671.9" font-size="22.5" fill="#f0f0f0" text-anchor="start" font-weight="normal" textLength="57" lengthAdjust="spacingAndGlyphs">0.2813</text><text x="745.5" y="709.15" font-size="22.5" fill="#f0f0f0" text-anchor="start" font-weight="normal" textLength="71.47" lengthAdjust="spacingAndGlyphs">y: CIE31</text><text x="828.7" y="709.15" font-size="22.5" fill="#f0f0f0" text-anchor="start" font-weight="normal" textLength="57" lengthAdjust="spacingAndGlyphs">0.2871</text><text x="920.4" y="709.15" font-size="22.5" fill="#f0f0f0" text-anchor="start" font-weight="normal" textLength="57" lengthAdjust="spacingAndGlyphs">0.3343</text><text x="1000.3" y="709.15" font-size="22.5" fill="#f0f0f0" text-anchor="start" font-weight="normal" textLength="57" lengthAdjust="spacingAndGlyphs">0.5800</text><text x="1092" y="709.15" font-size="22.5" fill="#f0f0f0" text-anchor="start" font-weight="normal" textLength="57" lengthAdjust="spacingAndGlyphs">0.0789</text><text x="1172.4" y="709.15" font-size="22.5" fill="#f0f0f0" text-anchor="start" font-weight="normal" textLength="57" lengthAdjust="spacingAndGlyphs">0.2616</text><text x="1264" y="709.15" font-size="22.5" fill="#f0f0f0" text-anchor="start" font-weight="normal" textLength="57" lengthAdjust="spacingAndGlyphs">0.1432</text><text x="1354.9" y="709.15" font-size="22.5" fill="#f0f0f0" text-anchor="start" font-weight="normal" textLength="57" lengthAdjust="spacingAndGlyphs">0.4900</text><text x="1445.6" y="709.15" font-size="22.5" fill="#f0f0f0" text-anchor="start" font-weight="normal" textLength="57" lengthAdjust="spacingAndGlyphs">0.2910</text><text x="745.5" y="746.4" font-size="22.5" fill="#f0f0f0" text-anchor="start" font-weight="normal" textLength="12.43" lengthAdjust="spacingAndGlyphs">Y</text><text x="828.7" y="746.4" font-size="22.5" fill="#f0f0f0" text-anchor="start" font-weight="normal" textLength="77.73" lengthAdjust="spacingAndGlyphs">275.2621</text><text x="920.4" y="746.4" font-size="22.5" fill="#f0f0f0" text-anchor="start" font-weight="normal" textLength="67.36" lengthAdjust="spacingAndGlyphs">65.4936</text><text x="1000.3" y="746.4" font-size="22.5" fill="#f0f0f0" text-anchor="start" font-weight="normal" textLength="77.73" lengthAdjust="spacingAndGlyphs">196.2958</text><text x="1092" y="746.4" font-size="22.5" fill="#f0f0f0" text-anchor="start" font-weight="normal" textLength="67.36" lengthAdjust="spacingAndGlyphs">45.3495</text><text x="1172.4" y="746.4" font-size="22.5" fill="#f0f0f0" text-anchor="start" font-weight="normal" textLength="77.73" lengthAdjust="spacingAndGlyphs">236.8651</text><text x="1264" y="746.4" font-size="22.5" fill="#f0f0f0" text-anchor="start" font-weight="normal" textLength="77.73" lengthAdjust="spacingAndGlyphs">109.8146</text><text x="1354.9" y="746.4" font-size="22.5" fill="#f0f0f0" text-anchor="start" font-weight="normal" textLength="77.73" lengthAdjust="spacingAndGlyphs">241.8139</text><text x="1445.6" y="746.4" font-size="22.5" fill="#f0f0f0" text-anchor="start" font-weight="normal" textLength="77.73" lengthAdjust="spacingAndGlyphs">340.6588</text><text x="745.5" y="783.65" font-size="22.5" fill="#f0f0f0" text-anchor="start" font-weight="normal" textLength="69.07" lengthAdjust="spacingAndGlyphs">Target Y</text><text x="828.7" y="783.65" font-size="22.5" fill="#f0f0f0" text-anchor="start" font-weight="normal" textLength="77.73" lengthAdjust="spacingAndGlyphs">275.2621</text><text x="920.4" y="783.65" font-size="22.5" fill="#f0f0f0" text-anchor="start" font-weight="normal" textLength="67.36" lengthAdjust="spacingAndGlyphs">57.6783</text><text x="1000.3" y="783.65" font-size="22.5" fill="#f0f0f0" text-anchor="start" font-weight="normal" textLength="77.73" lengthAdjust="spacingAndGlyphs">198.6061</text><text x="1092" y="783.65" font-size="22.5" fill="#f0f0f0" text-anchor="start" font-weight="normal" textLength="67.36" lengthAdjust="spacingAndGlyphs">18.9777</text><text x="1172.4" y="783.65" font-size="22.5" fill="#f0f0f0" text-anchor="start" font-weight="normal" textLength="77.73" lengthAdjust="spacingAndGlyphs">217.5838</text><text x="1264" y="783.65" font-size="22.5" fill="#f0f0f0" text-anchor="start" font-weight="normal" textLength="67.36" lengthAdjust="spacingAndGlyphs">76.6560</text><text x="1354.9" y="783.65" font-size="22.5" fill="#f0f0f0" text-anchor="start" font-weight="normal" textLength="77.73" lengthAdjust="spacingAndGlyphs">256.2844</text><text x="1445.6" y="783.65" font-size="22.5" fill="#f0f0f0" text-anchor="start" font-weight="normal" textLength="77.73" lengthAdjust="spacingAndGlyphs">340.6588</text><text x="745.5" y="820.9" font-size="22.5" fill="#f0f0f0" text-anchor="start" font-weight="normal" textLength="71.51" lengthAdjust="spacingAndGlyphs">ΔE 2000</text><text x="828.7" y="820.9" font-size="22.5" fill="#f0f0f0" text-anchor="start" font-weight="normal" textLength="67.36" lengthAdjust="spacingAndGlyphs">19.8300</text><text x="920.4" y="820.9" font-size="22.5" fill="#f0f0f0" text-anchor="start" font-weight="normal" textLength="57" lengthAdjust="spacingAndGlyphs">3.3531</text><text x="1000.3" y="820.9" font-size="22.5" fill="#f0f0f0" text-anchor="start" font-weight="normal" textLength="57" lengthAdjust="spacingAndGlyphs">7.2647</text><text x="1092" y="820.9" font-size="22.5" fill="#f0f0f0" text-anchor="start" font-weight="normal" textLength="67.36" lengthAdjust="spacingAndGlyphs">15.5438</text><text x="1172.4" y="820.9" font-size="22.5" fill="#f0f0f0" text-anchor="start" font-weight="normal" textLength="67.36" lengthAdjust="spacingAndGlyphs">23.1792</text><text x="1264" y="820.9" font-size="22.5" fill="#f0f0f0" text-anchor="start" font-weight="normal" textLength="65.98" lengthAdjust="spacingAndGlyphs">11.5992</text><text x="1354.9" y="820.9" font-size="22.5" fill="#f0f0f0" text-anchor="start" font-weight="normal" textLength="57" lengthAdjust="spacingAndGlyphs">9.5685</text><text x="1445.6" y="820.9" font-size="22.5" fill="#f0f0f0" text-anchor="start" font-weight="normal" textLength="67.36" lengthAdjust="spacingAndGlyphs">19.8228</text>
<rect x="0" y="916" width="1920" height="4" fill="#1e2525"/><rect x="60" y="918" width="431" height="2" fill="#f4f4f4"/><rect x="0" y="839" width="1920" height="77.5" fill="#242424"/><rect x="2" y="841" width="187" height="75.5" rx="5" fill="url(#btn)"/><rect x="8.5" y="847" width="174" height="45" rx="5" fill="#c0c0c0" stroke="#8a8a8a" stroke-width="1"/><text x="95.5" y="910.6" font-size="13.5" fill="#262626" text-anchor="middle" font-weight="bold" textLength="34.17" lengthAdjust="spacingAndGlyphs">White</text><rect x="191.45" y="841" width="187" height="75.5" rx="5" fill="url(#btn)"/><rect x="197.95" y="847" width="174" height="45" rx="5" fill="#c00000" stroke="#8a8a8a" stroke-width="1"/><text x="284.95" y="910.6" font-size="13.5" fill="#262626" text-anchor="middle" font-weight="bold" textLength="23.72" lengthAdjust="spacingAndGlyphs">Red</text><rect x="380.9" y="841" width="187" height="75.5" rx="5" fill="url(#btn)"/><rect x="387.4" y="847" width="174" height="45" rx="5" fill="#00c000" stroke="#8a8a8a" stroke-width="1"/><text x="474.4" y="910.6" font-size="13.5" fill="#262626" text-anchor="middle" font-weight="bold" textLength="36.29" lengthAdjust="spacingAndGlyphs">Green</text><rect x="570.35" y="841" width="187" height="75.5" rx="5" fill="url(#btn)"/><rect x="576.85" y="847" width="174" height="45" rx="5" fill="#0000c0" stroke="#8a8a8a" stroke-width="1"/><text x="663.85" y="910.6" font-size="13.5" fill="#262626" text-anchor="middle" font-weight="bold" textLength="27.21" lengthAdjust="spacingAndGlyphs">Blue</text><rect x="759.8" y="841" width="187" height="75.5" rx="5" fill="url(#btn)"/><rect x="766.3" y="847" width="174" height="45" rx="5" fill="#00c0c0" stroke="#8a8a8a" stroke-width="1"/><text x="853.3" y="910.6" font-size="13.5" fill="#262626" text-anchor="middle" font-weight="bold" textLength="30.7" lengthAdjust="spacingAndGlyphs">Cyan</text><rect x="949.25" y="841" width="187" height="75.5" rx="5" fill="url(#btn)"/><rect x="955.75" y="847" width="174" height="45" rx="5" fill="#c000c0" stroke="#8a8a8a" stroke-width="1"/><text x="1042.75" y="910.6" font-size="13.5" fill="#262626" text-anchor="middle" font-weight="bold" textLength="50.93" lengthAdjust="spacingAndGlyphs">Magenta</text><rect x="1138.7" y="841" width="187" height="75.5" rx="5" fill="url(#btn)"/><rect x="1145.2" y="847" width="174" height="45" rx="5" fill="#c0c000" stroke="#8a8a8a" stroke-width="1"/><text x="1232.2" y="910.6" font-size="13.5" fill="#262626" text-anchor="middle" font-weight="bold" textLength="39.08" lengthAdjust="spacingAndGlyphs">Yellow</text><rect x="1328.3" y="841" width="187" height="75.5" rx="5" fill="#2c2c2c" stroke="#1a1a1a" stroke-width="2"/><rect x="1334" y="846.7" width="175" height="46.3" rx="5" fill="#ffffff"/><text x="1421.7" y="910.6" font-size="13.5" fill="#f4f4f4" text-anchor="middle" font-weight="bold" textLength="33.5" lengthAdjust="spacingAndGlyphs">100W</text><rect x="1518.3" y="841" width="60" height="23.5" rx="4" fill="url(#btn2)"/><rect x="1518.3" y="865" width="60" height="51.5" rx="4" fill="url(#btn2)"/><circle cx="1548.3" cy="851.5" r="9" fill="url(#knob)"/><path d="M1543.3 854.5 L1548.3 848.5 L1553.3 854.5 Z" fill="#262626"/><rect x="1531" y="872.5" width="36" height="36" rx="5" fill="url(#stp)" stroke="#1c1c1c" stroke-width="3"/><rect x="1540.8" y="882.5" width="16.7" height="16.5" fill="url(#stp2)"/><path d="M1584.6 840.6 H1863.5 V878.3 H1580.6 V844.6 A4 4 0 0 1 1584.6 840.6 Z" fill="url(#btn2)"/><rect x="1636.8" y="840.6" width="2" height="37.7" fill="#3a3a3a"/><rect x="1694.2" y="840.6" width="2" height="37.7" fill="#3a3a3a"/><rect x="1749.8" y="840.6" width="2" height="37.7" fill="#3a3a3a"/><rect x="1806.9" y="840.6" width="2" height="37.7" fill="#3a3a3a"/><rect x="1863.5" y="840.6" width="56.5" height="37.7" fill="#2a2a2a"/><circle cx="1892.6" cy="859.2" r="12.5" fill="#333333"/><circle cx="1608.6" cy="859.2" r="12.4" fill="url(#knob)"/><circle cx="1666.6" cy="859.2" r="12.4" fill="url(#knob)"/><circle cx="1723.1" cy="859.2" r="12.4" fill="url(#knob)"/><circle cx="1779.6" cy="859.2" r="12.4" fill="url(#knob)"/><circle cx="1836.1" cy="859.2" r="12.4" fill="url(#knob)"/><rect x="1603.6" y="854.2" width="10" height="10" fill="#262626"/><path d="M1662.1 853 L1672.6 859.5 L1662.1 866 Z" fill="#262626"/><path d="M1719.6 852 H1717.1 V866 H1719.6 M1726.6 852 H1729.1 V866 H1726.6" fill="none" stroke="#262626" stroke-width="2.4"/><path d="M1720.1 859.2 H1726.1" stroke="#262626" stroke-width="1.2"/><path d="M1719.6 859.2 L1721.6 857.4 V861 Z M1726.6 859.2 L1724.6 857.4 V861 Z" fill="#262626"/><path d="M1779.6 859.2 C1776.6 855 1771.6 855 1771.6 859.2 C1771.6 863.5 1776.6 863.5 1779.6 859.2 C1782.6 855 1787.6 855 1787.6 859.2 C1787.6 863.5 1782.6 863.5 1779.6 859.2 Z" fill="none" stroke="#262626" stroke-width="2.4"/><path d="M1841.6 857 A6 6 0 0 0 1830.6 856.5 M1830.6 861.5 A6 6 0 0 0 1841.6 862" fill="none" stroke="#262626" stroke-width="2.6"/><path d="M1843.6 853 V858.5 H1838.1 Z M1828.6 865.5 V860 H1834.1 Z" fill="#262626"/><rect x="1580.6" y="879.2" width="345" height="37" rx="4" fill="url(#btn2)"/><rect x="1750.6" y="879.2" width="1.6" height="37" fill="#6a6a6a"/><circle cx="1618.9" cy="898.4" r="11.5" fill="url(#knob)"/><circle cx="1885.4" cy="898.4" r="11.5" fill="url(#knob)"/><path d="M1620 892.5 L1614.5 898.5 L1620 904.5 M1626 892.5 L1620.5 898.5 L1626 904.5" fill="none" stroke="#262626" stroke-width="2.6"/><path d="M1878.5 892.5 L1884 898.5 L1878.5 904.5 M1884.5 892.5 L1890 898.5 L1884.5 904.5" fill="none" stroke="#262626" stroke-width="2.6"/><text x="1653" y="908.7" font-size="28" fill="#303030" text-anchor="start" font-weight="bold" textLength="63" lengthAdjust="spacingAndGlyphs">Back</text><text x="1786" y="908.7" font-size="28" fill="#303030" text-anchor="start" font-weight="bold" textLength="65" lengthAdjust="spacingAndGlyphs">Next</text>
</svg>
<canvas id="cie" width="746" height="508" style="left:1164px;top:44px"></canvas>
<canvas id="inset" width="251" height="189" style="left:1651px;top:51px"></canvas>
<svg width="1920" height="920" viewBox="0 0 1920 920">
<path d="M1164.2 551.7 V44 H1910.5 V551.7" fill="none" stroke="#9c9c9c" stroke-width="2"/><line x1="1163.2" y1="551.7" x2="1911.5" y2="551.7" stroke="#9c9c9c" stroke-width="2"/><line x1="1158.2" y1="551.7" x2="1164.2" y2="551.7" stroke="#9c9c9c" stroke-width="2"/><text x="1157.2" y="557.2" font-size="15.5" fill="#d4d4d4" stroke="#d4d4d4" stroke-width="0.3" text-anchor="end" textLength="9.66" lengthAdjust="spacingAndGlyphs">0</text><line x1="1164.2" y1="551.7" x2="1164.2" y2="557.7" stroke="#9c9c9c" stroke-width="2"/><text x="1164.2" y="573.5" font-size="15.5" fill="#d4d4d4" stroke="#d4d4d4" stroke-width="0.3" text-anchor="middle" textLength="9.66" lengthAdjust="spacingAndGlyphs">0</text><line x1="1158.2" y1="491.3" x2="1164.2" y2="491.3" stroke="#9c9c9c" stroke-width="2"/><text x="1157.2" y="496.8" font-size="15.5" fill="#d4d4d4" stroke="#d4d4d4" stroke-width="0.3" text-anchor="end" textLength="24.13" lengthAdjust="spacingAndGlyphs">0.1</text><line x1="1252.93" y1="551.7" x2="1252.93" y2="557.7" stroke="#9c9c9c" stroke-width="2"/><text x="1252.93" y="573.5" font-size="15.5" fill="#d4d4d4" stroke="#d4d4d4" stroke-width="0.3" text-anchor="middle" textLength="24.13" lengthAdjust="spacingAndGlyphs">0.1</text><line x1="1158.2" y1="430.9" x2="1164.2" y2="430.9" stroke="#9c9c9c" stroke-width="2"/><text x="1157.2" y="436.4" font-size="15.5" fill="#d4d4d4" stroke="#d4d4d4" stroke-width="0.3" text-anchor="end" textLength="24.13" lengthAdjust="spacingAndGlyphs">0.2</text><line x1="1341.67" y1="551.7" x2="1341.67" y2="557.7" stroke="#9c9c9c" stroke-width="2"/><text x="1341.67" y="573.5" font-size="15.5" fill="#d4d4d4" stroke="#d4d4d4" stroke-width="0.3" text-anchor="middle" textLength="24.13" lengthAdjust="spacingAndGlyphs">0.2</text><line x1="1158.2" y1="370.5" x2="1164.2" y2="370.5" stroke="#9c9c9c" stroke-width="2"/><text x="1157.2" y="376" font-size="15.5" fill="#d4d4d4" stroke="#d4d4d4" stroke-width="0.3" text-anchor="end" textLength="24.13" lengthAdjust="spacingAndGlyphs">0.3</text><line x1="1430.41" y1="551.7" x2="1430.41" y2="557.7" stroke="#9c9c9c" stroke-width="2"/><text x="1430.41" y="573.5" font-size="15.5" fill="#d4d4d4" stroke="#d4d4d4" stroke-width="0.3" text-anchor="middle" textLength="24.13" lengthAdjust="spacingAndGlyphs">0.3</text><line x1="1158.2" y1="310.1" x2="1164.2" y2="310.1" stroke="#9c9c9c" stroke-width="2"/><text x="1157.2" y="315.6" font-size="15.5" fill="#d4d4d4" stroke="#d4d4d4" stroke-width="0.3" text-anchor="end" textLength="24.13" lengthAdjust="spacingAndGlyphs">0.4</text><line x1="1519.14" y1="551.7" x2="1519.14" y2="557.7" stroke="#9c9c9c" stroke-width="2"/><text x="1519.14" y="573.5" font-size="15.5" fill="#d4d4d4" stroke="#d4d4d4" stroke-width="0.3" text-anchor="middle" textLength="24.13" lengthAdjust="spacingAndGlyphs">0.4</text><line x1="1158.2" y1="249.7" x2="1164.2" y2="249.7" stroke="#9c9c9c" stroke-width="2"/><text x="1157.2" y="255.2" font-size="15.5" fill="#d4d4d4" stroke="#d4d4d4" stroke-width="0.3" text-anchor="end" textLength="24.13" lengthAdjust="spacingAndGlyphs">0.5</text><line x1="1607.88" y1="551.7" x2="1607.88" y2="557.7" stroke="#9c9c9c" stroke-width="2"/><text x="1607.88" y="573.5" font-size="15.5" fill="#d4d4d4" stroke="#d4d4d4" stroke-width="0.3" text-anchor="middle" textLength="24.13" lengthAdjust="spacingAndGlyphs">0.5</text><line x1="1158.2" y1="189.3" x2="1164.2" y2="189.3" stroke="#9c9c9c" stroke-width="2"/><text x="1157.2" y="194.8" font-size="15.5" fill="#d4d4d4" stroke="#d4d4d4" stroke-width="0.3" text-anchor="end" textLength="24.13" lengthAdjust="spacingAndGlyphs">0.6</text><line x1="1696.61" y1="551.7" x2="1696.61" y2="557.7" stroke="#9c9c9c" stroke-width="2"/><text x="1696.61" y="573.5" font-size="15.5" fill="#d4d4d4" stroke="#d4d4d4" stroke-width="0.3" text-anchor="middle" textLength="24.13" lengthAdjust="spacingAndGlyphs">0.6</text><line x1="1158.2" y1="128.9" x2="1164.2" y2="128.9" stroke="#9c9c9c" stroke-width="2"/><text x="1157.2" y="134.4" font-size="15.5" fill="#d4d4d4" stroke="#d4d4d4" stroke-width="0.3" text-anchor="end" textLength="24.13" lengthAdjust="spacingAndGlyphs">0.7</text><line x1="1785.35" y1="551.7" x2="1785.35" y2="557.7" stroke="#9c9c9c" stroke-width="2"/><text x="1785.35" y="573.5" font-size="15.5" fill="#d4d4d4" stroke="#d4d4d4" stroke-width="0.3" text-anchor="middle" textLength="24.13" lengthAdjust="spacingAndGlyphs">0.7</text><line x1="1158.2" y1="68.5" x2="1164.2" y2="68.5" stroke="#9c9c9c" stroke-width="2"/><text x="1157.2" y="74" font-size="15.5" fill="#d4d4d4" stroke="#d4d4d4" stroke-width="0.3" text-anchor="end" textLength="24.13" lengthAdjust="spacingAndGlyphs">0.8</text><line x1="1874.08" y1="551.7" x2="1874.08" y2="557.7" stroke="#9c9c9c" stroke-width="2"/><text x="1874.08" y="573.5" font-size="15.5" fill="#d4d4d4" stroke="#d4d4d4" stroke-width="0.3" text-anchor="middle" textLength="24.13" lengthAdjust="spacingAndGlyphs">0.8</text><text x="1522" y="38" font-size="14.5" fill="#d4d4d4" text-anchor="middle" textLength="86.89" lengthAdjust="spacingAndGlyphs">CIE 1931 xy</text><rect x="1616" y="517.5" width="290" height="26.5" fill="#2a2a2a"/><text x="1617.3" y="540" font-size="21" fill="#f2f2f2" xml:space="preserve" textLength="255" lengthAdjust="spacingAndGlyphs">Gamut Coverage:  77.8%</text><rect x="1650.5" y="50.5" width="252" height="190.5" fill="none" stroke="#9a9a9a" stroke-width="2"/><circle cx="1742.31" cy="348.98" r="5" fill="#d00010" stroke="#1c1c1c" stroke-width="1.8"/><circle cx="1429.96" cy="200.58" r="5" fill="#30a030" stroke="#1c1c1c" stroke-width="1.8"/><circle cx="1287.45" cy="503.24" r="5" fill="#0010a0" stroke="#1c1c1c" stroke-width="1.8"/><circle cx="1339.19" cy="392.89" r="5" fill="#20c0b0" stroke="#1c1c1c" stroke-width="1.8"/><circle cx="1403.25" cy="464.41" r="5" fill="#d020a0" stroke="#1c1c1c" stroke-width="1.8"/><circle cx="1543.28" cy="254.94" r="5" fill="#a0a040" stroke="#1c1c1c" stroke-width="1.8"/><circle cx="1412.21" cy="377.49" r="5" fill="#d8d8d8" stroke="#333333" stroke-width="1.8"/><circle cx="1413.81" cy="375.14" r="5" fill="#ffffff" stroke="#333333" stroke-width="1.8"/><rect x="1759.6" y="349.41" width="16" height="15" fill="none" stroke="#f2f2f2" stroke-width="2.2"/><rect x="1390.46" y="125.63" width="16" height="15" fill="none" stroke="#f2f2f2" stroke-width="2.2"/><rect x="1287.53" y="506.75" width="16" height="15" fill="none" stroke="#f2f2f2" stroke-width="2.2"/><rect x="1336.78" y="324.59" width="16" height="15" fill="none" stroke="#e8ffff" stroke-width="2.2"/><rect x="1458.25" y="449.49" width="16" height="15" fill="none" stroke="#f2f2f2" stroke-width="2.2"/><rect x="1531.19" y="210.97" width="16" height="15" fill="none" stroke="#f2f2f2" stroke-width="2.2"/><rect x="1432.88" y="331.31" width="16" height="14" fill="none" stroke="#262626" stroke-width="2.6"/><rect x="1767.5" y="138.5" width="16.5" height="13" fill="none" stroke="#101010" stroke-width="2.6"/><circle cx="1709" cy="237" r="5" fill="#c8c8c8" stroke="#333" stroke-width="1.4"/><circle cx="1712.5" cy="232" r="5" fill="#ffffff" stroke="#333" stroke-width="1.4"/>
</svg>
<script>(function(){
var LOC=[[0.1741,0.0050],[0.1740,0.0050],[0.1738,0.0049],[0.1736,0.0049],[0.1733,0.0048],[0.1730,0.0048],[0.1726,0.0048],[0.1721,0.0048],[0.1714,0.0051],[0.1703,0.0058],[0.1689,0.0069],[0.1669,0.0086],[0.1644,0.0109],[0.1611,0.0138],[0.1566,0.0177],[0.1510,0.0227],[0.1440,0.0297],[0.1355,0.0399],[0.1241,0.0578],[0.1096,0.0868],[0.0913,0.1327],[0.0687,0.2007],[0.0454,0.2950],[0.0235,0.4127],[0.0082,0.5384],[0.0039,0.6548],[0.0139,0.7502],[0.0389,0.8120],[0.0743,0.8338],[0.1142,0.8262],[0.1547,0.8059],[0.1929,0.7816],[0.2296,0.7543],[0.2658,0.7243],[0.3016,0.6923],[0.3373,0.6589],[0.3731,0.6245],[0.4087,0.5896],[0.4441,0.5547],[0.4788,0.5202],[0.5125,0.4866],[0.5448,0.4544],[0.5752,0.4242],[0.6029,0.3965],[0.6270,0.3725],[0.6482,0.3514],[0.6658,0.3340],[0.6801,0.3197],[0.6915,0.3083],[0.7006,0.2993],[0.7079,0.2920],[0.7140,0.2859],[0.7190,0.2809],[0.7230,0.2770],[0.7260,0.2740],[0.7283,0.2717],[0.7300,0.2700],[0.7311,0.2689],[0.7320,0.2680],[0.7327,0.2673],[0.7334,0.2666],[0.7340,0.2660],[0.7344,0.2656],[0.7346,0.2654],[0.7347,0.2653]];
var CX0=1164.2,CSX=887.35,CY0=551.7,CSY=604.0;
var PR=[0.680,0.320],PG=[0.265,0.690],PB=[0.150,0.060],WP=[0.3127,0.3290];
function xyz(p){return [p[0]/p[1],1,(1-p[0]-p[1])/p[1]];}
function inv3(m){var a=m[0][0],b=m[0][1],c=m[0][2],d=m[1][0],e=m[1][1],f=m[1][2],g=m[2][0],h=m[2][1],i=m[2][2];
var A=e*i-f*h,B=-(d*i-f*g),C=d*h-e*g,D=-(b*i-c*h),E=a*i-c*g,F=-(a*h-b*g),G=b*f-c*e,H=-(a*f-c*d),I=a*e-b*d;var det=a*A+b*B+c*C;
return [[A/det,D/det,G/det],[B/det,E/det,H/det],[C/det,F/det,I/det]];}
var r=xyz(PR),g=xyz(PG),b=xyz(PB),w=xyz(WP);
var P=[[r[0],g[0],b[0]],[r[1],g[1],b[1]],[r[2],g[2],b[2]]];
var Pi=inv3(P);
var S=[Pi[0][0]*w[0]+Pi[0][1]*w[1]+Pi[0][2]*w[2],Pi[1][0]*w[0]+Pi[1][1]*w[1]+Pi[1][2]*w[2],Pi[2][0]*w[0]+Pi[2][1]*w[1]+Pi[2][2]*w[2]];
var M=[[P[0][0]*S[0],P[0][1]*S[1],P[0][2]*S[2]],[P[1][0]*S[0],P[1][1]*S[1],P[1][2]*S[2]],[P[2][0]*S[0],P[2][1]*S[1],P[2][2]*S[2]]];
var Mi=inv3(M);
var GAM=window.CIE_GAMMA||1.3, GAMO=window.CIE_GAMO||2.2;
function color(x,y,out,dim){
  if(y<0.001)y=0.001;
  var X=x/y,Z=(1-x-y)/y;
  var R=Mi[0][0]*X+Mi[0][1]+Mi[0][2]*Z,G=Mi[1][0]*X+Mi[1][1]+Mi[1][2]*Z,B=Mi[2][0]*X+Mi[2][1]+Mi[2][2]*Z;
  var mn=Math.min(R,G,B), gm=GAM;
  if(mn<0){R-=mn;G-=mn;B-=mn;gm=GAMO;}
  var m=Math.max(R,G,B)||1;R/=m;G/=m;B/=m;
  out[0]=Math.pow(R,gm)*255*dim;out[1]=Math.pow(G,gm)*255*dim;out[2]=Math.pow(B,gm)*255*dim;
}
function render(cv, x0, y0, xf, yf, dim, gi){ if(gi){GAM=gi;}
  var W=cv.width,H=cv.height,ctx=cv.getContext('2d');var img=ctx.createImageData(W,H);var d=img.data;var o=[0,0,0];
  for(var j=0;j<H;j++){for(var i=0;i<W;i++){var x=xf(i+0.5),y=yf(j+0.5);color(x,y,o,dim);var k=(j*W+i)*4;d[k]=o[0];d[k+1]=o[1];d[k+2]=o[2];d[k+3]=255;}}
  ctx.putImageData(img,0,0);
}
var cv=document.getElementById('cie');
var L=Math.floor(CX0),T=44,W=cv.width,H=cv.height;
var xf=function(i){return (L+i-CX0)/CSX;}, yf=function(j){return (CY0-(T+j))/CSY;};
var dark=document.createElement('canvas');dark.width=W;dark.height=H;render(dark,0,0,xf,yf,window.CIE_DIM||0.62);
var bright=document.createElement('canvas');bright.width=W;bright.height=H;render(bright,0,0,xf,yf,1);
var ctx=cv.getContext('2d');
function px(p){return [CX0+p[0]*CSX-L, CY0-p[1]*CSY-T];}
var SL=[];for(var k=0;k<LOC.length-1;k++){var p0=LOC[Math.max(k-1,0)],p1=LOC[k],p2=LOC[k+1],p3=LOC[Math.min(k+2,LOC.length-1)];for(var s=0;s<10;s++){var t=s/10,t2=t*t,t3=t2*t;var cx=0.5*((2*p1[0])+(-p0[0]+p2[0])*t+(2*p0[0]-5*p1[0]+4*p2[0]-p3[0])*t2+(-p0[0]+3*p1[0]-3*p2[0]+p3[0])*t3);var cy=0.5*((2*p1[1])+(-p0[1]+p2[1])*t+(2*p0[1]-5*p1[1]+4*p2[1]-p3[1])*t2+(-p0[1]+3*p1[1]-3*p2[1]+p3[1])*t3);SL.push([cx,cy]);}}SL.push(LOC[LOC.length-1]);
ctx.save();ctx.beginPath();SL.forEach(function(p,i){var q=px(p);if(i)ctx.lineTo(q[0],q[1]);else ctx.moveTo(q[0],q[1]);});ctx.closePath();ctx.clip();ctx.drawImage(dark,0,0);
ctx.beginPath();[PR,PG,PB].forEach(function(p,i){var q=px(p);if(i)ctx.lineTo(q[0],q[1]);else ctx.moveTo(q[0],q[1]);});ctx.closePath();ctx.clip();ctx.drawImage(bright,0,0);ctx.restore();
// inset
var iv=document.getElementById('inset');
var IX0=1651,IY0=51;
var ixs=window.INSET||[0.2425,0.3875,0.4561,0.2661];
var ixf=function(i){return ixs[0]+(i/iv.width)*(ixs[1]-ixs[0]);}, iyf=function(j){return ixs[2]-(j/iv.height)*(ixs[2]-ixs[3]);};
render(iv,0,0,ixf,iyf,1,window.INSET_G||0.9);
})();
</script>
</body></html>
